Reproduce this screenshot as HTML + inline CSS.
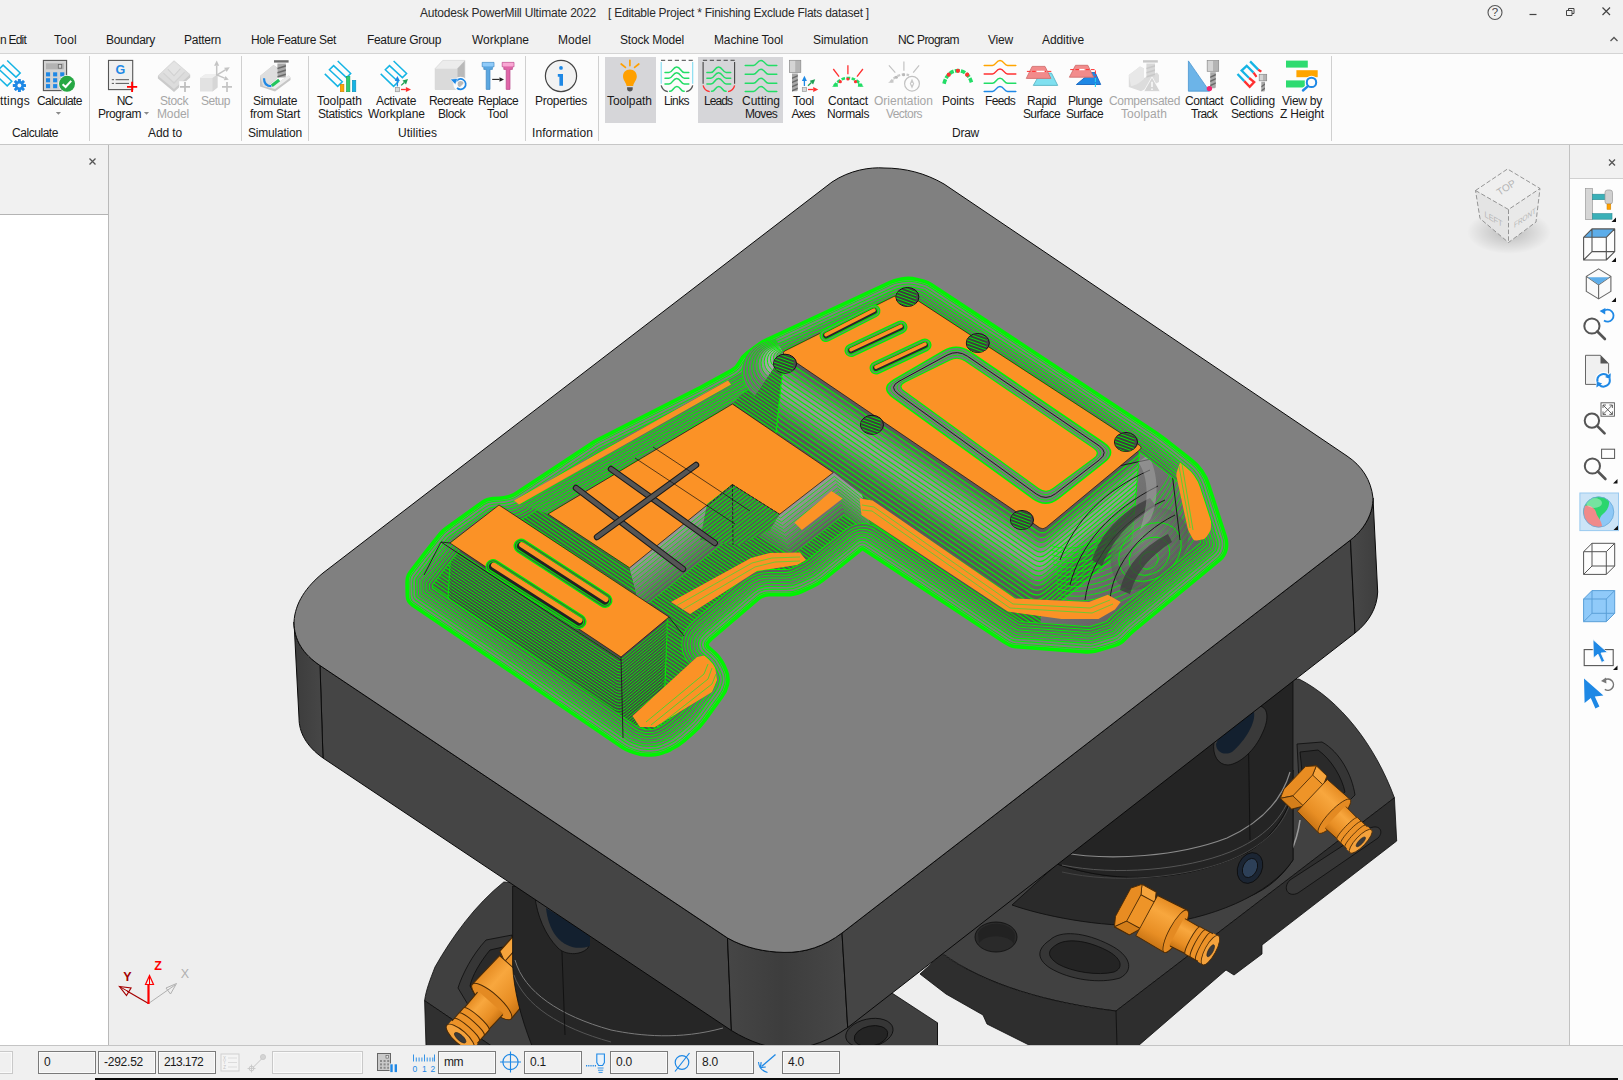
<!DOCTYPE html>
<html lang="en"><head><meta charset="utf-8"><title>Autodesk PowerMill Ultimate 2022</title>
<style>
html,body{margin:0;padding:0;background:#f0f0f0;}
body{width:1623px;height:1080px;overflow:hidden;font-family:"Liberation Sans",sans-serif;}
#app{position:relative;width:1623px;height:1080px;overflow:hidden;background:#f0f0f0;}
.t{position:absolute;width:300px;text-align:center;white-space:nowrap;line-height:1.2;font-family:"Liberation Sans",sans-serif;}
.abs{position:absolute;}
#titlebar{position:absolute;left:0;top:0;width:1623px;height:27px;background:#f1f1f1;}
#tabs{position:absolute;left:0;top:27px;width:1623px;height:26px;background:#f1f1f1;border-bottom:1px solid #d4d4d4;}
#ribbon{position:absolute;left:0;top:54px;width:1623px;height:90px;background:#fcfcfc;border-bottom:1px solid #c6c6c6;}
.sep{position:absolute;top:56px;width:1px;height:85px;background:#d0d0d0;}
.hl{position:absolute;top:57px;height:66px;background:#d6d6d9;}
#leftpanel{position:absolute;left:0;top:145px;width:108px;height:900px;background:#fff;border-right:1px solid #b9b9b9;}
#leftpanel .hd{position:absolute;left:0;top:0;width:108px;height:69px;background:#f1f1f1;border-bottom:1px solid #b4b4b4;}
#rightpanel{position:absolute;left:1569px;top:145px;width:54px;height:900px;background:#fdfdfd;border-left:1px solid #c2c2c2;}
#rightpanel .hd{position:absolute;left:0;top:0;width:54px;height:33px;background:#f1f1f1;border-bottom:1px solid #d0d0d0;}
#status{position:absolute;left:0;top:1045px;width:1623px;height:35px;background:#f0f0f0;border-top:1px solid #c4c4c4;}
.fld{position:absolute;top:1051px;height:23px;border:1px solid #7a7a7a;background:#f0f0f0;box-sizing:border-box;box-shadow:inset 0 0 0 1px #fafafa;}
.fld.dim{border-color:#c9c9c9;}
#blackline{position:absolute;left:95px;top:1078px;width:1523px;height:2px;background:#0a0a0a;}
#scene{position:absolute;left:109px;top:145px;width:1460px;height:900px;background:#eeeeee;overflow:hidden;}
#scene svg{position:absolute;left:-109px;top:-145px;}
svg.ic{position:absolute;overflow:visible;}

</style></head>
<body>
<div id="app">
<div id="scene"><svg width="1623" height="1080" viewBox="0 0 1623 1080">
<defs>
<linearGradient id="gLc" x1="0" y1="0" x2="1" y2="0"><stop offset="0" stop-color="#3c3c3c"/><stop offset="1" stop-color="#474747"/></linearGradient>
<linearGradient id="gBc" x1="0" y1="0" x2="1" y2="0"><stop offset="0" stop-color="#464646"/><stop offset="0.45" stop-color="#3d3d3d"/><stop offset="1" stop-color="#474747"/></linearGradient>
<linearGradient id="gRc" x1="0" y1="0" x2="1" y2="0"><stop offset="0" stop-color="#484848"/><stop offset="1" stop-color="#3e3e3e"/></linearGradient>
<pattern id="wall" width="3.2" height="3.2" patternUnits="userSpaceOnUse" patternTransform="rotate(34)"><rect width="3.2" height="3.2" fill="#505050"/><rect width="3.2" height="1.15" fill="#00f000"/></pattern>
<pattern id="wall2" width="2.6" height="2.6" patternUnits="userSpaceOnUse" patternTransform="rotate(34)"><rect width="2.6" height="2.6" fill="#6e6e6e"/><rect width="2.6" height="1.2" fill="#00f000"/></pattern>
<pattern id="wallB" width="3.0" height="3.0" patternUnits="userSpaceOnUse" patternTransform="rotate(-29)"><rect width="3.0" height="3.0" fill="#6a6a6a"/><rect width="3.0" height="1.3" fill="#00f000"/></pattern>
<pattern id="wallV" width="3.2" height="3.2" patternUnits="userSpaceOnUse" patternTransform="rotate(-38)"><rect width="3.2" height="3.2" fill="#585858"/><rect width="3.2" height="1.15" fill="#00f000"/></pattern>
<pattern id="wallN" width="3.4" height="3.4" patternUnits="userSpaceOnUse" patternTransform="rotate(-38)"><rect width="3.4" height="3.4" fill="#707070"/><rect width="3.4" height="1.1" fill="#00f000"/></pattern>
<pattern id="wallL" width="3.6" height="3.6" patternUnits="userSpaceOnUse" patternTransform="rotate(34)"><rect width="3.6" height="3.6" fill="#747474"/><rect width="3.6" height="1.1" fill="#00f000"/></pattern>
<pattern id="wallH" width="3" height="3" patternUnits="userSpaceOnUse" patternTransform="rotate(20)"><rect width="3" height="3" fill="#3c3c3c"/><rect width="3" height="1" fill="#00f000"/></pattern>
<linearGradient id="gNose" x1="0" y1="0" x2="1" y2="1"><stop offset="0" stop-color="#8a8a8a"/><stop offset="0.5" stop-color="#6a6a6a"/><stop offset="1" stop-color="#4a4a4a"/></linearGradient>
<radialGradient id="gChuck" cx="0.4" cy="0.35" r="0.7"><stop offset="0" stop-color="#8a8a8a"/><stop offset="1" stop-color="#4c4c4c"/></radialGradient>
<linearGradient id="gFit" x1="0" y1="0" x2="0" y2="1"><stop offset="0" stop-color="#e58b22"/><stop offset="0.3" stop-color="#f8a73e"/><stop offset="0.75" stop-color="#e88e24"/><stop offset="1" stop-color="#c97414"/></linearGradient>
</defs>
<!--FIXTURES-->
<g id="fixR" stroke="#0c0c0c" stroke-width="0.8" stroke-linejoin="round">
<!-- flange top -->
<path d="M1150,700 L1299,679 C1340,700 1375,745 1394.4,797.8 L1116,1011 C1050,1003 985,985 942,953 L900,900 Z" fill="#414141"/>
<!-- flange front -->
<path d="M942,953.7 C985,985 1050,1003 1116,1011 L1394.4,797.8 L1396.7,841 L1262,945 L1262,954 L1234,975 L1226,970 L1138,1046 L1031,1046 L987,1024 L983,1015 L946,994 L920,974 Z" fill="#2e2e2e"/>
<path d="M1116,1011 L1117,1046" fill="none" stroke="#0c0c0c"/>
<!-- recess upper-right -->
<path d="M1297,744 L1322,742 C1340,752 1352,775 1355,795 L1338,812 L1300,800 Z" fill="#353535"/>
<path d="M1300,752 L1318,750 C1332,760 1342,778 1345,792 L1334,802 L1304,790 Z" fill="#2a2a2a"/>
<!-- right obround slot -->
<path d="M1290,880 L1370,828 C1380,824 1384,832 1378,838 L1298,893 C1288,898 1282,888 1290,880 Z" fill="#363636"/>
<!-- inner curved surface right of cylinder -->
<path d="M1293,770 L1293,860 C1280,880 1262,893 1240,900 L1200,890 C1250,870 1285,830 1293,770 Z" fill="#2d2d2d"/>
<path d="M1300,820 C1296,850 1282,872 1262,888" fill="none" stroke="#9a9a9a" stroke-width="1.6"/>
<!-- holes on flange top -->
<ellipse cx="996" cy="937" rx="21" ry="15" fill="#2a2a2a"/>
<path d="M978,933 A19,13 0 0 1 1015,935 L1014,944 A19,12 0 0 0 979,943 Z" fill="#222" stroke="none"/>
<path d="M1050,940 C1060,930 1085,932 1110,945 C1130,955 1135,970 1120,978 C1100,984 1070,980 1050,968 C1035,958 1038,948 1050,940 Z" fill="#363636"/>
<path d="M1056,945 C1066,938 1086,940 1106,950 C1122,958 1124,968 1114,972 C1098,976 1072,972 1058,964 C1046,956 1048,950 1056,945 Z" fill="#242424"/>
<!-- base ring under cylinder -->
<path d="M1057,864 C1120,886 1190,880 1246,853 C1270,840 1288,815 1293,790 L1293,860 C1270,895 1210,920 1150,925 C1100,928 1040,915 1012,905 Z" fill="#2a2a2a"/>
<!-- cylinder -->
<path d="M1293,681 L1293,790 C1288,815 1270,840 1246,853 C1190,880 1120,886 1057,864 L1000,800 Z" fill="#242424"/>
<path d="M1290,772 C1282,800 1262,822 1227,838 C1180,856 1110,862 1060,852" fill="none" stroke="#8a8a8a" stroke-width="1.2"/>
<path d="M1292,790 C1284,818 1264,838 1230,852 C1185,870 1115,876 1062,865" fill="none" stroke="#555" stroke-width="1"/>
<path d="M1292,798 C1284,826 1264,846 1230,860 C1185,878 1115,884 1062,872" fill="none" stroke="#444" stroke-width="1"/>
<line x1="1248" y1="715" x2="1250" y2="840" stroke="#0c0c0c"/>
<!-- blue slot in cylinder -->
<path d="M1214,742 C1222,725 1245,708 1258,706 C1268,706 1270,718 1262,734 C1255,750 1240,764 1228,765 C1218,765 1212,755 1214,742 Z" fill="#3a3a3a"/>
<path d="M1216,744 C1222,728 1243,712 1254,712 C1256,722 1246,740 1232,752 C1224,756 1216,752 1216,744 Z" fill="#13202f" stroke="none"/>
<!-- blue bolt -->
<ellipse cx="1250" cy="868" rx="12" ry="16" transform="rotate(25 1250 868)" fill="#1b2533"/>
<ellipse cx="1250" cy="868" rx="7" ry="10" transform="rotate(25 1250 868)" fill="#2d4058"/>
<!-- fittings -->
<g transform="translate(1134.4,908.9) rotate(28.5) scale(1.0,1.2)" stroke="#4a2a06" stroke-width="0.8" stroke-linejoin="round">
<path d="M-13,-14 L-5,-21 L11,-21 L15,-13 L15,12 L8,21 L-9,21 L-13,13 Z" fill="#ee9428"/>
<path d="M-5,-21 L11,-21 L15,-13 L-1,-13 Z" fill="#f6a43c"/>
<path d="M-13,-14 L-5,-21 L-1,-13 L-1,12 L-9,21 L-13,13 Z" fill="#e88c22"/>
<path d="M-1,12 L15,12 L8,21 L-9,21 Z" fill="#d47e1a"/>
<path d="M14,-19 L46,-20 C51,-20 53,-10 53,0 C53,10 51,20 46,20 L14,19 Z" fill="url(#gFit)"/>
<ellipse cx="47" cy="0" rx="6.4" ry="20" fill="#e48a22"/>
<path d="M48,-13 L68,-12.5 L68,12.5 L48,13 Z" fill="url(#gFit)" stroke="none"/><path d="M49,-13 L68,-12.5 M49,13 L68,12.5" fill="none"/>
<path d="M66.5,-13 L71.5,-13 C75.5,-13 75.5,13 71.5,13 L66.5,13 C62.5,13 62.5,-13 66.5,-13 Z" fill="#ec9228"/>
<path d="M72.5,-13 L77.5,-13 C81.5,-13 81.5,13 77.5,13 L72.5,13 C68.5,13 68.5,-13 72.5,-13 Z" fill="#ec9228"/>
<path d="M78.5,-13 L83.5,-13 C87.5,-13 87.5,13 83.5,13 L78.5,13 C74.5,13 74.5,-13 78.5,-13 Z" fill="#ec9228"/>
<path d="M81,-13.5 L86,-13.5 L86,13.5 L81,13.5 Z" fill="#ec9228" stroke="none"/><ellipse cx="86.5" cy="0" rx="5.4" ry="13.8" fill="#f4a23c"/>
<ellipse cx="87" cy="0.3" rx="2.4" ry="5.6" fill="#3a3a3a" stroke="#222" stroke-width="0.5"/>
</g>
<g transform="translate(1303,786.5) rotate(43.5) scale(0.92,1.15)" stroke="#4a2a06" stroke-width="0.8" stroke-linejoin="round">
<path d="M-13,-14 L-5,-21 L11,-21 L15,-13 L15,12 L8,21 L-9,21 L-13,13 Z" fill="#ee9428"/>
<path d="M-5,-21 L11,-21 L15,-13 L-1,-13 Z" fill="#f6a43c"/>
<path d="M-13,-14 L-5,-21 L-1,-13 L-1,12 L-9,21 L-13,13 Z" fill="#e88c22"/>
<path d="M-1,12 L15,12 L8,21 L-9,21 Z" fill="#d47e1a"/>
<path d="M14,-19 L46,-20 C51,-20 53,-10 53,0 C53,10 51,20 46,20 L14,19 Z" fill="url(#gFit)"/>
<ellipse cx="47" cy="0" rx="6.4" ry="20" fill="#e48a22"/>
<path d="M48,-13 L68,-12.5 L68,12.5 L48,13 Z" fill="url(#gFit)" stroke="none"/><path d="M49,-13 L68,-12.5 M49,13 L68,12.5" fill="none"/>
<path d="M66.5,-13 L71.5,-13 C75.5,-13 75.5,13 71.5,13 L66.5,13 C62.5,13 62.5,-13 66.5,-13 Z" fill="#ec9228"/>
<path d="M72.5,-13 L77.5,-13 C81.5,-13 81.5,13 77.5,13 L72.5,13 C68.5,13 68.5,-13 72.5,-13 Z" fill="#ec9228"/>
<path d="M78.5,-13 L83.5,-13 C87.5,-13 87.5,13 83.5,13 L78.5,13 C74.5,13 74.5,-13 78.5,-13 Z" fill="#ec9228"/>
<path d="M81,-13.5 L86,-13.5 L86,13.5 L81,13.5 Z" fill="#ec9228" stroke="none"/><ellipse cx="86.5" cy="0" rx="5.4" ry="13.8" fill="#f4a23c"/>
<ellipse cx="87" cy="0.3" rx="2.4" ry="5.6" fill="#3a3a3a" stroke="#222" stroke-width="0.5"/>
</g>
</g>
<g id="fixL" stroke="#0c0c0c" stroke-width="0.8" stroke-linejoin="round">
<path d="M503.8,882 C475,905 452,937 435,967 C430,980 426,990 424.6,1000.7 L491.5,1046 L937.5,1046 L937.5,1022.8 L892.8,993.6 L760,900 Z" fill="#404040"/>
<path d="M424.6,1000.7 L491.5,1046 L426,1046 Z" fill="#303030"/>
<!-- recess with fitting -->
<path d="M512,935 L486,940 C472,955 462,975 458,988 L470,1008 L512,990 Z" fill="#363636"/>
<path d="M512,945 L490,950 C480,962 472,976 470,986 L478,1000 L512,986 Z" fill="#2a2a2a"/>
<!-- fittingL -->
<g transform="translate(529.2,959.4) rotate(131.6) scale(1.2,-1.3)" stroke="#4a2a06" stroke-width="0.8" stroke-linejoin="round">
<path d="M-13,-14 L-5,-21 L11,-21 L15,-13 L15,12 L8,21 L-9,21 L-13,13 Z" fill="#ee9428"/>
<path d="M-5,-21 L11,-21 L15,-13 L-1,-13 Z" fill="#f6a43c"/>
<path d="M-13,-14 L-5,-21 L-1,-13 L-1,12 L-9,21 L-13,13 Z" fill="#e88c22"/>
<path d="M-1,12 L15,12 L8,21 L-9,21 Z" fill="#d47e1a"/>
<path d="M14,-19 L46,-20 C51,-20 53,-10 53,0 C53,10 51,20 46,20 L14,19 Z" fill="url(#gFit)"/>
<ellipse cx="47" cy="0" rx="6.4" ry="20" fill="#e48a22"/>
<path d="M48,-13 L68,-12.5 L68,12.5 L48,13 Z" fill="url(#gFit)" stroke="none"/><path d="M49,-13 L68,-12.5 M49,13 L68,12.5" fill="none"/>
<path d="M66.5,-13 L71.5,-13 C75.5,-13 75.5,13 71.5,13 L66.5,13 C62.5,13 62.5,-13 66.5,-13 Z" fill="#ec9228"/>
<path d="M72.5,-13 L77.5,-13 C81.5,-13 81.5,13 77.5,13 L72.5,13 C68.5,13 68.5,-13 72.5,-13 Z" fill="#ec9228"/>
<path d="M78.5,-13 L83.5,-13 C87.5,-13 87.5,13 83.5,13 L78.5,13 C74.5,13 74.5,-13 78.5,-13 Z" fill="#ec9228"/>
<path d="M81,-13.5 L86,-13.5 L86,13.5 L81,13.5 Z" fill="#ec9228" stroke="none"/><ellipse cx="86.5" cy="0" rx="5.4" ry="13.8" fill="#f4a23c"/>
<ellipse cx="87" cy="0.3" rx="2.4" ry="5.6" fill="#3a3a3a" stroke="#222" stroke-width="0.5"/>
</g>
<!-- /fittingL -->
<!-- cylinder -->
<path d="M512.6,886 L512.6,965 C514,990 520,1015 532,1046 L760,1046 L760,900 Z" fill="#262626"/>
<path d="M515,960 C524,992 560,1016 611,1030 C640,1036 680,1040 723,1028" fill="none" stroke="#7a7a7a" stroke-width="1"/>
<path d="M514,975 C524,1005 560,1028 611,1042" fill="none" stroke="#555" stroke-width="1"/>
<line x1="561" y1="925" x2="565" y2="1035" stroke="#0c0c0c"/>
<path d="M535,897 C537,915 545,935 558,948 C565,955 580,956 588,948 L590,930 Z" fill="#3a3a3a"/>
<path d="M546,908 L590,934 L590,946 C578,950 566,948 556,936 C550,928 547,918 546,908 Z" fill="#13202f" stroke="none"/>
<!-- hole right of bottom corner -->
<ellipse cx="869.4" cy="1033" rx="24" ry="14" transform="rotate(-12 869 1033)" fill="#363636"/>
<ellipse cx="871" cy="1036" rx="17" ry="10" transform="rotate(-12 871 1036)" fill="#242424"/>
<path d="M937.5,1022.8 L937.5,1046" fill="none"/>
</g>

<!--BLOCK-->
<g id="block" stroke="#0a0a0a" stroke-width="1" stroke-linejoin="round">
<path d="M320,665.5 L727.5,938 L731.4,1030.5 L323,758 Z" fill="#454545"/>
<path d="M294,622 C294,640 303,654 320,665.5 L323,758 C306,746 299,732 299,718 Z" fill="url(#gLc)"/>
<path d="M727.5,938 C745,948 765,952 784,952.4 C805,953 825,946 842,933 L847.7,1027.6 C830,1040 810,1048 790,1049 C770,1049 750,1042 731.4,1030.5 Z" fill="url(#gBc)"/>
<path d="M842,933 L1350.5,540 L1355,633 L847.7,1027.6 Z" fill="#454545"/>
<path d="M1350.5,540 C1366,528 1373,512 1373,498 L1377.7,592 C1377,608 1369,622 1355,633 Z" fill="url(#gRc)"/>
<path d="M323,573 L832,182 C850,170 870,167 884,168 C905,168 925,173 944,184 L1347,456 C1362,466 1371,480 1373,498 C1373,512 1366,528 1350.5,540 L842,933 C825,946 805,953 784,952.4 C765,952 745,948 727.5,938 L320,665.5 C303,654 294,640 294,622 C295,603 306,587 323,573 Z" fill="#808080"/>
</g>
<g id="pocket">
<clipPath id="cpOut"><path d="M890.8,282.1 Q894.4,280.4 898.3,279.7 L901.8,279.0 Q909.3,277.6 916.7,279.4 L923.9,281.2 Q927.8,282.2 931.1,284.4 L1154.0,431.5 Q1159.0,434.8 1163.8,438.5 L1173.7,446.1 Q1180.0,451.0 1186.2,456.0 L1191.8,460.5 Q1203.7,470.0 1208.4,484.4 L1225.4,536.7 Q1227.5,543.0 1226.0,549.5 L1226.0,549.5 Q1224.5,556.0 1219.3,560.2 L1134.6,629.9 Q1130.0,633.7 1125.9,638.1 L1124.8,639.3 Q1120.7,643.7 1115.0,645.4 L1098.5,650.4 Q1094.8,651.5 1090.9,651.8 L1090.9,651.8 Q1087.0,652.0 1083.1,651.7 L1015.3,646.6 Q1011.9,646.3 1009.0,644.6 L1008.6,644.5 Q1006.0,643.0 1003.5,641.4 L863.2,549.0 Q862.4,548.5 861.6,549.1 L823.2,579.9 Q818.5,583.7 813.1,586.2 L801.7,591.5 Q794.4,594.8 786.4,594.8 L769.0,594.8 Q763.0,594.8 758.4,598.7 L713.3,637.1 Q711.0,639.0 709.0,641.2 L708.3,641.9 Q705.6,644.8 708.6,647.4 L714.4,652.5 Q720.4,657.8 723.7,665.1 L726.1,670.5 Q729.0,677.0 727.5,684.0 L727.5,684.0 Q726.0,691.0 721.8,696.8 L704.7,720.5 Q700.0,727.0 693.9,732.2 L683.9,740.8 Q677.8,746.0 670.6,749.5 L666.2,751.5 Q659.0,755.0 651.0,755.0 L646.7,755.0 Q640.7,755.0 635.1,752.9 L629.8,751.0 Q626.0,749.6 622.7,747.4 L412.4,604.9 Q407.4,601.5 407.3,595.5 L407.1,584.0 Q407.0,581.0 407.5,578.0 L407.5,578.0 Q408.0,575.0 409.9,572.6 L425.6,552.2 Q428.0,549.0 430.5,545.9 L440.1,533.8 Q442.6,530.7 445.9,528.4 L482.1,502.5 Q487.0,499.0 493.0,498.6 L499.7,498.2 Q503.7,498.0 507.6,497.0 L510.1,496.3 Q513.0,495.5 515.5,493.8 L592.0,443.2 Q594.5,441.5 597.2,440.1 L697.3,389.2 Q700.0,387.8 702.6,386.4 L731.7,370.3 Q737.0,367.4 739.7,362.0 L739.9,361.7 Q742.6,356.3 747.5,352.8 L759.8,343.8 Q763.0,341.5 766.6,339.8 Z"/></clipPath>
<path d="M890.8,282.1 Q894.4,280.4 898.3,279.7 L901.8,279.0 Q909.3,277.6 916.7,279.4 L923.9,281.2 Q927.8,282.2 931.1,284.4 L1154.0,431.5 Q1159.0,434.8 1163.8,438.5 L1173.7,446.1 Q1180.0,451.0 1186.2,456.0 L1191.8,460.5 Q1203.7,470.0 1208.4,484.4 L1225.4,536.7 Q1227.5,543.0 1226.0,549.5 L1226.0,549.5 Q1224.5,556.0 1219.3,560.2 L1134.6,629.9 Q1130.0,633.7 1125.9,638.1 L1124.8,639.3 Q1120.7,643.7 1115.0,645.4 L1098.5,650.4 Q1094.8,651.5 1090.9,651.8 L1090.9,651.8 Q1087.0,652.0 1083.1,651.7 L1015.3,646.6 Q1011.9,646.3 1009.0,644.6 L1008.6,644.5 Q1006.0,643.0 1003.5,641.4 L863.2,549.0 Q862.4,548.5 861.6,549.1 L823.2,579.9 Q818.5,583.7 813.1,586.2 L801.7,591.5 Q794.4,594.8 786.4,594.8 L769.0,594.8 Q763.0,594.8 758.4,598.7 L713.3,637.1 Q711.0,639.0 709.0,641.2 L708.3,641.9 Q705.6,644.8 708.6,647.4 L714.4,652.5 Q720.4,657.8 723.7,665.1 L726.1,670.5 Q729.0,677.0 727.5,684.0 L727.5,684.0 Q726.0,691.0 721.8,696.8 L704.7,720.5 Q700.0,727.0 693.9,732.2 L683.9,740.8 Q677.8,746.0 670.6,749.5 L666.2,751.5 Q659.0,755.0 651.0,755.0 L646.7,755.0 Q640.7,755.0 635.1,752.9 L629.8,751.0 Q626.0,749.6 622.7,747.4 L412.4,604.9 Q407.4,601.5 407.3,595.5 L407.1,584.0 Q407.0,581.0 407.5,578.0 L407.5,578.0 Q408.0,575.0 409.9,572.6 L425.6,552.2 Q428.0,549.0 430.5,545.9 L440.1,533.8 Q442.6,530.7 445.9,528.4 L482.1,502.5 Q487.0,499.0 493.0,498.6 L499.7,498.2 Q503.7,498.0 507.6,497.0 L510.1,496.3 Q513.0,495.5 515.5,493.8 L592.0,443.2 Q594.5,441.5 597.2,440.1 L697.3,389.2 Q700.0,387.8 702.6,386.4 L731.7,370.3 Q737.0,367.4 739.7,362.0 L739.9,361.7 Q742.6,356.3 747.5,352.8 L759.8,343.8 Q763.0,341.5 766.6,339.8 Z" fill="#5a5a5a"/>
<g clip-path="url(#cpOut)">
<path d="M890.8,282.1 Q894.4,280.4 898.3,279.7 L901.8,279.0 Q909.3,277.6 916.7,279.4 L923.9,281.2 Q927.8,282.2 931.1,284.4 L1154.0,431.5 Q1159.0,434.8 1163.8,438.5 L1173.7,446.1 Q1180.0,451.0 1186.2,456.0 L1191.8,460.5 Q1203.7,470.0 1208.4,484.4 L1225.4,536.7 Q1227.5,543.0 1226.0,549.5 L1226.0,549.5 Q1224.5,556.0 1219.3,560.2 L1134.6,629.9 Q1130.0,633.7 1125.9,638.1 L1124.8,639.3 Q1120.7,643.7 1115.0,645.4 L1098.5,650.4 Q1094.8,651.5 1090.9,651.8 L1090.9,651.8 Q1087.0,652.0 1083.1,651.7 L1015.3,646.6 Q1011.9,646.3 1009.0,644.6 L1008.6,644.5 Q1006.0,643.0 1003.5,641.4 L863.2,549.0 Q862.4,548.5 861.6,549.1 L823.2,579.9 Q818.5,583.7 813.1,586.2 L801.7,591.5 Q794.4,594.8 786.4,594.8 L769.0,594.8 Q763.0,594.8 758.4,598.7 L713.3,637.1 Q711.0,639.0 709.0,641.2 L708.3,641.9 Q705.6,644.8 708.6,647.4 L714.4,652.5 Q720.4,657.8 723.7,665.1 L726.1,670.5 Q729.0,677.0 727.5,684.0 L727.5,684.0 Q726.0,691.0 721.8,696.8 L704.7,720.5 Q700.0,727.0 693.9,732.2 L683.9,740.8 Q677.8,746.0 670.6,749.5 L666.2,751.5 Q659.0,755.0 651.0,755.0 L646.7,755.0 Q640.7,755.0 635.1,752.9 L629.8,751.0 Q626.0,749.6 622.7,747.4 L412.4,604.9 Q407.4,601.5 407.3,595.5 L407.1,584.0 Q407.0,581.0 407.5,578.0 L407.5,578.0 Q408.0,575.0 409.9,572.6 L425.6,552.2 Q428.0,549.0 430.5,545.9 L440.1,533.8 Q442.6,530.7 445.9,528.4 L482.1,502.5 Q487.0,499.0 493.0,498.6 L499.7,498.2 Q503.7,498.0 507.6,497.0 L510.1,496.3 Q513.0,495.5 515.5,493.8 L592.0,443.2 Q594.5,441.5 597.2,440.1 L697.3,389.2 Q700.0,387.8 702.6,386.4 L731.7,370.3 Q737.0,367.4 739.7,362.0 L739.9,361.7 Q742.6,356.3 747.5,352.8 L759.8,343.8 Q763.0,341.5 766.6,339.8 Z" fill="url(#wall)"/>
<path d="M1142.6,447.4 L1165.0,430.0 L1240.0,480.0 L1240.0,600.0 L1100.0,660.0 L1040.0,650.0 L1043.0,530.0 Z" fill="url(#gNose)"/>
<clipPath id="cpBody"><path d="M700,250 L1300,250 L1300,640 L1125,640 L1107.8,594.8 L1089,602 L1015,598.5 L872.6,500.4 L859.6,498.5 L833.3,472.6 L732.4,404 L700,420 Z"/></clipPath><g clip-path="url(#cpBody)">
<path d="M779.0,448.1 Q770.1,442.0 779.7,437.2 L884.8,384.7 Q894.4,379.9 903.4,385.8 L1127.7,532.4 Q1136.7,538.3 1128.4,545.2 L1043.9,615.3 Q1035.6,622.1 1026.7,616.1 Z" fill="#585858" stroke="#00f400" stroke-width="1.15"/>
<path d="M779.4,443.2 Q770.7,437.3 780.1,432.6 L885.5,380.0 Q894.9,375.3 903.7,381.0 L1128.2,527.8 Q1137.0,533.5 1128.9,540.2 L1044.1,610.6 Q1036.0,617.3 1027.3,611.4 Z" fill="#585858" stroke="#00f400" stroke-width="1.15"/>
<path d="M779.8,438.4 Q771.3,432.6 780.5,428.0 L886.2,375.2 Q895.4,370.6 904.0,376.2 L1128.7,523.1 Q1137.3,528.7 1129.4,535.3 L1044.3,605.9 Q1036.4,612.4 1027.9,606.7 Z" fill="#585858" stroke="#00f400" stroke-width="1.15"/>
<path d="M780.2,433.5 Q771.9,427.9 780.9,423.5 L886.9,370.4 Q895.9,365.9 904.3,371.4 L1129.3,518.5 Q1137.6,523.9 1129.9,530.3 L1044.5,601.2 Q1036.8,607.6 1028.5,602.0 Z" fill="#585858" stroke="#00f400" stroke-width="1.15"/>
<path d="M780.6,428.7 Q772.5,423.2 781.2,418.9 L887.7,365.6 Q896.4,361.3 904.5,366.6 L1129.8,513.8 Q1137.9,519.2 1130.4,525.4 L1044.7,596.5 Q1037.2,602.7 1029.1,597.3 Z" fill="#585858" stroke="#00f400" stroke-width="1.15"/>
<path d="M781.0,423.8 Q773.1,418.5 781.6,414.3 L888.4,360.9 Q896.9,356.6 904.8,361.8 L1130.3,509.2 Q1138.3,514.4 1130.9,520.4 L1044.9,591.8 Q1037.5,597.9 1029.7,592.6 Z" fill="#5b5b5b" stroke="#00f400" stroke-width="1.15"/>
<path d="M781.4,419.0 Q773.7,413.8 782.0,409.7 L889.1,356.1 Q897.4,352.0 905.1,357.0 L1130.8,504.5 Q1138.6,509.6 1131.4,515.5 L1045.1,587.1 Q1037.9,593.0 1030.3,587.9 Z" fill="#636363" stroke="#00f400" stroke-width="1.15"/>
<path d="M781.8,414.1 Q774.3,409.1 782.4,405.1 L889.8,351.3 Q897.9,347.3 905.4,352.2 L1131.3,499.9 Q1138.9,504.8 1132.0,510.5 L1045.3,582.5 Q1038.3,588.2 1030.9,583.1 Z" fill="#6e6e6e" stroke="#00f400" stroke-width="1.15"/>
<path d="M782.2,409.3 Q774.9,404.4 782.7,400.5 L890.6,346.6 Q898.4,342.6 905.7,347.4 L1131.9,495.2 Q1139.2,500.0 1132.5,505.6 L1045.4,577.8 Q1038.7,583.3 1031.5,578.4 Z" fill="#7a7a7a" stroke="#00f400" stroke-width="1.15"/>
<path d="M782.5,404.4 Q775.5,399.7 783.1,395.9 L891.3,341.8 Q898.9,338.0 906.0,342.6 L1132.4,490.6 Q1139.5,495.2 1133.0,500.7 L1045.6,573.1 Q1039.1,578.5 1032.1,573.7 Z" fill="#868686" stroke="#00f400" stroke-width="1.15"/>
<path d="M782.9,399.6 Q776.1,395.0 783.5,391.3 L892.0,337.0 Q899.4,333.3 906.3,337.8 L1132.9,485.9 Q1139.8,490.5 1133.5,495.7 L1045.8,568.4 Q1039.5,573.6 1032.7,569.0 Z" fill="#909090" stroke="#00f400" stroke-width="1.15"/>
<path d="M783.3,394.8 Q776.7,390.3 783.9,386.7 L892.7,332.2 Q899.9,328.7 906.6,333.0 L1133.4,481.3 Q1140.1,485.7 1134.0,490.8 L1046.0,563.7 Q1039.9,568.8 1033.3,564.3 Z" fill="#969696" stroke="#00f400" stroke-width="1.15"/>
<path d="M783.7,389.9 Q777.3,385.6 784.2,382.1 L893.5,327.5 Q900.4,324.0 906.9,328.3 L1133.9,476.6 Q1140.4,480.9 1134.5,485.8 L1046.2,559.0 Q1040.3,563.9 1033.9,559.6 Z" fill="#979797" stroke="#00f400" stroke-width="1.15"/>
<path d="M784.1,385.1 Q777.9,380.8 784.6,377.5 L894.2,322.7 Q900.9,319.4 907.2,323.5 L1134.5,472.0 Q1140.7,476.1 1135.0,480.9 L1046.4,554.3 Q1040.7,559.1 1034.5,554.9 Z" fill="#929292" stroke="#00f400" stroke-width="1.15"/>
<path d="M784.5,380.2 Q778.5,376.1 785.0,372.9 L894.9,317.9 Q901.4,314.7 907.5,318.7 L1135.0,467.4 Q1141.0,471.3 1135.5,475.9 L1046.6,549.6 Q1041.1,554.2 1035.1,550.2 Z" fill="#888888" stroke="#00f400" stroke-width="1.15"/>
<path d="M784.9,375.4 Q779.1,371.4 785.4,368.3 L895.6,313.2 Q901.9,310.0 907.8,313.9 L1135.5,462.7 Q1141.4,466.5 1136.0,471.0 L1046.8,544.9 Q1041.4,549.4 1035.6,545.5 Z" fill="#7c7c7c" stroke="#00f400" stroke-width="1.15"/>
<path d="M785.3,370.5 Q779.7,366.7 785.7,363.7 L896.4,308.4 Q902.4,305.4 908.0,309.1 L1136.0,458.1 Q1141.7,461.8 1136.5,466.1 L1047.0,540.2 Q1041.8,544.5 1036.2,540.8 Z" fill="#6f6f6f" stroke="#00f400" stroke-width="1.15"/>
<path d="M785.7,365.7 Q780.3,362.0 786.1,359.1 L897.1,303.6 Q902.9,300.7 908.3,304.3 L1136.5,453.4 Q1142.0,457.0 1137.0,461.1 L1047.2,535.6 Q1042.2,539.7 1036.8,536.1 Z" fill="#636363" stroke="#00f400" stroke-width="1.15"/>
<path d="M786.1,360.8 Q780.9,357.3 786.5,354.5 L897.8,298.9 Q903.4,296.1 908.6,299.5 L1137.1,448.8 Q1142.3,452.2 1137.5,456.2 L1047.4,530.9 Q1042.6,534.8 1037.4,531.3 Z" fill="#5a5a5a" stroke="#00f400" stroke-width="1.15"/>
</g>
<path d="M1050.0,545.0 C1085.0,560.0 1150.0,520.0 1172.0,470.0" fill="none" stroke="#00f400" stroke-width="0.9"/>
<path d="M1050.8,549.8 C1085.6,564.8 1151.5,525.4 1174.3,474.2" fill="none" stroke="#00f400" stroke-width="0.9"/>
<path d="M1051.5,554.5 C1086.2,569.5 1153.1,530.8 1176.6,478.5" fill="none" stroke="#00f400" stroke-width="0.9"/>
<path d="M1052.3,559.3 C1086.8,574.3 1154.6,536.2 1178.9,482.7" fill="none" stroke="#00f400" stroke-width="0.9"/>
<path d="M1053.1,564.1 C1087.5,579.1 1156.2,541.5 1181.2,486.9" fill="none" stroke="#00f400" stroke-width="0.9"/>
<path d="M1053.8,568.8 C1088.1,583.8 1157.7,546.9 1183.5,491.2" fill="none" stroke="#00f400" stroke-width="0.9"/>
<path d="M1054.6,573.6 C1088.7,588.6 1159.2,552.3 1185.8,495.4" fill="none" stroke="#00f400" stroke-width="0.9"/>
<path d="M1055.4,578.4 C1089.3,593.4 1160.8,557.7 1188.2,499.6" fill="none" stroke="#00f400" stroke-width="0.9"/>
<path d="M1056.2,583.2 C1089.9,598.2 1162.3,563.1 1190.5,503.8" fill="none" stroke="#00f400" stroke-width="0.9"/>
<path d="M1056.9,587.9 C1090.5,602.9 1163.8,568.5 1192.8,508.1" fill="none" stroke="#00f400" stroke-width="0.9"/>
<path d="M1057.7,592.7 C1091.2,607.7 1165.4,573.8 1195.1,512.3" fill="none" stroke="#00f400" stroke-width="0.9"/>
<path d="M1058.5,597.5 C1091.8,612.5 1166.9,579.2 1197.4,516.5" fill="none" stroke="#00f400" stroke-width="0.9"/>
<path d="M1059.2,602.2 C1092.4,617.2 1168.5,584.6 1199.7,520.8" fill="none" stroke="#00f400" stroke-width="0.9"/>
<path d="M1060.0,607.0 C1093.0,622.0 1170.0,590.0 1202.0,525.0" fill="none" stroke="#00f400" stroke-width="0.9"/>
<path d="M1125,520 C1150,500 1180,505 1188,530 C1192,560 1160,590 1130,590 C1105,585 1105,540 1125,520 Z" fill="url(#gChuck)" opacity="0.55"/>
<ellipse cx="1150.0" cy="552.0" rx="34" ry="26.0" transform="rotate(-38 1150 552)" fill="none" stroke="#00f400" stroke-width="0.9"/>
<ellipse cx="1147.0" cy="555.0" rx="22" ry="17.0" transform="rotate(-38 1150 552)" fill="none" stroke="#00f400" stroke-width="0.9"/>
<ellipse cx="1144.0" cy="558.0" rx="10" ry="8.0" transform="rotate(-38 1150 552)" fill="none" stroke="#00f400" stroke-width="0.9"/>
<path d="M1060,560 C1075,520 1105,490 1150,470 M1085,600 C1090,560 1120,520 1165,500 M1100,470 L1170,455 L1180,540 M1070,585 C1080,545 1110,510 1158,486 M1110,600 C1112,570 1135,535 1175,515" fill="none" stroke="#1a1a1a" stroke-width="1"/>
<path d="M1092,560 C1100,535 1120,512 1150,498 L1156,506 C1130,520 1112,540 1102,566 Z M1120,590 C1124,570 1140,548 1168,534 L1172,542 C1150,556 1136,572 1130,594 Z" fill="#3a3a3a" opacity="0.75"/>
<path d="M1148,455 C1158,470 1160,500 1150,520 L1140,530 C1150,500 1148,475 1138,462 Z" fill="#b0b0b0" opacity="0.45"/>
<path d="M629.6,567.8 L732.4,484.6 L779.6,514.3 L833.3,472.6 L862.0,495.0 L873.0,536.8 L844.3,514.4 L790.6,556.1 L743.4,526.4 L640.6,609.6 Z" fill="#7e7e7e"/>
<path d="M639.6,605.8 L742.4,522.6 L789.6,552.3 L843.3,510.6 L872.0,533.0 L873.0,536.8 L844.3,514.4 L790.6,556.1 L743.4,526.4 L640.6,609.6 Z" fill="#606060"/>
<path d="M640.6,609.6 L743.4,526.4 L790.6,556.1 L844.3,514.4 L873.0,536.8" fill="none" stroke="#00f400" stroke-width="0.8" stroke-linejoin="round"/>
<path d="M638.6,602.0 L741.4,518.8 L788.6,548.5 L842.3,506.8 L871.0,529.2 L872.0,533.0 L843.3,510.6 L789.6,552.3 L742.4,522.6 L639.6,605.8 Z" fill="#656565"/>
<path d="M639.6,605.8 L742.4,522.6 L789.6,552.3 L843.3,510.6 L872.0,533.0" fill="none" stroke="#00f400" stroke-width="0.8" stroke-linejoin="round"/>
<path d="M637.6,598.2 L740.4,515.0 L787.6,544.7 L841.3,503.0 L870.0,525.4 L871.0,529.2 L842.3,506.8 L788.6,548.5 L741.4,518.8 L638.6,602.0 Z" fill="#6a6a6a"/>
<path d="M638.6,602.0 L741.4,518.8 L788.6,548.5 L842.3,506.8 L871.0,529.2" fill="none" stroke="#00f400" stroke-width="0.8" stroke-linejoin="round"/>
<path d="M636.6,594.4 L739.4,511.2 L786.6,540.9 L840.3,499.2 L869.0,521.6 L870.0,525.4 L841.3,503.0 L787.6,544.7 L740.4,515.0 L637.6,598.2 Z" fill="#707070"/>
<path d="M637.6,598.2 L740.4,515.0 L787.6,544.7 L841.3,503.0 L870.0,525.4" fill="none" stroke="#00f400" stroke-width="0.8" stroke-linejoin="round"/>
<path d="M635.6,590.6 L738.4,507.4 L785.6,537.1 L839.3,495.4 L868.0,517.8 L869.0,521.6 L840.3,499.2 L786.6,540.9 L739.4,511.2 L636.6,594.4 Z" fill="#757575"/>
<path d="M636.6,594.4 L739.4,511.2 L786.6,540.9 L840.3,499.2 L869.0,521.6" fill="none" stroke="#00f400" stroke-width="0.8" stroke-linejoin="round"/>
<path d="M634.6,586.8 L737.4,503.6 L784.6,533.3 L838.3,491.6 L867.0,514.0 L868.0,517.8 L839.3,495.4 L785.6,537.1 L738.4,507.4 L635.6,590.6 Z" fill="#7b7b7b"/>
<path d="M635.6,590.6 L738.4,507.4 L785.6,537.1 L839.3,495.4 L868.0,517.8" fill="none" stroke="#00f400" stroke-width="0.8" stroke-linejoin="round"/>
<path d="M633.6,583.0 L736.4,499.8 L783.6,529.5 L837.3,487.8 L866.0,510.2 L867.0,514.0 L838.3,491.6 L784.6,533.3 L737.4,503.6 L634.6,586.8 Z" fill="#808080"/>
<path d="M634.6,586.8 L737.4,503.6 L784.6,533.3 L838.3,491.6 L867.0,514.0" fill="none" stroke="#00f400" stroke-width="0.8" stroke-linejoin="round"/>
<path d="M632.6,579.2 L735.4,496.0 L782.6,525.7 L836.3,484.0 L865.0,506.4 L866.0,510.2 L837.3,487.8 L783.6,529.5 L736.4,499.8 L633.6,583.0 Z" fill="#868686"/>
<path d="M633.6,583.0 L736.4,499.8 L783.6,529.5 L837.3,487.8 L866.0,510.2" fill="none" stroke="#00f400" stroke-width="0.8" stroke-linejoin="round"/>
<path d="M631.6,575.4 L734.4,492.2 L781.6,521.9 L835.3,480.2 L864.0,502.6 L865.0,506.4 L836.3,484.0 L782.6,525.7 L735.4,496.0 L632.6,579.2 Z" fill="#8b8b8b"/>
<path d="M632.6,579.2 L735.4,496.0 L782.6,525.7 L836.3,484.0 L865.0,506.4" fill="none" stroke="#00f400" stroke-width="0.8" stroke-linejoin="round"/>
<path d="M630.6,571.6 L733.4,488.4 L780.6,518.1 L834.3,476.4 L863.0,498.8 L864.0,502.6 L835.3,480.2 L781.6,521.9 L734.4,492.2 L631.6,575.4 Z" fill="#919191"/>
<path d="M631.6,575.4 L734.4,492.2 L781.6,521.9 L835.3,480.2 L864.0,502.6" fill="none" stroke="#00f400" stroke-width="0.8" stroke-linejoin="round"/>
<path d="M629.6,567.8 L732.4,484.6 L779.6,514.3 L833.3,472.6 L862.0,495.0 L863.0,498.8 L834.3,476.4 L780.6,518.1 L733.4,488.4 L630.6,571.6 Z" fill="#969696"/>
<path d="M630.6,571.6 L733.4,488.4 L780.6,518.1 L834.3,476.4 L863.0,498.8" fill="none" stroke="#00f400" stroke-width="0.8" stroke-linejoin="round"/>
<path d="M450.5,628.2 Q442.4,622.8 450.1,616.8 L485.3,589.5 Q493.0,583.6 501.1,588.9 L660.3,693.8 Q668.5,699.2 661.0,705.4 L626.4,734.2 Q618.9,740.5 610.8,735.1 Z" fill="#424242" stroke="#00f400" stroke-width="1.0"/>
<path d="M450.6,625.1 Q442.7,619.8 450.2,614.0 L485.7,586.5 Q493.2,580.6 501.1,585.9 L660.6,690.9 Q668.5,696.1 661.2,702.2 L626.3,731.3 Q619.0,737.4 611.1,732.1 Z" fill="#424242" stroke="#00f400" stroke-width="1.0"/>
<path d="M450.7,622.0 Q443.0,616.9 450.3,611.2 L486.1,583.4 Q493.4,577.7 501.2,582.8 L660.8,688.0 Q668.5,693.1 661.4,699.0 L626.2,728.4 Q619.1,734.3 611.4,729.2 Z" fill="#424242" stroke="#00f400" stroke-width="1.0"/>
<path d="M450.7,618.9 Q443.2,613.9 450.4,608.4 L486.5,580.3 Q493.7,574.8 501.2,579.8 L661.0,685.1 Q668.5,690.1 661.6,695.8 L626.1,725.4 Q619.2,731.2 611.7,726.2 Z" fill="#434343" stroke="#00f400" stroke-width="1.0"/>
<path d="M450.8,615.8 Q443.5,611.0 450.4,605.6 L487.0,577.3 Q493.9,571.9 501.2,576.7 L661.3,682.2 Q668.6,687.0 661.8,692.6 L626.0,722.5 Q619.2,728.1 612.0,723.3 Z" fill="#434343" stroke="#00f400" stroke-width="1.0"/>
<path d="M450.9,612.7 Q443.8,608.0 450.5,602.8 L487.4,574.2 Q494.1,569.0 501.2,573.7 L661.5,679.3 Q668.6,684.0 662.1,689.4 L625.8,719.6 Q619.3,725.0 612.2,720.3 Z" fill="#444444" stroke="#00f400" stroke-width="1.0"/>
<path d="M450.9,609.6 Q444.1,605.1 450.6,600.0 L487.8,571.2 Q494.3,566.1 501.2,570.6 L661.7,676.4 Q668.6,680.9 662.3,686.2 L625.7,716.6 Q619.4,721.9 612.5,717.4 Z" fill="#444444" stroke="#00f400" stroke-width="1.0"/>
<path d="M451.0,606.5 Q444.4,602.1 450.7,597.2 L488.2,568.1 Q494.5,563.2 501.2,567.6 L661.9,673.5 Q668.6,677.9 662.5,683.0 L625.6,713.7 Q619.5,718.8 612.8,714.4 Z" fill="#454545" stroke="#00f400" stroke-width="1.0"/>
<path d="M451.1,603.4 Q444.6,599.1 450.8,594.4 L488.6,565.0 Q494.8,560.3 501.2,564.5 L662.2,670.6 Q668.6,674.8 662.7,679.8 L625.5,710.8 Q619.5,715.7 613.1,711.4 Z" fill="#454545" stroke="#00f400" stroke-width="1.0"/>
<path d="M451.2,600.4 Q444.9,596.2 450.9,591.6 L489.1,562.0 Q495.0,557.4 501.3,561.5 L662.4,667.7 Q668.7,671.8 662.9,676.6 L625.4,707.9 Q619.6,712.7 613.4,708.5 Z" fill="#464646" stroke="#00f400" stroke-width="1.0"/>
<path d="M451.2,597.3 Q445.2,593.2 450.9,588.8 L489.5,558.9 Q495.2,554.5 501.3,558.4 L662.6,664.8 Q668.7,668.7 663.1,673.4 L625.3,704.9 Q619.7,709.6 613.7,705.5 Z" fill="#464646" stroke="#00f400" stroke-width="1.0"/>
<path d="M451.3,594.2 Q445.5,590.3 451.0,586.0 L489.9,555.8 Q495.4,551.6 501.3,555.4 L662.9,661.8 Q668.7,665.7 663.3,670.2 L625.2,702.0 Q619.8,706.5 614.0,702.6 Z" fill="#464646" stroke="#00f400" stroke-width="1.0"/>
<path d="M451.4,591.1 Q445.8,587.3 451.1,583.2 L490.3,552.8 Q495.7,548.6 501.3,552.4 L663.1,658.9 Q668.7,662.7 663.5,667.0 L625.0,699.1 Q619.9,703.4 614.2,699.6 Z" fill="#474747" stroke="#00f400" stroke-width="1.0"/>
<path d="M451.5,588.0 Q446.1,584.4 451.2,580.4 L490.7,549.7 Q495.9,545.7 501.3,549.3 L663.3,656.0 Q668.7,659.6 663.7,663.8 L624.9,696.1 Q619.9,700.3 614.5,696.7 Z" fill="#474747" stroke="#00f400" stroke-width="1.0"/>
<path d="M451.5,584.9 Q446.3,581.4 451.3,577.6 L491.2,546.7 Q496.1,542.8 501.3,546.3 L663.5,653.1 Q668.8,656.6 664.0,660.6 L624.8,693.2 Q620.0,697.2 614.8,693.7 Z" fill="#484848" stroke="#00f400" stroke-width="1.0"/>
<path d="M451.6,581.8 Q446.6,578.5 451.4,574.8 L491.6,543.6 Q496.3,539.9 501.3,543.2 L663.8,650.2 Q668.8,653.5 664.2,657.4 L624.7,690.3 Q620.1,694.1 615.1,690.8 Z" fill="#484848" stroke="#00f400" stroke-width="1.0"/>
<path d="M451.7,578.7 Q446.9,575.5 451.4,572.0 L492.0,540.5 Q496.5,537.0 501.3,540.2 L664.0,647.3 Q668.8,650.5 664.4,654.2 L624.6,687.3 Q620.2,691.0 615.4,687.8 Z" fill="#494949" stroke="#00f400" stroke-width="1.0"/>
<path d="M451.8,575.6 Q447.2,572.5 451.5,569.2 L492.4,537.5 Q496.8,534.1 501.4,537.1 L664.2,644.4 Q668.8,647.4 664.6,651.0 L624.5,684.4 Q620.2,687.9 615.7,684.9 Z" fill="#494949" stroke="#00f400" stroke-width="1.0"/>
<path d="M451.8,572.5 Q447.5,569.6 451.6,566.4 L492.8,534.4 Q497.0,531.2 501.4,534.1 L664.4,641.5 Q668.8,644.4 664.8,647.8 L624.3,681.5 Q620.3,684.8 615.9,681.9 Z" fill="#4a4a4a" stroke="#00f400" stroke-width="1.0"/>
<path d="M451.9,569.4 Q447.7,566.6 451.7,563.6 L493.3,531.3 Q497.2,528.3 501.4,531.0 L664.7,638.6 Q668.8,641.4 665.0,644.6 L624.2,678.5 Q620.4,681.7 616.2,679.0 Z" fill="#4a4a4a" stroke="#00f400" stroke-width="1.0"/>
<path d="M452.0,566.3 Q448.0,563.7 451.8,560.8 L493.7,528.3 Q497.4,525.4 501.4,528.0 L664.9,635.7 Q668.9,638.3 665.2,641.3 L624.1,675.6 Q620.5,678.6 616.5,676.0 Z" fill="#4a4a4a" stroke="#00f400" stroke-width="1.0"/>
<path d="M452.1,563.2 Q448.3,560.7 451.9,558.0 L494.1,525.2 Q497.7,522.5 501.4,524.9 L665.1,632.8 Q668.9,635.3 665.4,638.1 L624.0,672.7 Q620.5,675.6 616.8,673.1 Z" fill="#4b4b4b" stroke="#00f400" stroke-width="1.0"/>
<path d="M452.1,560.1 Q448.6,557.8 451.9,555.2 L494.5,522.2 Q497.9,519.5 501.4,521.9 L665.4,629.9 Q668.9,632.2 665.6,634.9 L623.9,669.7 Q620.6,672.5 617.1,670.1 Z" fill="#4b4b4b" stroke="#00f400" stroke-width="1.0"/>
<path d="M452.2,557.0 Q448.9,554.8 452.0,552.4 L494.9,519.1 Q498.1,516.6 501.4,518.8 L665.6,627.0 Q668.9,629.2 665.9,631.7 L623.8,666.8 Q620.7,669.4 617.4,667.1 Z" fill="#4c4c4c" stroke="#00f400" stroke-width="1.0"/>
<path d="M452.3,553.9 Q449.2,551.9 452.1,549.6 L495.4,516.0 Q498.3,513.7 501.5,515.8 L665.8,624.1 Q668.9,626.1 666.1,628.5 L623.7,663.9 Q620.8,666.3 617.7,664.2 Z" fill="#4c4c4c" stroke="#00f400" stroke-width="1.0"/>
<path d="M452.3,550.9 Q449.4,548.9 452.2,546.8 L495.8,513.0 Q498.6,510.8 501.5,512.7 L666.0,621.2 Q669.0,623.1 666.3,625.3 L623.5,660.9 Q620.8,663.2 617.9,661.2 Z" fill="#4d4d4d" stroke="#00f400" stroke-width="1.0"/>
<path d="M452.4,547.8 Q449.7,546.0 452.3,544.0 L496.2,509.9 Q498.8,507.9 501.5,509.7 L666.3,618.3 Q669.0,620.0 666.5,622.1 L623.4,658.0 Q620.9,660.1 618.2,658.3 Z" fill="#4d4d4d" stroke="#00f400" stroke-width="1.0"/>
<path d="M890.8,282.1 Q894.4,280.4 898.3,279.7 L901.8,279.0 Q909.3,277.6 916.7,279.4 L923.9,281.2 Q927.8,282.2 931.1,284.4 L1154.0,431.5 Q1159.0,434.8 1163.8,438.5 L1173.7,446.1 Q1180.0,451.0 1186.2,456.0 L1191.8,460.5 Q1203.7,470.0 1208.4,484.4 L1225.4,536.7 Q1227.5,543.0 1226.0,549.5 L1226.0,549.5 Q1224.5,556.0 1219.3,560.2 L1134.6,629.9 Q1130.0,633.7 1125.9,638.1 L1124.8,639.3 Q1120.7,643.7 1115.0,645.4 L1098.5,650.4 Q1094.8,651.5 1090.9,651.8 L1090.9,651.8 Q1087.0,652.0 1083.1,651.7 L1015.3,646.6 Q1011.9,646.3 1009.0,644.6 L1008.6,644.5 Q1006.0,643.0 1003.5,641.4 L863.2,549.0 Q862.4,548.5 861.6,549.1 L823.2,579.9 Q818.5,583.7 813.1,586.2 L801.7,591.5 Q794.4,594.8 786.4,594.8 L769.0,594.8 Q763.0,594.8 758.4,598.7 L713.3,637.1 Q711.0,639.0 709.0,641.2 L708.3,641.9 Q705.6,644.8 708.6,647.4 L714.4,652.5 Q720.4,657.8 723.7,665.1 L726.1,670.5 Q729.0,677.0 727.5,684.0 L727.5,684.0 Q726.0,691.0 721.8,696.8 L704.7,720.5 Q700.0,727.0 693.9,732.2 L683.9,740.8 Q677.8,746.0 670.6,749.5 L666.2,751.5 Q659.0,755.0 651.0,755.0 L646.7,755.0 Q640.7,755.0 635.1,752.9 L629.8,751.0 Q626.0,749.6 622.7,747.4 L412.4,604.9 Q407.4,601.5 407.3,595.5 L407.1,584.0 Q407.0,581.0 407.5,578.0 L407.5,578.0 Q408.0,575.0 409.9,572.6 L425.6,552.2 Q428.0,549.0 430.5,545.9 L440.1,533.8 Q442.6,530.7 445.9,528.4 L482.1,502.5 Q487.0,499.0 493.0,498.6 L499.7,498.2 Q503.7,498.0 507.6,497.0 L510.1,496.3 Q513.0,495.5 515.5,493.8 L592.0,443.2 Q594.5,441.5 597.2,440.1 L697.3,389.2 Q700.0,387.8 702.6,386.4 L731.7,370.3 Q737.0,367.4 739.7,362.0 L739.9,361.7 Q742.6,356.3 747.5,352.8 L759.8,343.8 Q763.0,341.5 766.6,339.8 Z" fill="none" stroke="#00f400" stroke-width="51.4" stroke-linejoin="round"/>
<path d="M890.8,282.1 Q894.4,280.4 898.3,279.7 L901.8,279.0 Q909.3,277.6 916.7,279.4 L923.9,281.2 Q927.8,282.2 931.1,284.4 L1154.0,431.5 Q1159.0,434.8 1163.8,438.5 L1173.7,446.1 Q1180.0,451.0 1186.2,456.0 L1191.8,460.5 Q1203.7,470.0 1208.4,484.4 L1225.4,536.7 Q1227.5,543.0 1226.0,549.5 L1226.0,549.5 Q1224.5,556.0 1219.3,560.2 L1134.6,629.9 Q1130.0,633.7 1125.9,638.1 L1124.8,639.3 Q1120.7,643.7 1115.0,645.4 L1098.5,650.4 Q1094.8,651.5 1090.9,651.8 L1090.9,651.8 Q1087.0,652.0 1083.1,651.7 L1015.3,646.6 Q1011.9,646.3 1009.0,644.6 L1008.6,644.5 Q1006.0,643.0 1003.5,641.4 L863.2,549.0 Q862.4,548.5 861.6,549.1 L823.2,579.9 Q818.5,583.7 813.1,586.2 L801.7,591.5 Q794.4,594.8 786.4,594.8 L769.0,594.8 Q763.0,594.8 758.4,598.7 L713.3,637.1 Q711.0,639.0 709.0,641.2 L708.3,641.9 Q705.6,644.8 708.6,647.4 L714.4,652.5 Q720.4,657.8 723.7,665.1 L726.1,670.5 Q729.0,677.0 727.5,684.0 L727.5,684.0 Q726.0,691.0 721.8,696.8 L704.7,720.5 Q700.0,727.0 693.9,732.2 L683.9,740.8 Q677.8,746.0 670.6,749.5 L666.2,751.5 Q659.0,755.0 651.0,755.0 L646.7,755.0 Q640.7,755.0 635.1,752.9 L629.8,751.0 Q626.0,749.6 622.7,747.4 L412.4,604.9 Q407.4,601.5 407.3,595.5 L407.1,584.0 Q407.0,581.0 407.5,578.0 L407.5,578.0 Q408.0,575.0 409.9,572.6 L425.6,552.2 Q428.0,549.0 430.5,545.9 L440.1,533.8 Q442.6,530.7 445.9,528.4 L482.1,502.5 Q487.0,499.0 493.0,498.6 L499.7,498.2 Q503.7,498.0 507.6,497.0 L510.1,496.3 Q513.0,495.5 515.5,493.8 L592.0,443.2 Q594.5,441.5 597.2,440.1 L697.3,389.2 Q700.0,387.8 702.6,386.4 L731.7,370.3 Q737.0,367.4 739.7,362.0 L739.9,361.7 Q742.6,356.3 747.5,352.8 L759.8,343.8 Q763.0,341.5 766.6,339.8 Z" fill="none" stroke="#5e5e5e" stroke-width="49.4" stroke-linejoin="round"/>
<path d="M890.8,282.1 Q894.4,280.4 898.3,279.7 L901.8,279.0 Q909.3,277.6 916.7,279.4 L923.9,281.2 Q927.8,282.2 931.1,284.4 L1154.0,431.5 Q1159.0,434.8 1163.8,438.5 L1173.7,446.1 Q1180.0,451.0 1186.2,456.0 L1191.8,460.5 Q1203.7,470.0 1208.4,484.4 L1225.4,536.7 Q1227.5,543.0 1226.0,549.5 L1226.0,549.5 Q1224.5,556.0 1219.3,560.2 L1134.6,629.9 Q1130.0,633.7 1125.9,638.1 L1124.8,639.3 Q1120.7,643.7 1115.0,645.4 L1098.5,650.4 Q1094.8,651.5 1090.9,651.8 L1090.9,651.8 Q1087.0,652.0 1083.1,651.7 L1015.3,646.6 Q1011.9,646.3 1009.0,644.6 L1008.6,644.5 Q1006.0,643.0 1003.5,641.4 L863.2,549.0 Q862.4,548.5 861.6,549.1 L823.2,579.9 Q818.5,583.7 813.1,586.2 L801.7,591.5 Q794.4,594.8 786.4,594.8 L769.0,594.8 Q763.0,594.8 758.4,598.7 L713.3,637.1 Q711.0,639.0 709.0,641.2 L708.3,641.9 Q705.6,644.8 708.6,647.4 L714.4,652.5 Q720.4,657.8 723.7,665.1 L726.1,670.5 Q729.0,677.0 727.5,684.0 L727.5,684.0 Q726.0,691.0 721.8,696.8 L704.7,720.5 Q700.0,727.0 693.9,732.2 L683.9,740.8 Q677.8,746.0 670.6,749.5 L666.2,751.5 Q659.0,755.0 651.0,755.0 L646.7,755.0 Q640.7,755.0 635.1,752.9 L629.8,751.0 Q626.0,749.6 622.7,747.4 L412.4,604.9 Q407.4,601.5 407.3,595.5 L407.1,584.0 Q407.0,581.0 407.5,578.0 L407.5,578.0 Q408.0,575.0 409.9,572.6 L425.6,552.2 Q428.0,549.0 430.5,545.9 L440.1,533.8 Q442.6,530.7 445.9,528.4 L482.1,502.5 Q487.0,499.0 493.0,498.6 L499.7,498.2 Q503.7,498.0 507.6,497.0 L510.1,496.3 Q513.0,495.5 515.5,493.8 L592.0,443.2 Q594.5,441.5 597.2,440.1 L697.3,389.2 Q700.0,387.8 702.6,386.4 L731.7,370.3 Q737.0,367.4 739.7,362.0 L739.9,361.7 Q742.6,356.3 747.5,352.8 L759.8,343.8 Q763.0,341.5 766.6,339.8 Z" fill="none" stroke="#00f400" stroke-width="45.8" stroke-linejoin="round"/>
<path d="M890.8,282.1 Q894.4,280.4 898.3,279.7 L901.8,279.0 Q909.3,277.6 916.7,279.4 L923.9,281.2 Q927.8,282.2 931.1,284.4 L1154.0,431.5 Q1159.0,434.8 1163.8,438.5 L1173.7,446.1 Q1180.0,451.0 1186.2,456.0 L1191.8,460.5 Q1203.7,470.0 1208.4,484.4 L1225.4,536.7 Q1227.5,543.0 1226.0,549.5 L1226.0,549.5 Q1224.5,556.0 1219.3,560.2 L1134.6,629.9 Q1130.0,633.7 1125.9,638.1 L1124.8,639.3 Q1120.7,643.7 1115.0,645.4 L1098.5,650.4 Q1094.8,651.5 1090.9,651.8 L1090.9,651.8 Q1087.0,652.0 1083.1,651.7 L1015.3,646.6 Q1011.9,646.3 1009.0,644.6 L1008.6,644.5 Q1006.0,643.0 1003.5,641.4 L863.2,549.0 Q862.4,548.5 861.6,549.1 L823.2,579.9 Q818.5,583.7 813.1,586.2 L801.7,591.5 Q794.4,594.8 786.4,594.8 L769.0,594.8 Q763.0,594.8 758.4,598.7 L713.3,637.1 Q711.0,639.0 709.0,641.2 L708.3,641.9 Q705.6,644.8 708.6,647.4 L714.4,652.5 Q720.4,657.8 723.7,665.1 L726.1,670.5 Q729.0,677.0 727.5,684.0 L727.5,684.0 Q726.0,691.0 721.8,696.8 L704.7,720.5 Q700.0,727.0 693.9,732.2 L683.9,740.8 Q677.8,746.0 670.6,749.5 L666.2,751.5 Q659.0,755.0 651.0,755.0 L646.7,755.0 Q640.7,755.0 635.1,752.9 L629.8,751.0 Q626.0,749.6 622.7,747.4 L412.4,604.9 Q407.4,601.5 407.3,595.5 L407.1,584.0 Q407.0,581.0 407.5,578.0 L407.5,578.0 Q408.0,575.0 409.9,572.6 L425.6,552.2 Q428.0,549.0 430.5,545.9 L440.1,533.8 Q442.6,530.7 445.9,528.4 L482.1,502.5 Q487.0,499.0 493.0,498.6 L499.7,498.2 Q503.7,498.0 507.6,497.0 L510.1,496.3 Q513.0,495.5 515.5,493.8 L592.0,443.2 Q594.5,441.5 597.2,440.1 L697.3,389.2 Q700.0,387.8 702.6,386.4 L731.7,370.3 Q737.0,367.4 739.7,362.0 L739.9,361.7 Q742.6,356.3 747.5,352.8 L759.8,343.8 Q763.0,341.5 766.6,339.8 Z" fill="none" stroke="#626262" stroke-width="43.8" stroke-linejoin="round"/>
<path d="M890.8,282.1 Q894.4,280.4 898.3,279.7 L901.8,279.0 Q909.3,277.6 916.7,279.4 L923.9,281.2 Q927.8,282.2 931.1,284.4 L1154.0,431.5 Q1159.0,434.8 1163.8,438.5 L1173.7,446.1 Q1180.0,451.0 1186.2,456.0 L1191.8,460.5 Q1203.7,470.0 1208.4,484.4 L1225.4,536.7 Q1227.5,543.0 1226.0,549.5 L1226.0,549.5 Q1224.5,556.0 1219.3,560.2 L1134.6,629.9 Q1130.0,633.7 1125.9,638.1 L1124.8,639.3 Q1120.7,643.7 1115.0,645.4 L1098.5,650.4 Q1094.8,651.5 1090.9,651.8 L1090.9,651.8 Q1087.0,652.0 1083.1,651.7 L1015.3,646.6 Q1011.9,646.3 1009.0,644.6 L1008.6,644.5 Q1006.0,643.0 1003.5,641.4 L863.2,549.0 Q862.4,548.5 861.6,549.1 L823.2,579.9 Q818.5,583.7 813.1,586.2 L801.7,591.5 Q794.4,594.8 786.4,594.8 L769.0,594.8 Q763.0,594.8 758.4,598.7 L713.3,637.1 Q711.0,639.0 709.0,641.2 L708.3,641.9 Q705.6,644.8 708.6,647.4 L714.4,652.5 Q720.4,657.8 723.7,665.1 L726.1,670.5 Q729.0,677.0 727.5,684.0 L727.5,684.0 Q726.0,691.0 721.8,696.8 L704.7,720.5 Q700.0,727.0 693.9,732.2 L683.9,740.8 Q677.8,746.0 670.6,749.5 L666.2,751.5 Q659.0,755.0 651.0,755.0 L646.7,755.0 Q640.7,755.0 635.1,752.9 L629.8,751.0 Q626.0,749.6 622.7,747.4 L412.4,604.9 Q407.4,601.5 407.3,595.5 L407.1,584.0 Q407.0,581.0 407.5,578.0 L407.5,578.0 Q408.0,575.0 409.9,572.6 L425.6,552.2 Q428.0,549.0 430.5,545.9 L440.1,533.8 Q442.6,530.7 445.9,528.4 L482.1,502.5 Q487.0,499.0 493.0,498.6 L499.7,498.2 Q503.7,498.0 507.6,497.0 L510.1,496.3 Q513.0,495.5 515.5,493.8 L592.0,443.2 Q594.5,441.5 597.2,440.1 L697.3,389.2 Q700.0,387.8 702.6,386.4 L731.7,370.3 Q737.0,367.4 739.7,362.0 L739.9,361.7 Q742.6,356.3 747.5,352.8 L759.8,343.8 Q763.0,341.5 766.6,339.8 Z" fill="none" stroke="#00f400" stroke-width="40.2" stroke-linejoin="round"/>
<path d="M890.8,282.1 Q894.4,280.4 898.3,279.7 L901.8,279.0 Q909.3,277.6 916.7,279.4 L923.9,281.2 Q927.8,282.2 931.1,284.4 L1154.0,431.5 Q1159.0,434.8 1163.8,438.5 L1173.7,446.1 Q1180.0,451.0 1186.2,456.0 L1191.8,460.5 Q1203.7,470.0 1208.4,484.4 L1225.4,536.7 Q1227.5,543.0 1226.0,549.5 L1226.0,549.5 Q1224.5,556.0 1219.3,560.2 L1134.6,629.9 Q1130.0,633.7 1125.9,638.1 L1124.8,639.3 Q1120.7,643.7 1115.0,645.4 L1098.5,650.4 Q1094.8,651.5 1090.9,651.8 L1090.9,651.8 Q1087.0,652.0 1083.1,651.7 L1015.3,646.6 Q1011.9,646.3 1009.0,644.6 L1008.6,644.5 Q1006.0,643.0 1003.5,641.4 L863.2,549.0 Q862.4,548.5 861.6,549.1 L823.2,579.9 Q818.5,583.7 813.1,586.2 L801.7,591.5 Q794.4,594.8 786.4,594.8 L769.0,594.8 Q763.0,594.8 758.4,598.7 L713.3,637.1 Q711.0,639.0 709.0,641.2 L708.3,641.9 Q705.6,644.8 708.6,647.4 L714.4,652.5 Q720.4,657.8 723.7,665.1 L726.1,670.5 Q729.0,677.0 727.5,684.0 L727.5,684.0 Q726.0,691.0 721.8,696.8 L704.7,720.5 Q700.0,727.0 693.9,732.2 L683.9,740.8 Q677.8,746.0 670.6,749.5 L666.2,751.5 Q659.0,755.0 651.0,755.0 L646.7,755.0 Q640.7,755.0 635.1,752.9 L629.8,751.0 Q626.0,749.6 622.7,747.4 L412.4,604.9 Q407.4,601.5 407.3,595.5 L407.1,584.0 Q407.0,581.0 407.5,578.0 L407.5,578.0 Q408.0,575.0 409.9,572.6 L425.6,552.2 Q428.0,549.0 430.5,545.9 L440.1,533.8 Q442.6,530.7 445.9,528.4 L482.1,502.5 Q487.0,499.0 493.0,498.6 L499.7,498.2 Q503.7,498.0 507.6,497.0 L510.1,496.3 Q513.0,495.5 515.5,493.8 L592.0,443.2 Q594.5,441.5 597.2,440.1 L697.3,389.2 Q700.0,387.8 702.6,386.4 L731.7,370.3 Q737.0,367.4 739.7,362.0 L739.9,361.7 Q742.6,356.3 747.5,352.8 L759.8,343.8 Q763.0,341.5 766.6,339.8 Z" fill="none" stroke="#666666" stroke-width="38.2" stroke-linejoin="round"/>
<path d="M890.8,282.1 Q894.4,280.4 898.3,279.7 L901.8,279.0 Q909.3,277.6 916.7,279.4 L923.9,281.2 Q927.8,282.2 931.1,284.4 L1154.0,431.5 Q1159.0,434.8 1163.8,438.5 L1173.7,446.1 Q1180.0,451.0 1186.2,456.0 L1191.8,460.5 Q1203.7,470.0 1208.4,484.4 L1225.4,536.7 Q1227.5,543.0 1226.0,549.5 L1226.0,549.5 Q1224.5,556.0 1219.3,560.2 L1134.6,629.9 Q1130.0,633.7 1125.9,638.1 L1124.8,639.3 Q1120.7,643.7 1115.0,645.4 L1098.5,650.4 Q1094.8,651.5 1090.9,651.8 L1090.9,651.8 Q1087.0,652.0 1083.1,651.7 L1015.3,646.6 Q1011.9,646.3 1009.0,644.6 L1008.6,644.5 Q1006.0,643.0 1003.5,641.4 L863.2,549.0 Q862.4,548.5 861.6,549.1 L823.2,579.9 Q818.5,583.7 813.1,586.2 L801.7,591.5 Q794.4,594.8 786.4,594.8 L769.0,594.8 Q763.0,594.8 758.4,598.7 L713.3,637.1 Q711.0,639.0 709.0,641.2 L708.3,641.9 Q705.6,644.8 708.6,647.4 L714.4,652.5 Q720.4,657.8 723.7,665.1 L726.1,670.5 Q729.0,677.0 727.5,684.0 L727.5,684.0 Q726.0,691.0 721.8,696.8 L704.7,720.5 Q700.0,727.0 693.9,732.2 L683.9,740.8 Q677.8,746.0 670.6,749.5 L666.2,751.5 Q659.0,755.0 651.0,755.0 L646.7,755.0 Q640.7,755.0 635.1,752.9 L629.8,751.0 Q626.0,749.6 622.7,747.4 L412.4,604.9 Q407.4,601.5 407.3,595.5 L407.1,584.0 Q407.0,581.0 407.5,578.0 L407.5,578.0 Q408.0,575.0 409.9,572.6 L425.6,552.2 Q428.0,549.0 430.5,545.9 L440.1,533.8 Q442.6,530.7 445.9,528.4 L482.1,502.5 Q487.0,499.0 493.0,498.6 L499.7,498.2 Q503.7,498.0 507.6,497.0 L510.1,496.3 Q513.0,495.5 515.5,493.8 L592.0,443.2 Q594.5,441.5 597.2,440.1 L697.3,389.2 Q700.0,387.8 702.6,386.4 L731.7,370.3 Q737.0,367.4 739.7,362.0 L739.9,361.7 Q742.6,356.3 747.5,352.8 L759.8,343.8 Q763.0,341.5 766.6,339.8 Z" fill="none" stroke="#00f400" stroke-width="34.6" stroke-linejoin="round"/>
<path d="M890.8,282.1 Q894.4,280.4 898.3,279.7 L901.8,279.0 Q909.3,277.6 916.7,279.4 L923.9,281.2 Q927.8,282.2 931.1,284.4 L1154.0,431.5 Q1159.0,434.8 1163.8,438.5 L1173.7,446.1 Q1180.0,451.0 1186.2,456.0 L1191.8,460.5 Q1203.7,470.0 1208.4,484.4 L1225.4,536.7 Q1227.5,543.0 1226.0,549.5 L1226.0,549.5 Q1224.5,556.0 1219.3,560.2 L1134.6,629.9 Q1130.0,633.7 1125.9,638.1 L1124.8,639.3 Q1120.7,643.7 1115.0,645.4 L1098.5,650.4 Q1094.8,651.5 1090.9,651.8 L1090.9,651.8 Q1087.0,652.0 1083.1,651.7 L1015.3,646.6 Q1011.9,646.3 1009.0,644.6 L1008.6,644.5 Q1006.0,643.0 1003.5,641.4 L863.2,549.0 Q862.4,548.5 861.6,549.1 L823.2,579.9 Q818.5,583.7 813.1,586.2 L801.7,591.5 Q794.4,594.8 786.4,594.8 L769.0,594.8 Q763.0,594.8 758.4,598.7 L713.3,637.1 Q711.0,639.0 709.0,641.2 L708.3,641.9 Q705.6,644.8 708.6,647.4 L714.4,652.5 Q720.4,657.8 723.7,665.1 L726.1,670.5 Q729.0,677.0 727.5,684.0 L727.5,684.0 Q726.0,691.0 721.8,696.8 L704.7,720.5 Q700.0,727.0 693.9,732.2 L683.9,740.8 Q677.8,746.0 670.6,749.5 L666.2,751.5 Q659.0,755.0 651.0,755.0 L646.7,755.0 Q640.7,755.0 635.1,752.9 L629.8,751.0 Q626.0,749.6 622.7,747.4 L412.4,604.9 Q407.4,601.5 407.3,595.5 L407.1,584.0 Q407.0,581.0 407.5,578.0 L407.5,578.0 Q408.0,575.0 409.9,572.6 L425.6,552.2 Q428.0,549.0 430.5,545.9 L440.1,533.8 Q442.6,530.7 445.9,528.4 L482.1,502.5 Q487.0,499.0 493.0,498.6 L499.7,498.2 Q503.7,498.0 507.6,497.0 L510.1,496.3 Q513.0,495.5 515.5,493.8 L592.0,443.2 Q594.5,441.5 597.2,440.1 L697.3,389.2 Q700.0,387.8 702.6,386.4 L731.7,370.3 Q737.0,367.4 739.7,362.0 L739.9,361.7 Q742.6,356.3 747.5,352.8 L759.8,343.8 Q763.0,341.5 766.6,339.8 Z" fill="none" stroke="#6a6a6a" stroke-width="32.6" stroke-linejoin="round"/>
<path d="M890.8,282.1 Q894.4,280.4 898.3,279.7 L901.8,279.0 Q909.3,277.6 916.7,279.4 L923.9,281.2 Q927.8,282.2 931.1,284.4 L1154.0,431.5 Q1159.0,434.8 1163.8,438.5 L1173.7,446.1 Q1180.0,451.0 1186.2,456.0 L1191.8,460.5 Q1203.7,470.0 1208.4,484.4 L1225.4,536.7 Q1227.5,543.0 1226.0,549.5 L1226.0,549.5 Q1224.5,556.0 1219.3,560.2 L1134.6,629.9 Q1130.0,633.7 1125.9,638.1 L1124.8,639.3 Q1120.7,643.7 1115.0,645.4 L1098.5,650.4 Q1094.8,651.5 1090.9,651.8 L1090.9,651.8 Q1087.0,652.0 1083.1,651.7 L1015.3,646.6 Q1011.9,646.3 1009.0,644.6 L1008.6,644.5 Q1006.0,643.0 1003.5,641.4 L863.2,549.0 Q862.4,548.5 861.6,549.1 L823.2,579.9 Q818.5,583.7 813.1,586.2 L801.7,591.5 Q794.4,594.8 786.4,594.8 L769.0,594.8 Q763.0,594.8 758.4,598.7 L713.3,637.1 Q711.0,639.0 709.0,641.2 L708.3,641.9 Q705.6,644.8 708.6,647.4 L714.4,652.5 Q720.4,657.8 723.7,665.1 L726.1,670.5 Q729.0,677.0 727.5,684.0 L727.5,684.0 Q726.0,691.0 721.8,696.8 L704.7,720.5 Q700.0,727.0 693.9,732.2 L683.9,740.8 Q677.8,746.0 670.6,749.5 L666.2,751.5 Q659.0,755.0 651.0,755.0 L646.7,755.0 Q640.7,755.0 635.1,752.9 L629.8,751.0 Q626.0,749.6 622.7,747.4 L412.4,604.9 Q407.4,601.5 407.3,595.5 L407.1,584.0 Q407.0,581.0 407.5,578.0 L407.5,578.0 Q408.0,575.0 409.9,572.6 L425.6,552.2 Q428.0,549.0 430.5,545.9 L440.1,533.8 Q442.6,530.7 445.9,528.4 L482.1,502.5 Q487.0,499.0 493.0,498.6 L499.7,498.2 Q503.7,498.0 507.6,497.0 L510.1,496.3 Q513.0,495.5 515.5,493.8 L592.0,443.2 Q594.5,441.5 597.2,440.1 L697.3,389.2 Q700.0,387.8 702.6,386.4 L731.7,370.3 Q737.0,367.4 739.7,362.0 L739.9,361.7 Q742.6,356.3 747.5,352.8 L759.8,343.8 Q763.0,341.5 766.6,339.8 Z" fill="none" stroke="#00f400" stroke-width="29.0" stroke-linejoin="round"/>
<path d="M890.8,282.1 Q894.4,280.4 898.3,279.7 L901.8,279.0 Q909.3,277.6 916.7,279.4 L923.9,281.2 Q927.8,282.2 931.1,284.4 L1154.0,431.5 Q1159.0,434.8 1163.8,438.5 L1173.7,446.1 Q1180.0,451.0 1186.2,456.0 L1191.8,460.5 Q1203.7,470.0 1208.4,484.4 L1225.4,536.7 Q1227.5,543.0 1226.0,549.5 L1226.0,549.5 Q1224.5,556.0 1219.3,560.2 L1134.6,629.9 Q1130.0,633.7 1125.9,638.1 L1124.8,639.3 Q1120.7,643.7 1115.0,645.4 L1098.5,650.4 Q1094.8,651.5 1090.9,651.8 L1090.9,651.8 Q1087.0,652.0 1083.1,651.7 L1015.3,646.6 Q1011.9,646.3 1009.0,644.6 L1008.6,644.5 Q1006.0,643.0 1003.5,641.4 L863.2,549.0 Q862.4,548.5 861.6,549.1 L823.2,579.9 Q818.5,583.7 813.1,586.2 L801.7,591.5 Q794.4,594.8 786.4,594.8 L769.0,594.8 Q763.0,594.8 758.4,598.7 L713.3,637.1 Q711.0,639.0 709.0,641.2 L708.3,641.9 Q705.6,644.8 708.6,647.4 L714.4,652.5 Q720.4,657.8 723.7,665.1 L726.1,670.5 Q729.0,677.0 727.5,684.0 L727.5,684.0 Q726.0,691.0 721.8,696.8 L704.7,720.5 Q700.0,727.0 693.9,732.2 L683.9,740.8 Q677.8,746.0 670.6,749.5 L666.2,751.5 Q659.0,755.0 651.0,755.0 L646.7,755.0 Q640.7,755.0 635.1,752.9 L629.8,751.0 Q626.0,749.6 622.7,747.4 L412.4,604.9 Q407.4,601.5 407.3,595.5 L407.1,584.0 Q407.0,581.0 407.5,578.0 L407.5,578.0 Q408.0,575.0 409.9,572.6 L425.6,552.2 Q428.0,549.0 430.5,545.9 L440.1,533.8 Q442.6,530.7 445.9,528.4 L482.1,502.5 Q487.0,499.0 493.0,498.6 L499.7,498.2 Q503.7,498.0 507.6,497.0 L510.1,496.3 Q513.0,495.5 515.5,493.8 L592.0,443.2 Q594.5,441.5 597.2,440.1 L697.3,389.2 Q700.0,387.8 702.6,386.4 L731.7,370.3 Q737.0,367.4 739.7,362.0 L739.9,361.7 Q742.6,356.3 747.5,352.8 L759.8,343.8 Q763.0,341.5 766.6,339.8 Z" fill="none" stroke="#6e6e6e" stroke-width="27.0" stroke-linejoin="round"/>
<path d="M890.8,282.1 Q894.4,280.4 898.3,279.7 L901.8,279.0 Q909.3,277.6 916.7,279.4 L923.9,281.2 Q927.8,282.2 931.1,284.4 L1154.0,431.5 Q1159.0,434.8 1163.8,438.5 L1173.7,446.1 Q1180.0,451.0 1186.2,456.0 L1191.8,460.5 Q1203.7,470.0 1208.4,484.4 L1225.4,536.7 Q1227.5,543.0 1226.0,549.5 L1226.0,549.5 Q1224.5,556.0 1219.3,560.2 L1134.6,629.9 Q1130.0,633.7 1125.9,638.1 L1124.8,639.3 Q1120.7,643.7 1115.0,645.4 L1098.5,650.4 Q1094.8,651.5 1090.9,651.8 L1090.9,651.8 Q1087.0,652.0 1083.1,651.7 L1015.3,646.6 Q1011.9,646.3 1009.0,644.6 L1008.6,644.5 Q1006.0,643.0 1003.5,641.4 L863.2,549.0 Q862.4,548.5 861.6,549.1 L823.2,579.9 Q818.5,583.7 813.1,586.2 L801.7,591.5 Q794.4,594.8 786.4,594.8 L769.0,594.8 Q763.0,594.8 758.4,598.7 L713.3,637.1 Q711.0,639.0 709.0,641.2 L708.3,641.9 Q705.6,644.8 708.6,647.4 L714.4,652.5 Q720.4,657.8 723.7,665.1 L726.1,670.5 Q729.0,677.0 727.5,684.0 L727.5,684.0 Q726.0,691.0 721.8,696.8 L704.7,720.5 Q700.0,727.0 693.9,732.2 L683.9,740.8 Q677.8,746.0 670.6,749.5 L666.2,751.5 Q659.0,755.0 651.0,755.0 L646.7,755.0 Q640.7,755.0 635.1,752.9 L629.8,751.0 Q626.0,749.6 622.7,747.4 L412.4,604.9 Q407.4,601.5 407.3,595.5 L407.1,584.0 Q407.0,581.0 407.5,578.0 L407.5,578.0 Q408.0,575.0 409.9,572.6 L425.6,552.2 Q428.0,549.0 430.5,545.9 L440.1,533.8 Q442.6,530.7 445.9,528.4 L482.1,502.5 Q487.0,499.0 493.0,498.6 L499.7,498.2 Q503.7,498.0 507.6,497.0 L510.1,496.3 Q513.0,495.5 515.5,493.8 L592.0,443.2 Q594.5,441.5 597.2,440.1 L697.3,389.2 Q700.0,387.8 702.6,386.4 L731.7,370.3 Q737.0,367.4 739.7,362.0 L739.9,361.7 Q742.6,356.3 747.5,352.8 L759.8,343.8 Q763.0,341.5 766.6,339.8 Z" fill="none" stroke="#00f400" stroke-width="23.4" stroke-linejoin="round"/>
<path d="M890.8,282.1 Q894.4,280.4 898.3,279.7 L901.8,279.0 Q909.3,277.6 916.7,279.4 L923.9,281.2 Q927.8,282.2 931.1,284.4 L1154.0,431.5 Q1159.0,434.8 1163.8,438.5 L1173.7,446.1 Q1180.0,451.0 1186.2,456.0 L1191.8,460.5 Q1203.7,470.0 1208.4,484.4 L1225.4,536.7 Q1227.5,543.0 1226.0,549.5 L1226.0,549.5 Q1224.5,556.0 1219.3,560.2 L1134.6,629.9 Q1130.0,633.7 1125.9,638.1 L1124.8,639.3 Q1120.7,643.7 1115.0,645.4 L1098.5,650.4 Q1094.8,651.5 1090.9,651.8 L1090.9,651.8 Q1087.0,652.0 1083.1,651.7 L1015.3,646.6 Q1011.9,646.3 1009.0,644.6 L1008.6,644.5 Q1006.0,643.0 1003.5,641.4 L863.2,549.0 Q862.4,548.5 861.6,549.1 L823.2,579.9 Q818.5,583.7 813.1,586.2 L801.7,591.5 Q794.4,594.8 786.4,594.8 L769.0,594.8 Q763.0,594.8 758.4,598.7 L713.3,637.1 Q711.0,639.0 709.0,641.2 L708.3,641.9 Q705.6,644.8 708.6,647.4 L714.4,652.5 Q720.4,657.8 723.7,665.1 L726.1,670.5 Q729.0,677.0 727.5,684.0 L727.5,684.0 Q726.0,691.0 721.8,696.8 L704.7,720.5 Q700.0,727.0 693.9,732.2 L683.9,740.8 Q677.8,746.0 670.6,749.5 L666.2,751.5 Q659.0,755.0 651.0,755.0 L646.7,755.0 Q640.7,755.0 635.1,752.9 L629.8,751.0 Q626.0,749.6 622.7,747.4 L412.4,604.9 Q407.4,601.5 407.3,595.5 L407.1,584.0 Q407.0,581.0 407.5,578.0 L407.5,578.0 Q408.0,575.0 409.9,572.6 L425.6,552.2 Q428.0,549.0 430.5,545.9 L440.1,533.8 Q442.6,530.7 445.9,528.4 L482.1,502.5 Q487.0,499.0 493.0,498.6 L499.7,498.2 Q503.7,498.0 507.6,497.0 L510.1,496.3 Q513.0,495.5 515.5,493.8 L592.0,443.2 Q594.5,441.5 597.2,440.1 L697.3,389.2 Q700.0,387.8 702.6,386.4 L731.7,370.3 Q737.0,367.4 739.7,362.0 L739.9,361.7 Q742.6,356.3 747.5,352.8 L759.8,343.8 Q763.0,341.5 766.6,339.8 Z" fill="none" stroke="#727272" stroke-width="21.4" stroke-linejoin="round"/>
<path d="M890.8,282.1 Q894.4,280.4 898.3,279.7 L901.8,279.0 Q909.3,277.6 916.7,279.4 L923.9,281.2 Q927.8,282.2 931.1,284.4 L1154.0,431.5 Q1159.0,434.8 1163.8,438.5 L1173.7,446.1 Q1180.0,451.0 1186.2,456.0 L1191.8,460.5 Q1203.7,470.0 1208.4,484.4 L1225.4,536.7 Q1227.5,543.0 1226.0,549.5 L1226.0,549.5 Q1224.5,556.0 1219.3,560.2 L1134.6,629.9 Q1130.0,633.7 1125.9,638.1 L1124.8,639.3 Q1120.7,643.7 1115.0,645.4 L1098.5,650.4 Q1094.8,651.5 1090.9,651.8 L1090.9,651.8 Q1087.0,652.0 1083.1,651.7 L1015.3,646.6 Q1011.9,646.3 1009.0,644.6 L1008.6,644.5 Q1006.0,643.0 1003.5,641.4 L863.2,549.0 Q862.4,548.5 861.6,549.1 L823.2,579.9 Q818.5,583.7 813.1,586.2 L801.7,591.5 Q794.4,594.8 786.4,594.8 L769.0,594.8 Q763.0,594.8 758.4,598.7 L713.3,637.1 Q711.0,639.0 709.0,641.2 L708.3,641.9 Q705.6,644.8 708.6,647.4 L714.4,652.5 Q720.4,657.8 723.7,665.1 L726.1,670.5 Q729.0,677.0 727.5,684.0 L727.5,684.0 Q726.0,691.0 721.8,696.8 L704.7,720.5 Q700.0,727.0 693.9,732.2 L683.9,740.8 Q677.8,746.0 670.6,749.5 L666.2,751.5 Q659.0,755.0 651.0,755.0 L646.7,755.0 Q640.7,755.0 635.1,752.9 L629.8,751.0 Q626.0,749.6 622.7,747.4 L412.4,604.9 Q407.4,601.5 407.3,595.5 L407.1,584.0 Q407.0,581.0 407.5,578.0 L407.5,578.0 Q408.0,575.0 409.9,572.6 L425.6,552.2 Q428.0,549.0 430.5,545.9 L440.1,533.8 Q442.6,530.7 445.9,528.4 L482.1,502.5 Q487.0,499.0 493.0,498.6 L499.7,498.2 Q503.7,498.0 507.6,497.0 L510.1,496.3 Q513.0,495.5 515.5,493.8 L592.0,443.2 Q594.5,441.5 597.2,440.1 L697.3,389.2 Q700.0,387.8 702.6,386.4 L731.7,370.3 Q737.0,367.4 739.7,362.0 L739.9,361.7 Q742.6,356.3 747.5,352.8 L759.8,343.8 Q763.0,341.5 766.6,339.8 Z" fill="none" stroke="#00f400" stroke-width="17.8" stroke-linejoin="round"/>
<path d="M890.8,282.1 Q894.4,280.4 898.3,279.7 L901.8,279.0 Q909.3,277.6 916.7,279.4 L923.9,281.2 Q927.8,282.2 931.1,284.4 L1154.0,431.5 Q1159.0,434.8 1163.8,438.5 L1173.7,446.1 Q1180.0,451.0 1186.2,456.0 L1191.8,460.5 Q1203.7,470.0 1208.4,484.4 L1225.4,536.7 Q1227.5,543.0 1226.0,549.5 L1226.0,549.5 Q1224.5,556.0 1219.3,560.2 L1134.6,629.9 Q1130.0,633.7 1125.9,638.1 L1124.8,639.3 Q1120.7,643.7 1115.0,645.4 L1098.5,650.4 Q1094.8,651.5 1090.9,651.8 L1090.9,651.8 Q1087.0,652.0 1083.1,651.7 L1015.3,646.6 Q1011.9,646.3 1009.0,644.6 L1008.6,644.5 Q1006.0,643.0 1003.5,641.4 L863.2,549.0 Q862.4,548.5 861.6,549.1 L823.2,579.9 Q818.5,583.7 813.1,586.2 L801.7,591.5 Q794.4,594.8 786.4,594.8 L769.0,594.8 Q763.0,594.8 758.4,598.7 L713.3,637.1 Q711.0,639.0 709.0,641.2 L708.3,641.9 Q705.6,644.8 708.6,647.4 L714.4,652.5 Q720.4,657.8 723.7,665.1 L726.1,670.5 Q729.0,677.0 727.5,684.0 L727.5,684.0 Q726.0,691.0 721.8,696.8 L704.7,720.5 Q700.0,727.0 693.9,732.2 L683.9,740.8 Q677.8,746.0 670.6,749.5 L666.2,751.5 Q659.0,755.0 651.0,755.0 L646.7,755.0 Q640.7,755.0 635.1,752.9 L629.8,751.0 Q626.0,749.6 622.7,747.4 L412.4,604.9 Q407.4,601.5 407.3,595.5 L407.1,584.0 Q407.0,581.0 407.5,578.0 L407.5,578.0 Q408.0,575.0 409.9,572.6 L425.6,552.2 Q428.0,549.0 430.5,545.9 L440.1,533.8 Q442.6,530.7 445.9,528.4 L482.1,502.5 Q487.0,499.0 493.0,498.6 L499.7,498.2 Q503.7,498.0 507.6,497.0 L510.1,496.3 Q513.0,495.5 515.5,493.8 L592.0,443.2 Q594.5,441.5 597.2,440.1 L697.3,389.2 Q700.0,387.8 702.6,386.4 L731.7,370.3 Q737.0,367.4 739.7,362.0 L739.9,361.7 Q742.6,356.3 747.5,352.8 L759.8,343.8 Q763.0,341.5 766.6,339.8 Z" fill="none" stroke="#767676" stroke-width="15.8" stroke-linejoin="round"/>
<path d="M890.8,282.1 Q894.4,280.4 898.3,279.7 L901.8,279.0 Q909.3,277.6 916.7,279.4 L923.9,281.2 Q927.8,282.2 931.1,284.4 L1154.0,431.5 Q1159.0,434.8 1163.8,438.5 L1173.7,446.1 Q1180.0,451.0 1186.2,456.0 L1191.8,460.5 Q1203.7,470.0 1208.4,484.4 L1225.4,536.7 Q1227.5,543.0 1226.0,549.5 L1226.0,549.5 Q1224.5,556.0 1219.3,560.2 L1134.6,629.9 Q1130.0,633.7 1125.9,638.1 L1124.8,639.3 Q1120.7,643.7 1115.0,645.4 L1098.5,650.4 Q1094.8,651.5 1090.9,651.8 L1090.9,651.8 Q1087.0,652.0 1083.1,651.7 L1015.3,646.6 Q1011.9,646.3 1009.0,644.6 L1008.6,644.5 Q1006.0,643.0 1003.5,641.4 L863.2,549.0 Q862.4,548.5 861.6,549.1 L823.2,579.9 Q818.5,583.7 813.1,586.2 L801.7,591.5 Q794.4,594.8 786.4,594.8 L769.0,594.8 Q763.0,594.8 758.4,598.7 L713.3,637.1 Q711.0,639.0 709.0,641.2 L708.3,641.9 Q705.6,644.8 708.6,647.4 L714.4,652.5 Q720.4,657.8 723.7,665.1 L726.1,670.5 Q729.0,677.0 727.5,684.0 L727.5,684.0 Q726.0,691.0 721.8,696.8 L704.7,720.5 Q700.0,727.0 693.9,732.2 L683.9,740.8 Q677.8,746.0 670.6,749.5 L666.2,751.5 Q659.0,755.0 651.0,755.0 L646.7,755.0 Q640.7,755.0 635.1,752.9 L629.8,751.0 Q626.0,749.6 622.7,747.4 L412.4,604.9 Q407.4,601.5 407.3,595.5 L407.1,584.0 Q407.0,581.0 407.5,578.0 L407.5,578.0 Q408.0,575.0 409.9,572.6 L425.6,552.2 Q428.0,549.0 430.5,545.9 L440.1,533.8 Q442.6,530.7 445.9,528.4 L482.1,502.5 Q487.0,499.0 493.0,498.6 L499.7,498.2 Q503.7,498.0 507.6,497.0 L510.1,496.3 Q513.0,495.5 515.5,493.8 L592.0,443.2 Q594.5,441.5 597.2,440.1 L697.3,389.2 Q700.0,387.8 702.6,386.4 L731.7,370.3 Q737.0,367.4 739.7,362.0 L739.9,361.7 Q742.6,356.3 747.5,352.8 L759.8,343.8 Q763.0,341.5 766.6,339.8 Z" fill="none" stroke="#00f400" stroke-width="12.2" stroke-linejoin="round"/>
<path d="M890.8,282.1 Q894.4,280.4 898.3,279.7 L901.8,279.0 Q909.3,277.6 916.7,279.4 L923.9,281.2 Q927.8,282.2 931.1,284.4 L1154.0,431.5 Q1159.0,434.8 1163.8,438.5 L1173.7,446.1 Q1180.0,451.0 1186.2,456.0 L1191.8,460.5 Q1203.7,470.0 1208.4,484.4 L1225.4,536.7 Q1227.5,543.0 1226.0,549.5 L1226.0,549.5 Q1224.5,556.0 1219.3,560.2 L1134.6,629.9 Q1130.0,633.7 1125.9,638.1 L1124.8,639.3 Q1120.7,643.7 1115.0,645.4 L1098.5,650.4 Q1094.8,651.5 1090.9,651.8 L1090.9,651.8 Q1087.0,652.0 1083.1,651.7 L1015.3,646.6 Q1011.9,646.3 1009.0,644.6 L1008.6,644.5 Q1006.0,643.0 1003.5,641.4 L863.2,549.0 Q862.4,548.5 861.6,549.1 L823.2,579.9 Q818.5,583.7 813.1,586.2 L801.7,591.5 Q794.4,594.8 786.4,594.8 L769.0,594.8 Q763.0,594.8 758.4,598.7 L713.3,637.1 Q711.0,639.0 709.0,641.2 L708.3,641.9 Q705.6,644.8 708.6,647.4 L714.4,652.5 Q720.4,657.8 723.7,665.1 L726.1,670.5 Q729.0,677.0 727.5,684.0 L727.5,684.0 Q726.0,691.0 721.8,696.8 L704.7,720.5 Q700.0,727.0 693.9,732.2 L683.9,740.8 Q677.8,746.0 670.6,749.5 L666.2,751.5 Q659.0,755.0 651.0,755.0 L646.7,755.0 Q640.7,755.0 635.1,752.9 L629.8,751.0 Q626.0,749.6 622.7,747.4 L412.4,604.9 Q407.4,601.5 407.3,595.5 L407.1,584.0 Q407.0,581.0 407.5,578.0 L407.5,578.0 Q408.0,575.0 409.9,572.6 L425.6,552.2 Q428.0,549.0 430.5,545.9 L440.1,533.8 Q442.6,530.7 445.9,528.4 L482.1,502.5 Q487.0,499.0 493.0,498.6 L499.7,498.2 Q503.7,498.0 507.6,497.0 L510.1,496.3 Q513.0,495.5 515.5,493.8 L592.0,443.2 Q594.5,441.5 597.2,440.1 L697.3,389.2 Q700.0,387.8 702.6,386.4 L731.7,370.3 Q737.0,367.4 739.7,362.0 L739.9,361.7 Q742.6,356.3 747.5,352.8 L759.8,343.8 Q763.0,341.5 766.6,339.8 Z" fill="none" stroke="#7a7a7a" stroke-width="10.2" stroke-linejoin="round"/>
<path d="M890.8,282.1 Q894.4,280.4 898.3,279.7 L901.8,279.0 Q909.3,277.6 916.7,279.4 L923.9,281.2 Q927.8,282.2 931.1,284.4 L1154.0,431.5 Q1159.0,434.8 1163.8,438.5 L1173.7,446.1 Q1180.0,451.0 1186.2,456.0 L1191.8,460.5 Q1203.7,470.0 1208.4,484.4 L1225.4,536.7 Q1227.5,543.0 1226.0,549.5 L1226.0,549.5 Q1224.5,556.0 1219.3,560.2 L1134.6,629.9 Q1130.0,633.7 1125.9,638.1 L1124.8,639.3 Q1120.7,643.7 1115.0,645.4 L1098.5,650.4 Q1094.8,651.5 1090.9,651.8 L1090.9,651.8 Q1087.0,652.0 1083.1,651.7 L1015.3,646.6 Q1011.9,646.3 1009.0,644.6 L1008.6,644.5 Q1006.0,643.0 1003.5,641.4 L863.2,549.0 Q862.4,548.5 861.6,549.1 L823.2,579.9 Q818.5,583.7 813.1,586.2 L801.7,591.5 Q794.4,594.8 786.4,594.8 L769.0,594.8 Q763.0,594.8 758.4,598.7 L713.3,637.1 Q711.0,639.0 709.0,641.2 L708.3,641.9 Q705.6,644.8 708.6,647.4 L714.4,652.5 Q720.4,657.8 723.7,665.1 L726.1,670.5 Q729.0,677.0 727.5,684.0 L727.5,684.0 Q726.0,691.0 721.8,696.8 L704.7,720.5 Q700.0,727.0 693.9,732.2 L683.9,740.8 Q677.8,746.0 670.6,749.5 L666.2,751.5 Q659.0,755.0 651.0,755.0 L646.7,755.0 Q640.7,755.0 635.1,752.9 L629.8,751.0 Q626.0,749.6 622.7,747.4 L412.4,604.9 Q407.4,601.5 407.3,595.5 L407.1,584.0 Q407.0,581.0 407.5,578.0 L407.5,578.0 Q408.0,575.0 409.9,572.6 L425.6,552.2 Q428.0,549.0 430.5,545.9 L440.1,533.8 Q442.6,530.7 445.9,528.4 L482.1,502.5 Q487.0,499.0 493.0,498.6 L499.7,498.2 Q503.7,498.0 507.6,497.0 L510.1,496.3 Q513.0,495.5 515.5,493.8 L592.0,443.2 Q594.5,441.5 597.2,440.1 L697.3,389.2 Q700.0,387.8 702.6,386.4 L731.7,370.3 Q737.0,367.4 739.7,362.0 L739.9,361.7 Q742.6,356.3 747.5,352.8 L759.8,343.8 Q763.0,341.5 766.6,339.8 Z" fill="none" stroke="#00f400" stroke-width="6.6" stroke-linejoin="round"/>
<path d="M890.8,282.1 Q894.4,280.4 898.3,279.7 L901.8,279.0 Q909.3,277.6 916.7,279.4 L923.9,281.2 Q927.8,282.2 931.1,284.4 L1154.0,431.5 Q1159.0,434.8 1163.8,438.5 L1173.7,446.1 Q1180.0,451.0 1186.2,456.0 L1191.8,460.5 Q1203.7,470.0 1208.4,484.4 L1225.4,536.7 Q1227.5,543.0 1226.0,549.5 L1226.0,549.5 Q1224.5,556.0 1219.3,560.2 L1134.6,629.9 Q1130.0,633.7 1125.9,638.1 L1124.8,639.3 Q1120.7,643.7 1115.0,645.4 L1098.5,650.4 Q1094.8,651.5 1090.9,651.8 L1090.9,651.8 Q1087.0,652.0 1083.1,651.7 L1015.3,646.6 Q1011.9,646.3 1009.0,644.6 L1008.6,644.5 Q1006.0,643.0 1003.5,641.4 L863.2,549.0 Q862.4,548.5 861.6,549.1 L823.2,579.9 Q818.5,583.7 813.1,586.2 L801.7,591.5 Q794.4,594.8 786.4,594.8 L769.0,594.8 Q763.0,594.8 758.4,598.7 L713.3,637.1 Q711.0,639.0 709.0,641.2 L708.3,641.9 Q705.6,644.8 708.6,647.4 L714.4,652.5 Q720.4,657.8 723.7,665.1 L726.1,670.5 Q729.0,677.0 727.5,684.0 L727.5,684.0 Q726.0,691.0 721.8,696.8 L704.7,720.5 Q700.0,727.0 693.9,732.2 L683.9,740.8 Q677.8,746.0 670.6,749.5 L666.2,751.5 Q659.0,755.0 651.0,755.0 L646.7,755.0 Q640.7,755.0 635.1,752.9 L629.8,751.0 Q626.0,749.6 622.7,747.4 L412.4,604.9 Q407.4,601.5 407.3,595.5 L407.1,584.0 Q407.0,581.0 407.5,578.0 L407.5,578.0 Q408.0,575.0 409.9,572.6 L425.6,552.2 Q428.0,549.0 430.5,545.9 L440.1,533.8 Q442.6,530.7 445.9,528.4 L482.1,502.5 Q487.0,499.0 493.0,498.6 L499.7,498.2 Q503.7,498.0 507.6,497.0 L510.1,496.3 Q513.0,495.5 515.5,493.8 L592.0,443.2 Q594.5,441.5 597.2,440.1 L697.3,389.2 Q700.0,387.8 702.6,386.4 L731.7,370.3 Q737.0,367.4 739.7,362.0 L739.9,361.7 Q742.6,356.3 747.5,352.8 L759.8,343.8 Q763.0,341.5 766.6,339.8 Z" fill="none" stroke="#7e7e7e" stroke-width="4.6" stroke-linejoin="round"/>
<path d="M859.6,498.5 L872.6,500.4 L1015.0,598.5 L1089.0,602.0 L1107.8,594.8 L1120.7,602.0 L1115.0,609.6 L1098.5,619.0 L1061.5,619.0 L1007.8,611.5 L861.5,515.0 Z" fill="#fb9226"/>
<path d="M794.4,522.6 L831.5,491.0 L842.6,498.5 L801.9,530.0 Z" fill="#fb9226"/>
<path d="M671.0,602.0 L751.0,558.0 L770.0,553.0 L800.0,552.5 L806.0,560.0 L797.0,565.0 L757.0,571.0 L690.0,614.0 Z" fill="#fb9226"/>
<path d="M632.5,716.0 L697.0,657.0 L707.0,655.0 L715.0,666.0 L717.0,680.0 L712.0,692.0 L655.0,727.0 L640.0,727.0 Z" fill="#fb9226"/>
<path d="M646,722 L704,674 L708,664 M651,725 L708,679 L712,668 M657,727 L712,684 L716,674" fill="none" stroke="#2fe02f" stroke-width="0.8"/>
<path d="M1180.0,462.8 Q1181.0,460.0 1183.6,461.6 L1191.4,466.4 Q1194.0,468.0 1195.0,470.8 L1210.0,515.2 Q1211.0,518.0 1211.0,521.0 L1211.0,527.0 Q1211.0,530.0 1209.3,532.5 L1206.7,536.5 Q1205.0,539.0 1202.0,539.5 L1197.0,540.5 Q1194.0,541.0 1192.6,538.4 L1189.4,532.6 Q1188.0,530.0 1187.4,527.1 L1176.6,476.9 Q1176.0,474.0 1177.0,471.2 Z" fill="#fb9226"/>
<path d="M1179,466 L1190,528 M1182,464 L1193,530" stroke="#35e035" stroke-width="0.8" fill="none"/>
<path d="M862,505 L874,507 L1013,604 L1090,608 L1110,600 M862,510 L872,511 L1010,608 L1092,613 L1113,604" fill="none" stroke="#35e035" stroke-width="0.7"/>
<path d="M676,606 L752,563 L772,558 L800,557 M682,610 L755,567 L775,562 L800,561" fill="none" stroke="#35e035" stroke-width="0.7"/>
<path d="M890.8,282.1 Q894.4,280.4 898.3,279.7 L901.8,279.0 Q909.3,277.6 916.7,279.4 L923.9,281.2 Q927.8,282.2 931.1,284.4 L1154.0,431.5 Q1159.0,434.8 1163.8,438.5 L1173.7,446.1 Q1180.0,451.0 1186.2,456.0 L1191.8,460.5 Q1203.7,470.0 1208.4,484.4 L1225.4,536.7 Q1227.5,543.0 1226.0,549.5 L1226.0,549.5 Q1224.5,556.0 1219.3,560.2 L1134.6,629.9 Q1130.0,633.7 1125.9,638.1 L1124.8,639.3 Q1120.7,643.7 1115.0,645.4 L1098.5,650.4 Q1094.8,651.5 1090.9,651.8 L1090.9,651.8 Q1087.0,652.0 1083.1,651.7 L1015.3,646.6 Q1011.9,646.3 1009.0,644.6 L1008.6,644.5 Q1006.0,643.0 1003.5,641.4 L863.2,549.0 Q862.4,548.5 861.6,549.1 L823.2,579.9 Q818.5,583.7 813.1,586.2 L801.7,591.5 Q794.4,594.8 786.4,594.8 L769.0,594.8 Q763.0,594.8 758.4,598.7 L713.3,637.1 Q711.0,639.0 709.0,641.2 L708.3,641.9 Q705.6,644.8 708.6,647.4 L714.4,652.5 Q720.4,657.8 723.7,665.1 L726.1,670.5 Q729.0,677.0 727.5,684.0 L727.5,684.0 Q726.0,691.0 721.8,696.8 L704.7,720.5 Q700.0,727.0 693.9,732.2 L683.9,740.8 Q677.8,746.0 670.6,749.5 L666.2,751.5 Q659.0,755.0 651.0,755.0 L646.7,755.0 Q640.7,755.0 635.1,752.9 L629.8,751.0 Q626.0,749.6 622.7,747.4 L412.4,604.9 Q407.4,601.5 407.3,595.5 L407.1,584.0 Q407.0,581.0 407.5,578.0 L407.5,578.0 Q408.0,575.0 409.9,572.6 L425.6,552.2 Q428.0,549.0 430.5,545.9 L440.1,533.8 Q442.6,530.7 445.9,528.4 L482.1,502.5 Q487.0,499.0 493.0,498.6 L499.7,498.2 Q503.7,498.0 507.6,497.0 L510.1,496.3 Q513.0,495.5 515.5,493.8 L592.0,443.2 Q594.5,441.5 597.2,440.1 L697.3,389.2 Q700.0,387.8 702.6,386.4 L731.7,370.3 Q737.0,367.4 739.7,362.0 L739.9,361.7 Q742.6,356.3 747.5,352.8 L759.8,343.8 Q763.0,341.5 766.6,339.8 Z" fill="none" stroke="#00f400" stroke-width="17.8" stroke-linejoin="round"/>
<path d="M890.8,282.1 Q894.4,280.4 898.3,279.7 L901.8,279.0 Q909.3,277.6 916.7,279.4 L923.9,281.2 Q927.8,282.2 931.1,284.4 L1154.0,431.5 Q1159.0,434.8 1163.8,438.5 L1173.7,446.1 Q1180.0,451.0 1186.2,456.0 L1191.8,460.5 Q1203.7,470.0 1208.4,484.4 L1225.4,536.7 Q1227.5,543.0 1226.0,549.5 L1226.0,549.5 Q1224.5,556.0 1219.3,560.2 L1134.6,629.9 Q1130.0,633.7 1125.9,638.1 L1124.8,639.3 Q1120.7,643.7 1115.0,645.4 L1098.5,650.4 Q1094.8,651.5 1090.9,651.8 L1090.9,651.8 Q1087.0,652.0 1083.1,651.7 L1015.3,646.6 Q1011.9,646.3 1009.0,644.6 L1008.6,644.5 Q1006.0,643.0 1003.5,641.4 L863.2,549.0 Q862.4,548.5 861.6,549.1 L823.2,579.9 Q818.5,583.7 813.1,586.2 L801.7,591.5 Q794.4,594.8 786.4,594.8 L769.0,594.8 Q763.0,594.8 758.4,598.7 L713.3,637.1 Q711.0,639.0 709.0,641.2 L708.3,641.9 Q705.6,644.8 708.6,647.4 L714.4,652.5 Q720.4,657.8 723.7,665.1 L726.1,670.5 Q729.0,677.0 727.5,684.0 L727.5,684.0 Q726.0,691.0 721.8,696.8 L704.7,720.5 Q700.0,727.0 693.9,732.2 L683.9,740.8 Q677.8,746.0 670.6,749.5 L666.2,751.5 Q659.0,755.0 651.0,755.0 L646.7,755.0 Q640.7,755.0 635.1,752.9 L629.8,751.0 Q626.0,749.6 622.7,747.4 L412.4,604.9 Q407.4,601.5 407.3,595.5 L407.1,584.0 Q407.0,581.0 407.5,578.0 L407.5,578.0 Q408.0,575.0 409.9,572.6 L425.6,552.2 Q428.0,549.0 430.5,545.9 L440.1,533.8 Q442.6,530.7 445.9,528.4 L482.1,502.5 Q487.0,499.0 493.0,498.6 L499.7,498.2 Q503.7,498.0 507.6,497.0 L510.1,496.3 Q513.0,495.5 515.5,493.8 L592.0,443.2 Q594.5,441.5 597.2,440.1 L697.3,389.2 Q700.0,387.8 702.6,386.4 L731.7,370.3 Q737.0,367.4 739.7,362.0 L739.9,361.7 Q742.6,356.3 747.5,352.8 L759.8,343.8 Q763.0,341.5 766.6,339.8 Z" fill="none" stroke="#7d7d7d" stroke-width="15.8" stroke-linejoin="round"/>
<path d="M890.8,282.1 Q894.4,280.4 898.3,279.7 L901.8,279.0 Q909.3,277.6 916.7,279.4 L923.9,281.2 Q927.8,282.2 931.1,284.4 L1154.0,431.5 Q1159.0,434.8 1163.8,438.5 L1173.7,446.1 Q1180.0,451.0 1186.2,456.0 L1191.8,460.5 Q1203.7,470.0 1208.4,484.4 L1225.4,536.7 Q1227.5,543.0 1226.0,549.5 L1226.0,549.5 Q1224.5,556.0 1219.3,560.2 L1134.6,629.9 Q1130.0,633.7 1125.9,638.1 L1124.8,639.3 Q1120.7,643.7 1115.0,645.4 L1098.5,650.4 Q1094.8,651.5 1090.9,651.8 L1090.9,651.8 Q1087.0,652.0 1083.1,651.7 L1015.3,646.6 Q1011.9,646.3 1009.0,644.6 L1008.6,644.5 Q1006.0,643.0 1003.5,641.4 L863.2,549.0 Q862.4,548.5 861.6,549.1 L823.2,579.9 Q818.5,583.7 813.1,586.2 L801.7,591.5 Q794.4,594.8 786.4,594.8 L769.0,594.8 Q763.0,594.8 758.4,598.7 L713.3,637.1 Q711.0,639.0 709.0,641.2 L708.3,641.9 Q705.6,644.8 708.6,647.4 L714.4,652.5 Q720.4,657.8 723.7,665.1 L726.1,670.5 Q729.0,677.0 727.5,684.0 L727.5,684.0 Q726.0,691.0 721.8,696.8 L704.7,720.5 Q700.0,727.0 693.9,732.2 L683.9,740.8 Q677.8,746.0 670.6,749.5 L666.2,751.5 Q659.0,755.0 651.0,755.0 L646.7,755.0 Q640.7,755.0 635.1,752.9 L629.8,751.0 Q626.0,749.6 622.7,747.4 L412.4,604.9 Q407.4,601.5 407.3,595.5 L407.1,584.0 Q407.0,581.0 407.5,578.0 L407.5,578.0 Q408.0,575.0 409.9,572.6 L425.6,552.2 Q428.0,549.0 430.5,545.9 L440.1,533.8 Q442.6,530.7 445.9,528.4 L482.1,502.5 Q487.0,499.0 493.0,498.6 L499.7,498.2 Q503.7,498.0 507.6,497.0 L510.1,496.3 Q513.0,495.5 515.5,493.8 L592.0,443.2 Q594.5,441.5 597.2,440.1 L697.3,389.2 Q700.0,387.8 702.6,386.4 L731.7,370.3 Q737.0,367.4 739.7,362.0 L739.9,361.7 Q742.6,356.3 747.5,352.8 L759.8,343.8 Q763.0,341.5 766.6,339.8 Z" fill="none" stroke="#00f400" stroke-width="12.2" stroke-linejoin="round"/>
<path d="M890.8,282.1 Q894.4,280.4 898.3,279.7 L901.8,279.0 Q909.3,277.6 916.7,279.4 L923.9,281.2 Q927.8,282.2 931.1,284.4 L1154.0,431.5 Q1159.0,434.8 1163.8,438.5 L1173.7,446.1 Q1180.0,451.0 1186.2,456.0 L1191.8,460.5 Q1203.7,470.0 1208.4,484.4 L1225.4,536.7 Q1227.5,543.0 1226.0,549.5 L1226.0,549.5 Q1224.5,556.0 1219.3,560.2 L1134.6,629.9 Q1130.0,633.7 1125.9,638.1 L1124.8,639.3 Q1120.7,643.7 1115.0,645.4 L1098.5,650.4 Q1094.8,651.5 1090.9,651.8 L1090.9,651.8 Q1087.0,652.0 1083.1,651.7 L1015.3,646.6 Q1011.9,646.3 1009.0,644.6 L1008.6,644.5 Q1006.0,643.0 1003.5,641.4 L863.2,549.0 Q862.4,548.5 861.6,549.1 L823.2,579.9 Q818.5,583.7 813.1,586.2 L801.7,591.5 Q794.4,594.8 786.4,594.8 L769.0,594.8 Q763.0,594.8 758.4,598.7 L713.3,637.1 Q711.0,639.0 709.0,641.2 L708.3,641.9 Q705.6,644.8 708.6,647.4 L714.4,652.5 Q720.4,657.8 723.7,665.1 L726.1,670.5 Q729.0,677.0 727.5,684.0 L727.5,684.0 Q726.0,691.0 721.8,696.8 L704.7,720.5 Q700.0,727.0 693.9,732.2 L683.9,740.8 Q677.8,746.0 670.6,749.5 L666.2,751.5 Q659.0,755.0 651.0,755.0 L646.7,755.0 Q640.7,755.0 635.1,752.9 L629.8,751.0 Q626.0,749.6 622.7,747.4 L412.4,604.9 Q407.4,601.5 407.3,595.5 L407.1,584.0 Q407.0,581.0 407.5,578.0 L407.5,578.0 Q408.0,575.0 409.9,572.6 L425.6,552.2 Q428.0,549.0 430.5,545.9 L440.1,533.8 Q442.6,530.7 445.9,528.4 L482.1,502.5 Q487.0,499.0 493.0,498.6 L499.7,498.2 Q503.7,498.0 507.6,497.0 L510.1,496.3 Q513.0,495.5 515.5,493.8 L592.0,443.2 Q594.5,441.5 597.2,440.1 L697.3,389.2 Q700.0,387.8 702.6,386.4 L731.7,370.3 Q737.0,367.4 739.7,362.0 L739.9,361.7 Q742.6,356.3 747.5,352.8 L759.8,343.8 Q763.0,341.5 766.6,339.8 Z" fill="none" stroke="#808080" stroke-width="10.2" stroke-linejoin="round"/>
<path d="M890.8,282.1 Q894.4,280.4 898.3,279.7 L901.8,279.0 Q909.3,277.6 916.7,279.4 L923.9,281.2 Q927.8,282.2 931.1,284.4 L1154.0,431.5 Q1159.0,434.8 1163.8,438.5 L1173.7,446.1 Q1180.0,451.0 1186.2,456.0 L1191.8,460.5 Q1203.7,470.0 1208.4,484.4 L1225.4,536.7 Q1227.5,543.0 1226.0,549.5 L1226.0,549.5 Q1224.5,556.0 1219.3,560.2 L1134.6,629.9 Q1130.0,633.7 1125.9,638.1 L1124.8,639.3 Q1120.7,643.7 1115.0,645.4 L1098.5,650.4 Q1094.8,651.5 1090.9,651.8 L1090.9,651.8 Q1087.0,652.0 1083.1,651.7 L1015.3,646.6 Q1011.9,646.3 1009.0,644.6 L1008.6,644.5 Q1006.0,643.0 1003.5,641.4 L863.2,549.0 Q862.4,548.5 861.6,549.1 L823.2,579.9 Q818.5,583.7 813.1,586.2 L801.7,591.5 Q794.4,594.8 786.4,594.8 L769.0,594.8 Q763.0,594.8 758.4,598.7 L713.3,637.1 Q711.0,639.0 709.0,641.2 L708.3,641.9 Q705.6,644.8 708.6,647.4 L714.4,652.5 Q720.4,657.8 723.7,665.1 L726.1,670.5 Q729.0,677.0 727.5,684.0 L727.5,684.0 Q726.0,691.0 721.8,696.8 L704.7,720.5 Q700.0,727.0 693.9,732.2 L683.9,740.8 Q677.8,746.0 670.6,749.5 L666.2,751.5 Q659.0,755.0 651.0,755.0 L646.7,755.0 Q640.7,755.0 635.1,752.9 L629.8,751.0 Q626.0,749.6 622.7,747.4 L412.4,604.9 Q407.4,601.5 407.3,595.5 L407.1,584.0 Q407.0,581.0 407.5,578.0 L407.5,578.0 Q408.0,575.0 409.9,572.6 L425.6,552.2 Q428.0,549.0 430.5,545.9 L440.1,533.8 Q442.6,530.7 445.9,528.4 L482.1,502.5 Q487.0,499.0 493.0,498.6 L499.7,498.2 Q503.7,498.0 507.6,497.0 L510.1,496.3 Q513.0,495.5 515.5,493.8 L592.0,443.2 Q594.5,441.5 597.2,440.1 L697.3,389.2 Q700.0,387.8 702.6,386.4 L731.7,370.3 Q737.0,367.4 739.7,362.0 L739.9,361.7 Q742.6,356.3 747.5,352.8 L759.8,343.8 Q763.0,341.5 766.6,339.8 Z" fill="none" stroke="#00f400" stroke-width="6.6" stroke-linejoin="round"/>
<path d="M890.8,282.1 Q894.4,280.4 898.3,279.7 L901.8,279.0 Q909.3,277.6 916.7,279.4 L923.9,281.2 Q927.8,282.2 931.1,284.4 L1154.0,431.5 Q1159.0,434.8 1163.8,438.5 L1173.7,446.1 Q1180.0,451.0 1186.2,456.0 L1191.8,460.5 Q1203.7,470.0 1208.4,484.4 L1225.4,536.7 Q1227.5,543.0 1226.0,549.5 L1226.0,549.5 Q1224.5,556.0 1219.3,560.2 L1134.6,629.9 Q1130.0,633.7 1125.9,638.1 L1124.8,639.3 Q1120.7,643.7 1115.0,645.4 L1098.5,650.4 Q1094.8,651.5 1090.9,651.8 L1090.9,651.8 Q1087.0,652.0 1083.1,651.7 L1015.3,646.6 Q1011.9,646.3 1009.0,644.6 L1008.6,644.5 Q1006.0,643.0 1003.5,641.4 L863.2,549.0 Q862.4,548.5 861.6,549.1 L823.2,579.9 Q818.5,583.7 813.1,586.2 L801.7,591.5 Q794.4,594.8 786.4,594.8 L769.0,594.8 Q763.0,594.8 758.4,598.7 L713.3,637.1 Q711.0,639.0 709.0,641.2 L708.3,641.9 Q705.6,644.8 708.6,647.4 L714.4,652.5 Q720.4,657.8 723.7,665.1 L726.1,670.5 Q729.0,677.0 727.5,684.0 L727.5,684.0 Q726.0,691.0 721.8,696.8 L704.7,720.5 Q700.0,727.0 693.9,732.2 L683.9,740.8 Q677.8,746.0 670.6,749.5 L666.2,751.5 Q659.0,755.0 651.0,755.0 L646.7,755.0 Q640.7,755.0 635.1,752.9 L629.8,751.0 Q626.0,749.6 622.7,747.4 L412.4,604.9 Q407.4,601.5 407.3,595.5 L407.1,584.0 Q407.0,581.0 407.5,578.0 L407.5,578.0 Q408.0,575.0 409.9,572.6 L425.6,552.2 Q428.0,549.0 430.5,545.9 L440.1,533.8 Q442.6,530.7 445.9,528.4 L482.1,502.5 Q487.0,499.0 493.0,498.6 L499.7,498.2 Q503.7,498.0 507.6,497.0 L510.1,496.3 Q513.0,495.5 515.5,493.8 L592.0,443.2 Q594.5,441.5 597.2,440.1 L697.3,389.2 Q700.0,387.8 702.6,386.4 L731.7,370.3 Q737.0,367.4 739.7,362.0 L739.9,361.7 Q742.6,356.3 747.5,352.8 L759.8,343.8 Q763.0,341.5 766.6,339.8 Z" fill="none" stroke="#838383" stroke-width="4.6" stroke-linejoin="round"/>
</g>
<path d="M890.8,282.1 Q894.4,280.4 898.3,279.7 L901.8,279.0 Q909.3,277.6 916.7,279.4 L923.9,281.2 Q927.8,282.2 931.1,284.4 L1154.0,431.5 Q1159.0,434.8 1163.8,438.5 L1173.7,446.1 Q1180.0,451.0 1186.2,456.0 L1191.8,460.5 Q1203.7,470.0 1208.4,484.4 L1225.4,536.7 Q1227.5,543.0 1226.0,549.5 L1226.0,549.5 Q1224.5,556.0 1219.3,560.2 L1134.6,629.9 Q1130.0,633.7 1125.9,638.1 L1124.8,639.3 Q1120.7,643.7 1115.0,645.4 L1098.5,650.4 Q1094.8,651.5 1090.9,651.8 L1090.9,651.8 Q1087.0,652.0 1083.1,651.7 L1015.3,646.6 Q1011.9,646.3 1009.0,644.6 L1008.6,644.5 Q1006.0,643.0 1003.5,641.4 L863.2,549.0 Q862.4,548.5 861.6,549.1 L823.2,579.9 Q818.5,583.7 813.1,586.2 L801.7,591.5 Q794.4,594.8 786.4,594.8 L769.0,594.8 Q763.0,594.8 758.4,598.7 L713.3,637.1 Q711.0,639.0 709.0,641.2 L708.3,641.9 Q705.6,644.8 708.6,647.4 L714.4,652.5 Q720.4,657.8 723.7,665.1 L726.1,670.5 Q729.0,677.0 727.5,684.0 L727.5,684.0 Q726.0,691.0 721.8,696.8 L704.7,720.5 Q700.0,727.0 693.9,732.2 L683.9,740.8 Q677.8,746.0 670.6,749.5 L666.2,751.5 Q659.0,755.0 651.0,755.0 L646.7,755.0 Q640.7,755.0 635.1,752.9 L629.8,751.0 Q626.0,749.6 622.7,747.4 L412.4,604.9 Q407.4,601.5 407.3,595.5 L407.1,584.0 Q407.0,581.0 407.5,578.0 L407.5,578.0 Q408.0,575.0 409.9,572.6 L425.6,552.2 Q428.0,549.0 430.5,545.9 L440.1,533.8 Q442.6,530.7 445.9,528.4 L482.1,502.5 Q487.0,499.0 493.0,498.6 L499.7,498.2 Q503.7,498.0 507.6,497.0 L510.1,496.3 Q513.0,495.5 515.5,493.8 L592.0,443.2 Q594.5,441.5 597.2,440.1 L697.3,389.2 Q700.0,387.8 702.6,386.4 L731.7,370.3 Q737.0,367.4 739.7,362.0 L739.9,361.7 Q742.6,356.3 747.5,352.8 L759.8,343.8 Q763.0,341.5 766.6,339.8 Z" fill="none" stroke="#00f400" stroke-width="3.6" stroke-linejoin="round"/>
<path d="M520.0,504.0 L548.0,514.0 L732.4,404.0 L781.5,352.6 L760.0,350.0 L742.0,372.0 L700.0,396.0 L618.0,442.0 Z" fill="url(#wallB)"/>
<path d="M514.0,500.5 L728.0,380.5 L731.0,384.5 L519.0,504.5 Z" fill="#fb9226"/>
<path d="M783.0,353.5 L775.7,339.0 L773.4,339.8 L770.5,340.4 L766.9,341.0 L762.9,342.2 L758.4,344.2 L753.9,347.2 L749.6,351.4 L746.0,356.7 L743.5,363.0 L742.3,370.0 L742.9,377.2 L745.1,384.3 L749.2,390.6 L754.8,395.6 Z" fill="#707070"/>
<path d="M783.0,353.5 L775.7,339.0 L773.4,339.8 L770.5,340.4 L766.9,341.0 L762.9,342.2 L758.4,344.2 L753.9,347.2 L749.6,351.4 L746.0,356.7 L743.5,363.0 L742.3,370.0 L742.9,377.2 L745.1,384.3 L749.2,390.6 L754.8,395.6 Z" fill="#707070"/>
<path d="M775.7,339.0 L773.4,339.8 L770.5,340.4 L766.9,341.0 L762.9,342.2 L758.4,344.2 L753.9,347.2 L749.6,351.4 L746.0,356.7 L743.5,363.0 L742.3,370.0 L742.9,377.2 L745.1,384.3 L749.2,390.6 L754.8,395.6" fill="none" stroke="#00f400" stroke-width="1.0"/>
<path d="M783.0,353.5 L776.3,340.1 L774.1,340.9 L771.4,341.4 L768.2,342.0 L764.4,343.1 L760.3,344.9 L756.1,347.7 L752.2,351.6 L748.8,356.5 L746.5,362.2 L745.5,368.7 L745.9,375.4 L748.1,381.9 L751.8,387.8 L757.0,392.4 Z" fill="#707070"/>
<path d="M776.3,340.1 L774.1,340.9 L771.4,341.4 L768.2,342.0 L764.4,343.1 L760.3,344.9 L756.1,347.7 L752.2,351.6 L748.8,356.5 L746.5,362.2 L745.5,368.7 L745.9,375.4 L748.1,381.9 L751.8,387.8 L757.0,392.4" fill="none" stroke="#00f400" stroke-width="1.0"/>
<path d="M783.0,353.5 L776.9,341.2 L774.8,341.9 L772.4,342.4 L769.4,343.0 L766.0,344.0 L762.2,345.6 L758.3,348.2 L754.7,351.7 L751.7,356.2 L749.5,361.5 L748.6,367.4 L749.0,373.6 L751.0,379.5 L754.4,384.9 L759.1,389.2 Z" fill="#707070"/>
<path d="M776.9,341.2 L774.8,341.9 L772.4,342.4 L769.4,343.0 L766.0,344.0 L762.2,345.6 L758.3,348.2 L754.7,351.7 L751.7,356.2 L749.5,361.5 L748.6,367.4 L749.0,373.6 L751.0,379.5 L754.4,384.9 L759.1,389.2" fill="none" stroke="#00f400" stroke-width="1.0"/>
<path d="M783.0,353.5 L777.4,342.3 L775.6,343.0 L773.4,343.4 L770.6,343.9 L767.5,344.8 L764.1,346.3 L760.6,348.7 L757.3,351.9 L754.5,356.0 L752.6,360.8 L751.7,366.2 L752.1,371.7 L753.9,377.2 L757.0,382.0 L761.3,385.9 Z" fill="#707070"/>
<path d="M777.4,342.3 L775.6,343.0 L773.4,343.4 L770.6,343.9 L767.5,344.8 L764.1,346.3 L760.6,348.7 L757.3,351.9 L754.5,356.0 L752.6,360.8 L751.7,366.2 L752.1,371.7 L753.9,377.2 L757.0,382.0 L761.3,385.9" fill="none" stroke="#00f400" stroke-width="1.0"/>
<path d="M783.0,353.5 L778.0,343.4 L776.3,344.0 L774.3,344.4 L771.9,344.9 L769.1,345.7 L766.0,347.1 L762.8,349.2 L759.9,352.0 L757.4,355.7 L755.6,360.1 L754.8,364.9 L755.2,369.9 L756.8,374.8 L759.6,379.2 L763.5,382.7 Z" fill="#757575"/>
<path d="M778.0,343.4 L776.3,344.0 L774.3,344.4 L771.9,344.9 L769.1,345.7 L766.0,347.1 L762.8,349.2 L759.9,352.0 L757.4,355.7 L755.6,360.1 L754.8,364.9 L755.2,369.9 L756.8,374.8 L759.6,379.2 L763.5,382.7" fill="none" stroke="#00f400" stroke-width="1.0"/>
<path d="M783.0,353.5 L778.5,344.6 L777.1,345.1 L775.3,345.4 L773.1,345.8 L770.6,346.6 L767.9,347.8 L765.1,349.6 L762.4,352.2 L760.2,355.5 L758.7,359.3 L758.0,363.6 L758.3,368.1 L759.7,372.4 L762.2,376.3 L765.7,379.4 Z" fill="#838383"/>
<path d="M778.5,344.6 L777.1,345.1 L775.3,345.4 L773.1,345.8 L770.6,346.6 L767.9,347.8 L765.1,349.6 L762.4,352.2 L760.2,355.5 L758.7,359.3 L758.0,363.6 L758.3,368.1 L759.7,372.4 L762.2,376.3 L765.7,379.4" fill="none" stroke="#00f400" stroke-width="1.0"/>
<path d="M783.0,353.5 L779.1,345.7 L777.8,346.1 L776.3,346.4 L774.4,346.8 L772.2,347.4 L769.8,348.5 L767.3,350.1 L765.0,352.4 L763.1,355.2 L761.7,358.6 L761.1,362.4 L761.4,366.3 L762.6,370.1 L764.8,373.5 L767.8,376.2 Z" fill="#949494"/>
<path d="M779.1,345.7 L777.8,346.1 L776.3,346.4 L774.4,346.8 L772.2,347.4 L769.8,348.5 L767.3,350.1 L765.0,352.4 L763.1,355.2 L761.7,358.6 L761.1,362.4 L761.4,366.3 L762.6,370.1 L764.8,373.5 L767.8,376.2" fill="none" stroke="#00f400" stroke-width="1.0"/>
<path d="M783.0,353.5 L779.6,346.8 L778.6,347.2 L777.2,347.4 L775.6,347.8 L773.7,348.3 L771.6,349.2 L769.6,350.6 L767.6,352.5 L765.9,355.0 L764.8,357.9 L764.2,361.1 L764.5,364.4 L765.5,367.7 L767.4,370.6 L770.0,372.9 Z" fill="#a2a2a2"/>
<path d="M779.6,346.8 L778.6,347.2 L777.2,347.4 L775.6,347.8 L773.7,348.3 L771.6,349.2 L769.6,350.6 L767.6,352.5 L765.9,355.0 L764.8,357.9 L764.2,361.1 L764.5,364.4 L765.5,367.7 L767.4,370.6 L770.0,372.9" fill="none" stroke="#00f400" stroke-width="1.0"/>
<path d="M783.0,353.5 L780.2,347.9 L779.3,348.2 L778.2,348.4 L776.8,348.7 L775.3,349.2 L773.5,349.9 L771.8,351.1 L770.2,352.7 L768.8,354.7 L767.8,357.1 L767.4,359.8 L767.6,362.6 L768.4,365.3 L770.0,367.8 L772.2,369.7 Z" fill="#a8a8a8"/>
<path d="M780.2,347.9 L779.3,348.2 L778.2,348.4 L776.8,348.7 L775.3,349.2 L773.5,349.9 L771.8,351.1 L770.2,352.7 L768.8,354.7 L767.8,357.1 L767.4,359.8 L767.6,362.6 L768.4,365.3 L770.0,367.8 L772.2,369.7" fill="none" stroke="#00f400" stroke-width="1.0"/>
<path d="M783.0,353.5 L780.8,349.0 L780.0,349.3 L779.1,349.5 L778.1,349.7 L776.8,350.0 L775.4,350.6 L774.0,351.6 L772.7,352.9 L771.6,354.5 L770.8,356.4 L770.5,358.6 L770.6,360.8 L771.4,363.0 L772.6,364.9 L774.3,366.5 Z" fill="#a2a2a2"/>
<path d="M780.8,349.0 L780.0,349.3 L779.1,349.5 L778.1,349.7 L776.8,350.0 L775.4,350.6 L774.0,351.6 L772.7,352.9 L771.6,354.5 L770.8,356.4 L770.5,358.6 L770.6,360.8 L771.4,363.0 L772.6,364.9 L774.3,366.5" fill="none" stroke="#00f400" stroke-width="1.0"/>
<path d="M783.0,353.5 L781.3,350.1 L780.8,350.3 L780.1,350.5 L779.3,350.6 L778.4,350.9 L777.3,351.4 L776.3,352.1 L775.3,353.0 L774.5,354.2 L773.9,355.7 L773.6,357.3 L773.7,359.0 L774.3,360.6 L775.2,362.1 L776.5,363.2 Z" fill="#949494"/>
<path d="M781.3,350.1 L780.8,350.3 L780.1,350.5 L779.3,350.6 L778.4,350.9 L777.3,351.4 L776.3,352.1 L775.3,353.0 L774.5,354.2 L773.9,355.7 L773.6,357.3 L773.7,359.0 L774.3,360.6 L775.2,362.1 L776.5,363.2" fill="none" stroke="#00f400" stroke-width="1.0"/>
<path d="M783.0,353.5 L781.9,351.3 L781.5,351.4 L781.1,351.5 L780.5,351.6 L779.9,351.8 L779.2,352.1 L778.5,352.5 L777.9,353.2 L777.3,354.0 L776.9,355.0 L776.7,356.0 L776.8,357.1 L777.2,358.2 L777.8,359.2 L778.7,360.0 Z" fill="#838383"/>
<path d="M781.9,351.3 L781.5,351.4 L781.1,351.5 L780.5,351.6 L779.9,351.8 L779.2,352.1 L778.5,352.5 L777.9,353.2 L777.3,354.0 L776.9,355.0 L776.7,356.0 L776.8,357.1 L777.2,358.2 L777.8,359.2 L778.7,360.0" fill="none" stroke="#00f400" stroke-width="1.0"/>
<path d="M783.0,353.5 L782.4,352.4 L782.3,352.4 L782.0,352.5 L781.8,352.5 L781.5,352.6 L781.1,352.8 L780.8,353.0 L780.4,353.3 L780.2,353.7 L780.0,354.2 L779.9,354.8 L779.9,355.3 L780.1,355.9 L780.4,356.4 L780.8,356.7 Z" fill="#757575"/>
<path d="M782.4,352.4 L782.3,352.4 L782.0,352.5 L781.8,352.5 L781.5,352.6 L781.1,352.8 L780.8,353.0 L780.4,353.3 L780.2,353.7 L780.0,354.2 L779.9,354.8 L779.9,355.3 L780.1,355.9 L780.4,356.4 L780.8,356.7" fill="none" stroke="#00f400" stroke-width="1.0"/>
<path d="M450.0,543.0 L499.0,505.0 L669.0,617.0 L621.0,657.0 Z" fill="#fb9226" stroke="#111" stroke-width="0.7"/>
<path d="M548.0,514.0 L732.4,404.0 L833.3,472.6 L779.6,514.3 L732.4,484.6 L629.6,567.8 Z" fill="#fb9226" stroke="#111" stroke-width="0.7"/>
<path d="M784.8,354.8 Q781.5,352.6 785.1,350.8 L893.2,296.8 Q903.9,291.4 913.9,298.0 L1139.3,445.2 Q1142.6,447.4 1139.5,450.0 L1046.1,527.4 Q1043.0,530.0 1039.7,527.8 Z" fill="#fb9226" stroke="#111" stroke-width="0.7"/>
<path d="M732.4,484.6 L779.6,514.3 L770.0,530.0 L740.0,545.0 L700.0,540.0 L707.0,504.0 Z" fill="url(#wallV)"/>
<path d="M732.4,484.6 L733,545 M732.4,484.6 L707,506 M732.4,484.6 L779.6,514.3" stroke="#111" stroke-width="0.8" stroke-dasharray="3,1.5" fill="none"/>
<path d="M893.0,397.4 Q880.0,388.0 893.8,379.9 L943.2,351.1 Q957.0,343.0 970.2,352.0 L1103.8,443.0 Q1117.0,452.0 1104.4,461.9 L1058.6,498.1 Q1046.0,508.0 1033.0,498.6 Z" fill="#7a7a7a" stroke="#00f400" stroke-width="1.6"/>
<path d="M895.2,395.0 Q884.8,387.4 896.0,381.1 L946.1,353.0 Q957.3,346.6 967.9,353.9 L1101.9,445.0 Q1112.5,452.3 1102.4,460.2 L1056.2,496.2 Q1046.0,504.1 1035.6,496.5 Z" fill="none" stroke="#00f400" stroke-width="0.9"/>
<path d="M898.2,394.0 Q888.5,387.0 899.0,381.3 L947.0,355.2 Q957.5,349.5 967.4,356.2 L1099.1,445.8 Q1109.0,452.5 1099.5,459.8 L1055.5,493.7 Q1046.0,501.0 1036.3,494.0 Z" fill="none" stroke="#111" stroke-width="0.9"/>
<path d="M901.2,393.1 Q892.2,386.6 902.1,381.4 L947.9,357.5 Q957.7,352.4 966.9,358.6 L1096.3,446.5 Q1105.5,452.7 1096.6,459.4 L1054.9,491.2 Q1046.0,497.9 1037.0,491.4 Z" fill="none" stroke="#00f400" stroke-width="0.9"/>
<path d="M904.3,391.3 Q897.0,386.0 905.1,382.0 L949.9,360.0 Q958.0,356.0 965.4,361.1 L1093.6,447.9 Q1101.0,453.0 1093.8,458.4 L1053.2,488.6 Q1046.0,494.0 1038.7,488.7 Z" fill="#fb9226" stroke="#00f400" stroke-width="1.2"/>
<path d="M826.0,335.5 L874.0,311.0" fill="none" stroke-linecap="round" stroke="#00f400" stroke-width="13"/>
<path d="M826.0,335.5 L874.0,311.0" fill="none" stroke-linecap="round" stroke="#787878" stroke-width="10.6"/>
<path d="M826.0,335.5 L874.0,311.0" fill="none" stroke-linecap="round" stroke="#00f400" stroke-width="8.4"/>
<path d="M826.0,335.5 L874.0,311.0" fill="none" stroke-linecap="round" stroke="#2a2a2a" stroke-width="6"/>
<path d="M826.0,334.7 L874.0,310.2" fill="none" stroke-linecap="round" stroke="#fb9226" stroke-width="3.6"/>
<path d="M851.0,350.5 L901.0,327.0" fill="none" stroke-linecap="round" stroke="#00f400" stroke-width="13"/>
<path d="M851.0,350.5 L901.0,327.0" fill="none" stroke-linecap="round" stroke="#787878" stroke-width="10.6"/>
<path d="M851.0,350.5 L901.0,327.0" fill="none" stroke-linecap="round" stroke="#00f400" stroke-width="8.4"/>
<path d="M851.0,350.5 L901.0,327.0" fill="none" stroke-linecap="round" stroke="#2a2a2a" stroke-width="6"/>
<path d="M851.0,349.7 L901.0,326.2" fill="none" stroke-linecap="round" stroke="#fb9226" stroke-width="3.6"/>
<path d="M876.0,368.0 L925.0,345.0" fill="none" stroke-linecap="round" stroke="#00f400" stroke-width="13"/>
<path d="M876.0,368.0 L925.0,345.0" fill="none" stroke-linecap="round" stroke="#787878" stroke-width="10.6"/>
<path d="M876.0,368.0 L925.0,345.0" fill="none" stroke-linecap="round" stroke="#00f400" stroke-width="8.4"/>
<path d="M876.0,368.0 L925.0,345.0" fill="none" stroke-linecap="round" stroke="#2a2a2a" stroke-width="6"/>
<path d="M876.0,367.2 L925.0,344.2" fill="none" stroke-linecap="round" stroke="#fb9226" stroke-width="3.6"/>
<path d="M521.0,546.0 L605.0,600.5" fill="none" stroke-linecap="round" stroke="#00f400" stroke-width="15"/>
<path d="M521.0,546.0 L605.0,600.5" fill="none" stroke-linecap="round" stroke="#4a4a4a" stroke-width="12.4"/>
<path d="M521.0,546.0 L605.0,600.5" fill="none" stroke-linecap="round" stroke="#00f400" stroke-width="10.4"/>
<path d="M521.0,546.0 L605.0,600.5" fill="none" stroke-linecap="round" stroke="#222" stroke-width="8.2"/>
<path d="M521.8,544.8 L605.8,599.3" fill="none" stroke-linecap="round" stroke="#fb9226" stroke-width="5.4"/>
<path d="M493.0,566.5 L579.0,621.5" fill="none" stroke-linecap="round" stroke="#00f400" stroke-width="15"/>
<path d="M493.0,566.5 L579.0,621.5" fill="none" stroke-linecap="round" stroke="#4a4a4a" stroke-width="12.4"/>
<path d="M493.0,566.5 L579.0,621.5" fill="none" stroke-linecap="round" stroke="#00f400" stroke-width="10.4"/>
<path d="M493.0,566.5 L579.0,621.5" fill="none" stroke-linecap="round" stroke="#222" stroke-width="8.2"/>
<path d="M493.8,565.3 L579.8,620.3" fill="none" stroke-linecap="round" stroke="#fb9226" stroke-width="5.4"/>
<ellipse cx="785" cy="363.7" rx="11.5" ry="9.5" fill="#4a4a4a" stroke="#111" stroke-width="1"/>
<path d="M774,364.7 A11.5,9.5 0 0 0 793,370.7 L794,358.7 A11,8 0 0 0 774,364.7Z" fill="url(#wallH)" opacity="0.9"/>
<ellipse cx="907.4" cy="297" rx="11.5" ry="9.5" fill="#4a4a4a" stroke="#111" stroke-width="1"/>
<path d="M896.4,298 A11.5,9.5 0 0 0 915.4,304 L916.4,292 A11,8 0 0 0 896.4,298Z" fill="url(#wallH)" opacity="0.9"/>
<ellipse cx="872" cy="424.8" rx="11.5" ry="9.5" fill="#4a4a4a" stroke="#111" stroke-width="1"/>
<path d="M861,425.8 A11.5,9.5 0 0 0 880,431.8 L881,419.8 A11,8 0 0 0 861,425.8Z" fill="url(#wallH)" opacity="0.9"/>
<ellipse cx="977.8" cy="343" rx="11.5" ry="9.5" fill="#4a4a4a" stroke="#111" stroke-width="1"/>
<path d="M966.8,344 A11.5,9.5 0 0 0 985.8,350 L986.8,338 A11,8 0 0 0 966.8,344Z" fill="url(#wallH)" opacity="0.9"/>
<ellipse cx="1126" cy="442" rx="11.5" ry="9.5" fill="#4a4a4a" stroke="#111" stroke-width="1"/>
<path d="M1115,443 A11.5,9.5 0 0 0 1134,449 L1135,437 A11,8 0 0 0 1115,443Z" fill="url(#wallH)" opacity="0.9"/>
<ellipse cx="1022" cy="520" rx="11.5" ry="9.5" fill="#4a4a4a" stroke="#111" stroke-width="1"/>
<path d="M1011,521 A11.5,9.5 0 0 0 1030,527 L1031,515 A11,8 0 0 0 1011,521Z" fill="url(#wallH)" opacity="0.9"/>
<path d="M611,469 L714.8,543" stroke="#1a1a1a" stroke-width="6.4" stroke-linecap="round"/>
<path d="M611,469 L714.8,543" stroke="#555" stroke-width="4.2" stroke-linecap="round"/>
<path d="M576,488 L683,569" stroke="#1a1a1a" stroke-width="6.4" stroke-linecap="round"/>
<path d="M576,488 L683,569" stroke="#555" stroke-width="4.2" stroke-linecap="round"/>
<path d="M597,537 L696,465" stroke="#1a1a1a" stroke-width="6.4" stroke-linecap="round"/>
<path d="M597,537 L696,465" stroke="#555" stroke-width="4.2" stroke-linecap="round"/>
<path d="M635,458 L735,524 M653,447 L750,511" stroke="#111" stroke-width="0.7" fill="none"/>
<path d="M450,543 L441,542 L424,575 M621,657 L623,738 M669,617 L684,636 M441,542 L621,660" stroke="#111" stroke-width="0.8" fill="none"/>
</g>
<!--OVERLAYS-->
</svg></div>

<div id="titlebar"></div><div id="tabs"></div><div id="ribbon"></div>
<span class="t" style="left:358.0px;top:5.8px;font-size:12px;letter-spacing:-0.21px;color:#2b2b2b;">Autodesk PowerMill Ultimate 2022</span>
<span class="t" style="left:588.5px;top:5.8px;font-size:12px;letter-spacing:-0.26px;color:#2b2b2b;">[ Editable Project * Finishing Exclude Flats dataset ]</span>
<span class="t" style="left:-137.0px;top:32.8px;font-size:12px;letter-spacing:-0.78px;color:#1a1a1a;">n Edit</span>
<span class="t" style="left:-84.5px;top:32.8px;font-size:12px;letter-spacing:0.25px;color:#1a1a1a;">Tool</span>
<span class="t" style="left:-19.5px;top:32.8px;font-size:12px;letter-spacing:-0.30px;color:#1a1a1a;">Boundary</span>
<span class="t" style="left:52.5px;top:32.8px;font-size:12px;letter-spacing:-0.24px;color:#1a1a1a;">Pattern</span>
<span class="t" style="left:143.5px;top:32.8px;font-size:12px;letter-spacing:-0.36px;color:#1a1a1a;">Hole Feature Set</span>
<span class="t" style="left:254.0px;top:32.8px;font-size:12px;letter-spacing:-0.31px;color:#1a1a1a;">Feature Group</span>
<span class="t" style="left:350.5px;top:32.8px;font-size:12px;letter-spacing:-0.02px;color:#1a1a1a;">Workplane</span>
<span class="t" style="left:424.5px;top:32.8px;font-size:12px;letter-spacing:0.06px;color:#1a1a1a;">Model</span>
<span class="t" style="left:502.0px;top:32.8px;font-size:12px;letter-spacing:-0.18px;color:#1a1a1a;">Stock Model</span>
<span class="t" style="left:598.5px;top:32.8px;font-size:12px;letter-spacing:-0.12px;color:#1a1a1a;">Machine Tool</span>
<span class="t" style="left:690.5px;top:32.8px;font-size:12px;letter-spacing:-0.10px;color:#1a1a1a;">Simulation</span>
<span class="t" style="left:778.5px;top:32.8px;font-size:12px;letter-spacing:-0.57px;color:#1a1a1a;">NC Program</span>
<span class="t" style="left:850.5px;top:32.8px;font-size:12px;letter-spacing:-0.20px;color:#1a1a1a;">View</span>
<span class="t" style="left:913.0px;top:32.8px;font-size:12px;letter-spacing:-0.09px;color:#1a1a1a;">Additive</span>
<div class="hl" style="left:605px;width:51px"></div>
<div class="hl" style="left:698px;width:85px"></div>
<div class="sep" style="left:89px"></div>
<div class="sep" style="left:241px"></div>
<div class="sep" style="left:308px"></div>
<div class="sep" style="left:525px"></div>
<div class="sep" style="left:598px"></div>
<div class="sep" style="left:1331px"></div>
<span class="t" style="left:-135.0px;top:93.8px;font-size:12px;letter-spacing:0.22px;color:#1a1a1a;">ttings</span>
<span class="t" style="left:-90.5px;top:93.8px;font-size:12px;letter-spacing:-0.56px;color:#1a1a1a;">Calculate</span>
<span class="t" style="left:-25.5px;top:93.8px;font-size:12px;letter-spacing:-0.90px;color:#1a1a1a;">NC</span>
<span class="t" style="left:-30.5px;top:106.8px;font-size:12px;letter-spacing:-0.43px;color:#1a1a1a;">Program</span>
<span class="t" style="left:24.0px;top:93.8px;font-size:12px;letter-spacing:-0.40px;color:#a6a6a6;">Stock</span>
<span class="t" style="left:23.0px;top:106.8px;font-size:12px;letter-spacing:-0.14px;color:#a6a6a6;">Model</span>
<span class="t" style="left:65.5px;top:93.8px;font-size:12px;letter-spacing:-0.47px;color:#a6a6a6;">Setup</span>
<span class="t" style="left:125.0px;top:93.8px;font-size:12px;letter-spacing:-0.34px;color:#1a1a1a;">Simulate</span>
<span class="t" style="left:125.0px;top:106.8px;font-size:12px;letter-spacing:-0.27px;color:#1a1a1a;">from Start</span>
<span class="t" style="left:189.5px;top:93.8px;font-size:12px;letter-spacing:-0.05px;color:#1a1a1a;">Toolpath</span>
<span class="t" style="left:190.0px;top:106.8px;font-size:12px;letter-spacing:-0.40px;color:#1a1a1a;">Statistics</span>
<span class="t" style="left:246.0px;top:93.8px;font-size:12px;letter-spacing:-0.34px;color:#1a1a1a;">Activate</span>
<span class="t" style="left:246.5px;top:106.8px;font-size:12px;letter-spacing:-0.02px;color:#1a1a1a;">Workplane</span>
<span class="t" style="left:301.0px;top:93.8px;font-size:12px;letter-spacing:-0.59px;color:#1a1a1a;">Recreate</span>
<span class="t" style="left:301.5px;top:106.8px;font-size:12px;letter-spacing:-0.47px;color:#1a1a1a;">Block</span>
<span class="t" style="left:348.0px;top:93.8px;font-size:12px;letter-spacing:-0.58px;color:#1a1a1a;">Replace</span>
<span class="t" style="left:347.5px;top:106.8px;font-size:12px;letter-spacing:-0.25px;color:#1a1a1a;">Tool</span>
<span class="t" style="left:411.0px;top:93.8px;font-size:12px;letter-spacing:-0.27px;color:#1a1a1a;">Properties</span>
<span class="t" style="left:479.5px;top:93.8px;font-size:12px;letter-spacing:-0.05px;color:#1a1a1a;">Toolpath</span>
<span class="t" style="left:526.5px;top:93.8px;font-size:12px;letter-spacing:-0.60px;color:#1a1a1a;">Links</span>
<span class="t" style="left:568.0px;top:93.8px;font-size:12px;letter-spacing:-0.90px;color:#1a1a1a;">Leads</span>
<span class="t" style="left:611.0px;top:93.8px;font-size:12px;letter-spacing:-0.00px;color:#1a1a1a;">Cutting</span>
<span class="t" style="left:611.0px;top:106.8px;font-size:12px;letter-spacing:-0.67px;color:#1a1a1a;">Moves</span>
<span class="t" style="left:653.5px;top:93.8px;font-size:12px;letter-spacing:-0.25px;color:#1a1a1a;">Tool</span>
<span class="t" style="left:653.0px;top:106.8px;font-size:12px;letter-spacing:-0.90px;color:#1a1a1a;">Axes</span>
<span class="t" style="left:698.0px;top:93.8px;font-size:12px;letter-spacing:-0.19px;color:#1a1a1a;">Contact</span>
<span class="t" style="left:698.0px;top:106.8px;font-size:12px;letter-spacing:-0.38px;color:#1a1a1a;">Normals</span>
<span class="t" style="left:753.5px;top:93.8px;font-size:12px;letter-spacing:0.03px;color:#a6a6a6;">Orientation</span>
<span class="t" style="left:754.0px;top:106.8px;font-size:12px;letter-spacing:-0.57px;color:#a6a6a6;">Vectors</span>
<span class="t" style="left:808.0px;top:93.8px;font-size:12px;letter-spacing:-0.23px;color:#1a1a1a;">Points</span>
<span class="t" style="left:850.0px;top:93.8px;font-size:12px;letter-spacing:-0.67px;color:#1a1a1a;">Feeds</span>
<span class="t" style="left:891.5px;top:93.8px;font-size:12px;letter-spacing:-0.47px;color:#1a1a1a;">Rapid</span>
<span class="t" style="left:891.5px;top:106.8px;font-size:12px;letter-spacing:-0.62px;color:#1a1a1a;">Surface</span>
<span class="t" style="left:935.0px;top:93.8px;font-size:12px;letter-spacing:-0.56px;color:#1a1a1a;">Plunge</span>
<span class="t" style="left:934.5px;top:106.8px;font-size:12px;letter-spacing:-0.62px;color:#1a1a1a;">Surface</span>
<span class="t" style="left:994.5px;top:93.8px;font-size:12px;letter-spacing:-0.34px;color:#a6a6a6;">Compensated</span>
<span class="t" style="left:994.0px;top:106.8px;font-size:12px;letter-spacing:0.08px;color:#a6a6a6;">Toolpath</span>
<span class="t" style="left:1054.0px;top:93.8px;font-size:12px;letter-spacing:-0.48px;color:#1a1a1a;">Contact</span>
<span class="t" style="left:1054.0px;top:106.8px;font-size:12px;letter-spacing:-0.71px;color:#1a1a1a;">Track</span>
<span class="t" style="left:1102.5px;top:93.8px;font-size:12px;letter-spacing:-0.11px;color:#1a1a1a;">Colliding</span>
<span class="t" style="left:1102.0px;top:106.8px;font-size:12px;letter-spacing:-0.50px;color:#1a1a1a;">Sections</span>
<span class="t" style="left:1152.0px;top:93.8px;font-size:12px;letter-spacing:-0.26px;color:#1a1a1a;">View by</span>
<span class="t" style="left:1152.0px;top:106.8px;font-size:12px;letter-spacing:-0.17px;color:#1a1a1a;">Z Height</span>
<span class="t" style="left:-115.0px;top:125.8px;font-size:12px;letter-spacing:-0.45px;color:#1a1a1a;">Calculate</span>
<span class="t" style="left:15.0px;top:125.8px;font-size:12px;letter-spacing:-0.12px;color:#1a1a1a;">Add to</span>
<span class="t" style="left:125.0px;top:125.8px;font-size:12px;letter-spacing:-0.20px;color:#1a1a1a;">Simulation</span>
<span class="t" style="left:267.5px;top:125.8px;font-size:12px;letter-spacing:0.04px;color:#1a1a1a;">Utilities</span>
<span class="t" style="left:412.5px;top:125.8px;font-size:12px;letter-spacing:0.09px;color:#1a1a1a;">Information</span>
<span class="t" style="left:815.5px;top:125.8px;font-size:12px;letter-spacing:-0.25px;color:#1a1a1a;">Draw</span>
<div id="leftpanel"><div class="hd"></div></div>
<div id="rightpanel"><div class="hd"></div></div>
<div id="status"></div><div id="blackline"></div>
<div class="fld dim" style="left:-20px;width:33px"></div>
<div class="fld" style="left:38px;width:58px"></div>
<div class="fld" style="left:98px;width:58px"></div>
<div class="fld" style="left:158px;width:58px"></div>
<div class="fld dim" style="left:272px;width:91px"></div>
<div class="fld" style="left:438px;width:58px"></div>
<div class="fld" style="left:524px;width:58px"></div>
<div class="fld" style="left:610px;width:58px"></div>
<div class="fld" style="left:696px;width:58px"></div>
<div class="fld" style="left:782px;width:58px"></div>
<span class="t" style="left:-103.0px;top:1054.8px;font-size:12px;letter-spacing:-0.67px;color:#1a1a1a;">0</span>
<span class="t" style="left:-26.5px;top:1054.8px;font-size:12px;letter-spacing:-0.24px;color:#1a1a1a;">-292.52</span>
<span class="t" style="left:33.5px;top:1054.8px;font-size:12px;letter-spacing:-0.63px;color:#1a1a1a;">213.172</span>
<span class="t" style="left:303.5px;top:1054.8px;font-size:12px;letter-spacing:-0.50px;color:#1a1a1a;">mm</span>
<span class="t" style="left:388.0px;top:1054.8px;font-size:12px;letter-spacing:-0.23px;color:#1a1a1a;">0.1</span>
<span class="t" style="left:474.0px;top:1054.8px;font-size:12px;letter-spacing:-0.23px;color:#1a1a1a;">0.0</span>
<span class="t" style="left:560.0px;top:1054.8px;font-size:12px;letter-spacing:-0.23px;color:#1a1a1a;">8.0</span>
<span class="t" style="left:646.0px;top:1054.8px;font-size:12px;letter-spacing:-0.23px;color:#1a1a1a;">4.0</span>
<svg class="ic" style="left:0;top:0" width="1623" height="1080" viewBox="0 0 1623 1080">
<path d="M-5.7,73.4 L7.2,85.9 L11.8,81.3 L-1.1,69.3 L3.1,65.1 L16.0,77.1 L20.2,73.0 L7.2,60.5" fill="none" stroke="#14b4e4" stroke-width="1.5" stroke-linejoin="miter"/>
<g transform="translate(19.4,85.5)"><circle r="4.6" fill="#1e88e5"/><rect x="-1.5" y="-6.6" width="3" height="13.2" rx="0.6" fill="#1e88e5" transform="rotate(0)"/><rect x="-1.5" y="-6.6" width="3" height="13.2" rx="0.6" fill="#1e88e5" transform="rotate(45)"/><rect x="-1.5" y="-6.6" width="3" height="13.2" rx="0.6" fill="#1e88e5" transform="rotate(90)"/><rect x="-1.5" y="-6.6" width="3" height="13.2" rx="0.6" fill="#1e88e5" transform="rotate(135)"/><circle r="1.9" fill="#fcfcfc"/></g>
<rect x="43.4" y="60.4" width="23.2" height="30.2" fill="#d2d2d2" stroke="#555" stroke-width="1.1"/>
<rect x="46" y="63.3" width="17.8" height="6" fill="#b2b2b2"/><rect x="58.3" y="64.4" width="3.4" height="3.8" fill="#d0d0d0" stroke="#666" stroke-width="0.8"/>
<rect x="46" y="72.3" width="4.1" height="4.1" fill="#1e88e5"/>
<rect x="46" y="78.2" width="4.1" height="4.1" fill="#1e88e5"/>
<rect x="46" y="84.1" width="4.1" height="4.1" fill="#1e88e5"/>
<rect x="53.1" y="72.3" width="4.1" height="4.1" fill="#1e88e5"/>
<rect x="53.1" y="78.2" width="4.1" height="4.1" fill="#1e88e5"/>
<rect x="53.1" y="84.1" width="4.1" height="4.1" fill="#1e88e5"/>
<rect x="60.2" y="72.3" width="4.1" height="4.1" fill="#1e88e5"/>
<rect x="60.2" y="78.2" width="4.1" height="4.1" fill="#1e88e5"/>
<rect x="60.2" y="84.1" width="4.1" height="4.1" fill="#1e88e5"/>
<circle cx="67" cy="83.8" r="8.7" fill="#fcfcfc"/><circle cx="67" cy="83.8" r="8" fill="#27a844"/><path d="M62.6,84.2 L65.6,87 L71.2,80.9" fill="none" stroke="#fff" stroke-width="2.1"/>
<path d="M55.8,112 L61,112 L58.4,114.8 Z" fill="#8a8a8a"/>
<rect x="108.5" y="60.4" width="24.2" height="29.2" fill="#f0f0f0" stroke="#555" stroke-width="1.1"/>
<text x="120.3" y="74.2" font-family="Liberation Sans,sans-serif" font-weight="bold" font-size="12.5" fill="#1e88e5" text-anchor="middle">G</text>
<path d="M111.8,79.7 h2.2 M115.6,79.7 h13.4 M111.8,83.4 h2.2 M115.6,83.4 h13.4" stroke="#555" stroke-width="1"/>
<rect x="126.2" y="81" width="12" height="12" fill="#fcfcfc" opacity="0.0"/><path d="M127,86.9 h10.2 M132.1,81.8 v10.2" stroke="#ff0000" stroke-width="1.9"/>
<path d="M143.9,112 L149.1,112 L146.5,114.8 Z" fill="#8a8a8a"/>
<path d="M157.9,75.8 L174,60.5 L190.2,74.4 L190.2,77.4 L174,92 L157.9,78.6 Z" fill="#cbcbcb"/>
<path d="M157.9,75.8 L174,60.5 L190.2,74.4 L174,89 Z" fill="#dcdcdc"/>
<path d="M163,73.5 L174,63 L185,72.5 L174,84 Z" fill="#d2d2d2"/><path d="M163,72 L174,61.5 L185,71 L174,82 Z" fill="#e0e0e0"/>
<path d="M167.5,69.5 L174,63.5 L180.8,69 L174,76.5 Z" fill="#d0d0d0"/><path d="M167.5,68 L174,62 L180.8,67.5 L174,75 Z" fill="#e4e4e4"/>
<rect x="179.2" y="81.2" width="11.6" height="11.6" fill="#fcfcfc"/><path d="M180,86.9 h10 M185,81.9 v10" stroke="#bdbdbd" stroke-width="1.7"/>
<path d="M200,78 L205,74.4 L217.5,74.4 L217.5,87.5 L212.5,91.5 L200,91.5 Z" fill="#e2e2e2"/><path d="M200,78 L205,74.4 L217.5,74.4 L212.5,78 Z" fill="#efefef"/><path d="M212.5,78 L217.5,74.4 L217.5,87.5 L212.5,91.5 Z" fill="#d6d6d6"/>
<path d="M216.7,75.5 L216.7,65.7" stroke="#c4c4c4" stroke-width="1.5" fill="none"/><path d="M216.7,60.6 L214.1,65.7 L219.2,65.7 Z" fill="#c4c4c4"/>
<path d="M216.7,75.2 L225.4,69.9" stroke="#c4c4c4" stroke-width="1.5" fill="none"/><path d="M229.8,67.3 L224.1,67.8 L226.7,72.1 Z" fill="#c4c4c4"/>
<path d="M216.7,74.9 L224.6,78.1" stroke="#c4c4c4" stroke-width="1.5" fill="none"/><path d="M228.8,79.8 L225.5,76.0 L223.8,80.2 Z" fill="#c4c4c4"/>
<path d="M222,86.9 h10 M227,81.9 v10" stroke="#c4c4c4" stroke-width="1.7"/>
<path d="M260,76 L273.5,65 L277,67.5 L277,79 L279,82 L288.5,75.5 L290.5,77.5 L290.5,80 L275,91.5 L260,86.5 Z" fill="#c6c6c6"/>
<path d="M260,76 L273.5,65 L277,67.5 L277,78 C270,84 266,86 263,86 Z" fill="#dedede"/>
<path d="M263,86 C268,86 272,83 277,78 L279,82 L288.5,75.5 L290.5,77.5 L275,89 Z" fill="#ececec"/>
<rect x="274" y="60.2" width="14.6" height="2.4" fill="#6e6e6e"/>
<rect x="277.4" y="62.6" width="0.0" height="0.0" fill="#d4d4d4"/><rect x="277.4" y="62.6" width="0.0" height="0.0" fill="#b4b4b4"/><rect x="277.4" y="62.6" width="0.0" height="0.0" fill="none" stroke="#8a8a8a" stroke-width="0.7"/><path d="M277.4,63.6 L285.9,63.6 L285.9,75.9 Q285.9,77.4 284.4,77.4 L278.9,77.4 Q277.4,77.4 277.4,75.9 Z" fill="#a8a8a8"/><path d="M277.4,67.7 L285.9,65.1 L285.9,66.7 L277.4,69.3 Z" fill="#5a5a5a" opacity="0.8"/><path d="M277.4,71.9 L285.9,69.3 L285.9,70.9 L277.4,73.5 Z" fill="#5a5a5a" opacity="0.8"/><path d="M277.4,76.1 L285.9,73.5 L285.9,75.1 L277.4,77.7 Z" fill="#5a5a5a" opacity="0.8"/>
<path d="M264,78.2 C264,83.5 267,86.2 271.4,86.2" fill="none" stroke="#1e88e5" stroke-width="2.2"/><path d="M271.8,85.8 L279.2,80" stroke="#22c55e" stroke-width="3"/>
<path d="M324.8,73.9 L337.7,86.4 L342.3,81.8 L329.4,69.8 L333.6,65.6 L346.5,77.6 L350.7,73.5 L337.7,61.0" fill="none" stroke="#14b4e4" stroke-width="1.5" stroke-linejoin="miter"/>
<rect x="340.3" y="84.3" width="3.6" height="7.4" fill="#ffa500" stroke="#c97f00" stroke-width="0.6"/><rect x="346.4" y="76.5" width="3.5" height="15.2" fill="#2ecc71" stroke="#1fa055" stroke-width="0.6"/><rect x="352.3" y="80.3" width="3.5" height="11.4" fill="#14b4e4" stroke="#0e8fb8" stroke-width="0.6"/>
<path d="M380.7,73.9 L393.6,86.4 L398.2,81.8 L385.3,69.8 L389.5,65.6 L402.4,77.6 L406.6,73.5 L393.6,61.0" fill="none" stroke="#14b4e4" stroke-width="1.5" stroke-linejoin="miter"/>
<rect x="395.3" y="87.4" width="4.3" height="4.3" fill="#d8d8d8" stroke="#9a9a9a" stroke-width="0.7"/>
<path d="M397.4,86.4 L397.4,81.1" stroke="#1e88e5" stroke-width="1.3" fill="none"/><path d="M397.4,76.0 L394.8,81.1 L399.9,81.1 Z" fill="#1e88e5"/>
<path d="M401.2,85.4 L404.3,82.5" stroke="#1fa055" stroke-width="1.3" fill="none"/><path d="M408.0,79.0 L402.5,80.6 L406.0,84.4 Z" fill="#1fa055"/>
<path d="M401.0,89.5 L405.9,89.5" stroke="#ff3030" stroke-width="1.3" fill="none"/><path d="M411.0,89.5 L405.9,87.0 L405.9,92.0 Z" fill="#ff3030"/>
<path d="M435.2,68.5 L442.8,60.4 L464.9,60.4 L457.3,68.5 Z" fill="#ececec"/><rect x="435.2" y="68.5" width="22.1" height="21" fill="#dadada"/><path d="M457.3,68.5 L464.9,60.4 L464.9,82 L457.3,89.5 Z" fill="#b9b9b9"/>
<path d="M435.2,68.5 L442.8,60.4 L464.9,60.4 L464.9,82 L457.3,89.5 L435.2,89.5 Z" fill="none" stroke="#cfcfcf" stroke-width="0.6"/>
<circle cx="460.6" cy="84.1" r="5.2" fill="none" stroke="#fcfcfc" stroke-width="4.2"/><path d="M456,81.6 A5.2,5.2 0 1 1 457,88" fill="none" stroke="#1e88e5" stroke-width="1.7"/><path d="M450.4,79.2 L457.6,78.4 L455.4,84.6 Z" fill="#1e88e5" stroke="#fcfcfc" stroke-width="0.5"/>
<path d="M482.2,62.4 h11.8 v4.4 h-1.6 v2.6 h-2.4 v20 h-3.8 v-20 h-2.4 v-2.6 h-1.6 Z" fill="#5ba7e0" stroke="#3f86c2" stroke-width="0.7"/><rect x="482.6" y="62.8" width="11" height="3.6" fill="#90cbf9"/>
<path d="M502.2,62.4 h11.8 v4.4 h-1.6 v2.6 h-2.4 v20 h-3.8 v-20 h-2.4 v-2.6 h-1.6 Z" fill="#e066a8" stroke="#b8478a" stroke-width="0.7"/><rect x="502.6" y="62.8" width="11" height="3.6" fill="#f9a8d4"/>
<path d="M492.2,79.4 L499.5,79.4" stroke="#222" stroke-width="1.1" fill="none"/><path d="M504.0,79.4 L499.5,77.2 L499.5,81.7 Z" fill="#222"/>
<circle cx="561" cy="76" r="15.6" fill="#f2f2f2" stroke="#444" stroke-width="1.2"/><circle cx="561" cy="67.9" r="1.9" fill="#1e88e5"/><path d="M557.8,73.9 h5.2 v11.8 h-3.6 v-9 h-1.6 Z" fill="#1e88e5"/>
<path d="M629.9,69.6 C634.2,69.6 636.8,72.8 636.8,76.4 C636.8,80 633.6,82.4 633.2,86 L626.6,86 C626.2,82.4 623,80 623,76.4 C623,72.8 625.6,69.6 629.9,69.6 Z" fill="#ffa000"/>
<path d="M627.1,87.3 h5.6 v1.8 c0,1.6 -1.2,2.4 -2.8,2.4 c-1.6,0 -2.8,-0.8 -2.8,-2.4 Z" fill="#555"/>
<path d="M629.9,60.3 V65.6 M621.2,64 L625.4,67.4 M638.8,64 L634.6,67.4" stroke="#ffa000" stroke-width="1.7" stroke-linecap="round"/>
<path d="M661,60.3 H693" stroke="#444" stroke-width="1" stroke-dasharray="4.2,2.7"/>
<path d="M661.2,62 V83.8 M692.7,62 V83.8" stroke="#7fdbf0" stroke-width="1.1"/>
<path d="M661.2,85.3 C662,88.8 664.5,91 667.8,91.6 M692.7,85.3 C692,88.8 689.4,91 686.2,91.6" fill="none" stroke="#555" stroke-width="1.3"/>
<path d="M665.0,72.6 L669.0,72.6 C672.4,72.6 672.9,67.0 676.7,67.0 C680.6,67.0 681.0,72.6 684.4,72.6 L688.8,72.6" fill="none" stroke="#22dd66" stroke-width="1.5" stroke-linecap="round"/>
<path d="M665.0,78.3 L669.0,78.3 C672.4,78.3 672.9,72.7 676.7,72.7 C680.6,72.7 681.0,78.3 684.4,78.3 L688.8,78.3" fill="none" stroke="#22dd66" stroke-width="1.5" stroke-linecap="round"/>
<path d="M665.0,84.1 L669.0,84.1 C672.4,84.1 672.9,78.5 676.7,78.5 C680.6,78.5 681.0,84.1 684.4,84.1 L688.8,84.1" fill="none" stroke="#22dd66" stroke-width="1.5" stroke-linecap="round"/>
<path d="M669.6,91.3 L670.2,91.3 C673.1,91.3 673.6,86.5 676.9,86.5 C680.3,86.5 680.7,91.3 683.6,91.3 L684.2,91.3" fill="none" stroke="#22dd66" stroke-width="1.5" stroke-linecap="round"/>
<path d="M702.9,60.3 H734.9" stroke="#444" stroke-width="1" stroke-dasharray="4.2,2.7"/>
<path d="M703.1,62 V83.8 M734.6,62 V83.8" stroke="#444" stroke-width="1.1"/>
<path d="M703.1,85.3 C703.9,88.8 706.4,91 709.6999999999999,91.6 M734.6,85.3 C733.9,88.8 731.3,91 728.1,91.6" fill="none" stroke="#ff3030" stroke-width="1.3"/>
<path d="M706.9,72.6 L710.9,72.6 C714.3,72.6 714.7,67.0 718.6,67.0 C722.4,67.0 722.9,72.6 726.3,72.6 L730.7,72.6" fill="none" stroke="#22dd66" stroke-width="1.5" stroke-linecap="round"/>
<path d="M706.9,78.3 L710.9,78.3 C714.3,78.3 714.7,72.7 718.6,72.7 C722.4,72.7 722.9,78.3 726.3,78.3 L730.7,78.3" fill="none" stroke="#22dd66" stroke-width="1.5" stroke-linecap="round"/>
<path d="M706.9,84.1 L710.9,84.1 C714.3,84.1 714.7,78.5 718.6,78.5 C722.4,78.5 722.9,84.1 726.3,84.1 L730.7,84.1" fill="none" stroke="#22dd66" stroke-width="1.5" stroke-linecap="round"/>
<path d="M711.5,91.3 L712.1,91.3 C715.0,91.3 715.4,86.5 718.8,86.5 C722.1,86.5 722.6,91.3 725.5,91.3 L726.1,91.3" fill="none" stroke="#22dd66" stroke-width="1.5" stroke-linecap="round"/>
<path d="M745.2,65.5 L753.4,65.5 C756.7,65.5 757.2,60.5 761.0,60.5 C764.8,60.5 765.3,65.5 768.6,65.5 L776.8,65.5" fill="none" stroke="#22dd66" stroke-width="1.5" stroke-linecap="round"/>
<path d="M745.2,74.3 L753.4,74.3 C756.7,74.3 757.2,69.3 761.0,69.3 C764.8,69.3 765.3,74.3 768.6,74.3 L776.8,74.3" fill="none" stroke="#22dd66" stroke-width="1.5" stroke-linecap="round"/>
<path d="M745.2,83.3 L753.4,83.3 C756.7,83.3 757.2,78.3 761.0,78.3 C764.8,78.3 765.3,83.3 768.6,83.3 L776.8,83.3" fill="none" stroke="#22dd66" stroke-width="1.5" stroke-linecap="round"/>
<path d="M745.2,91.5 L753.4,91.5 C756.7,91.5 757.2,86.5 761.0,86.5 C764.8,86.5 765.3,91.5 768.6,91.5 L776.8,91.5" fill="none" stroke="#22dd66" stroke-width="1.5" stroke-linecap="round"/>
<rect x="789.4" y="60.3" width="5.7" height="12.1" fill="#d4d4d4"/><rect x="795.1" y="60.3" width="5.7" height="12.1" fill="#b4b4b4"/><rect x="789.4" y="60.3" width="11.4" height="12.1" fill="none" stroke="#8a8a8a" stroke-width="0.7"/><path d="M792,73.4 L797.8,73.4 L797.8,89.8 Q797.8,91.3 796.3,91.3 L793.5,91.3 Q792,91.3 792,89.8 Z" fill="#a8a8a8"/><path d="M792,77.5 L797.8,74.9 L797.8,76.5 L792,79.1 Z" fill="#5a5a5a" opacity="0.8"/><path d="M792,81.7 L797.8,79.1 L797.8,80.7 L792,83.3 Z" fill="#5a5a5a" opacity="0.8"/><path d="M792,85.9 L797.8,83.3 L797.8,84.9 L792,87.5 Z" fill="#5a5a5a" opacity="0.8"/><path d="M792,90.1 L797.8,87.5 L797.8,89.1 L792,91.7 Z" fill="#5a5a5a" opacity="0.8"/>
<rect x="802.3" y="87.6" width="4.3" height="3.9" fill="#d8d8d8" stroke="#9a9a9a" stroke-width="0.7"/>
<path d="M804.4,86.0 L804.4,80.9" stroke="#1e88e5" stroke-width="1.3" fill="none"/><path d="M804.4,75.8 L801.9,80.9 L806.9,80.9 Z" fill="#1e88e5"/>
<path d="M808.0,85.7 L811.4,82.6" stroke="#1fa055" stroke-width="1.3" fill="none"/><path d="M815.2,79.2 L809.7,80.7 L813.1,84.5 Z" fill="#1fa055"/>
<path d="M808.0,89.5 L813.2,89.5" stroke="#ff3030" stroke-width="1.3" fill="none"/><path d="M818.3,89.5 L813.2,87.0 L813.2,92.0 Z" fill="#ff3030"/>
<path d="M834,86 C838,80.5 842.5,78 847.9,78 C853.3,78 857.8,80.5 861.8,86" fill="none" stroke="#22dd66" stroke-width="2.6" stroke-dasharray="3.6,1.5"/>
<path d="M832,86.8 L837.5,82.5 L838,86.8 Z M863.8,86.8 L858.3,82.5 L857.8,86.8 Z" fill="#22dd66"/>
<path d="M847.9,65.3 V74.3 M833.3,69 L839.1,76.7 M862.9,69 L857,76.7" stroke="#ff3030" stroke-width="1.3"/>
<circle cx="840.3" cy="81.7" r="1.6" fill="#ff3030"/>
<circle cx="847.9" cy="79" r="1.6" fill="#ff3030"/>
<circle cx="855.5" cy="81.7" r="1.6" fill="#ff3030"/>
<path d="M903.9,61.4 V70.8 M888.9,65.3 L895.3,72.6 M919.1,65.3 L913.2,72.6" stroke="#c2c2c2" stroke-width="1.2"/>
<path d="M890.5,82 C894,77 899,74.6 904,74.4 C906,74.4 907.5,74.6 909,75.2" fill="none" stroke="#c8c8c8" stroke-width="2.2" stroke-dasharray="3,1.6"/><path d="M888,82.8 L893.5,79 L893.5,82.8 Z" fill="#c8c8c8"/>
<circle cx="896.4" cy="77.3" r="1.5" fill="#b8b8b8"/><circle cx="903.6" cy="74.8" r="1.5" fill="#b8b8b8"/>
<circle cx="912" cy="83.7" r="7.4" fill="#fcfcfc" stroke="#c2c2c2" stroke-width="1.2"/><path d="M912,78.6 L914.2,83.7 L912,88.8 L909.8,83.7 Z" fill="#c8c8c8"/><circle cx="912" cy="83.7" r="1" fill="#fcfcfc"/>
<path d="M944,83.7 C946,75.5 951,70.6 957.9,70.6 C964.8,70.6 969.8,75.5 971.8,83.7" fill="none" stroke="#22dd66" stroke-width="3.6" stroke-dasharray="4.6,1.3"/>
<circle cx="948.8" cy="74.7" r="2.1" fill="#ff3030"/>
<circle cx="957.9" cy="70.8" r="2.1" fill="#ff3030"/>
<circle cx="967.2" cy="74.7" r="2.1" fill="#ff3030"/>
<path d="M984.2,65.5 L992.4,65.5 C995.7,65.5 996.2,60.5 1000.0,60.5 C1003.8,60.5 1004.3,65.5 1007.6,65.5 L1015.8,65.5" fill="none" stroke="#ffa500" stroke-width="1.5" stroke-linecap="round"/>
<path d="M984.2,74.0 L992.4,74.0 C995.7,74.0 996.2,69.0 1000.0,69.0 C1003.8,69.0 1004.3,74.0 1007.6,74.0 L1015.8,74.0" fill="none" stroke="#ff3030" stroke-width="1.5" stroke-linecap="round"/>
<path d="M984.2,83.3 L992.4,83.3 C995.7,83.3 996.2,78.3 1000.0,78.3 C1003.8,78.3 1004.3,83.3 1007.6,83.3 L1015.8,83.3" fill="none" stroke="#22dd66" stroke-width="1.5" stroke-linecap="round"/>
<path d="M984.2,91.5 L992.4,91.5 C995.7,91.5 996.2,86.5 1000.0,86.5 C1003.8,86.5 1004.3,91.5 1007.6,91.5 L1015.8,91.5" fill="none" stroke="#1e88e5" stroke-width="1.5" stroke-linecap="round"/>
<path d="M1040.4,73.1 L1051.5,73.1 L1057.7,85.4 L1033.3,85.4 Z" fill="#7fe0f0" stroke="#5ab4c4" stroke-width="0.9"/>
<path d="M1032.2,66.4 L1045,66.4 L1050.9,78.4 L1026.3,78.4 Z" fill="#f28b8b" stroke="#d07070" stroke-width="0.9"/>
<path d="M1026.9,71.4 H1052" stroke="#ff3030" stroke-width="1" stroke-dasharray="3.6,1.6"/><path d="M1036.6,71.4 H1044.6" stroke="#fff" stroke-width="1.4"/>
<path d="M1090.7,72.6 L1095.2,72.6 L1100.7,84.5 L1076.4,84.5 Z" fill="#1e88e5" stroke="#1565c0" stroke-width="0.9"/>
<path d="M1075.5,65.3 L1087.8,65.3 L1093.6,77.2 L1069.4,77.2 Z" fill="#f28b8b" stroke="#d07070" stroke-width="0.9"/>
<path d="M1070.2,69.6 H1095.4 V77.2" fill="none" stroke="#ff3030" stroke-width="1" stroke-dasharray="3.6,1.6"/><path d="M1079.4,69.6 H1084.6" stroke="#fff" stroke-width="1.4"/><path d="M1095.4,78 V87" stroke="#22d3ee" stroke-width="1.1" stroke-dasharray="4,1.5"/>
<path d="M1128.8,75 L1140,66.5 L1144,68.5 L1144,78 L1157,72.5 L1159,75 L1159,82 L1141,91.2 L1128.8,87 Z" fill="#dcdcdc"/><path d="M1128.8,75 L1140,66.5 L1144,68.5 L1144,79 C1138,84 1134,86 1131,86 Z" fill="#e8e8e8"/>
<rect x="1143" y="60.2" width="14.8" height="2.4" fill="#c8c8c8"/><rect x="1146.4" y="62.6" width="0.0" height="0.0" fill="#e2e2e2"/><rect x="1146.4" y="62.6" width="0.0" height="0.0" fill="#d2d2d2"/><rect x="1146.4" y="62.6" width="0.0" height="0.0" fill="none" stroke="#cfcfcf" stroke-width="0.7"/><path d="M1146.4,63.6 L1155,63.6 L1155,75.7 Q1155,77.2 1153.5,77.2 L1147.9,77.2 Q1146.4,77.2 1146.4,75.7 Z" fill="#d8d8d8"/><path d="M1146.4,67.7 L1155,65.1 L1155,66.7 L1146.4,69.3 Z" fill="#c4c4c4" opacity="0.8"/><path d="M1146.4,71.9 L1155,69.3 L1155,70.9 L1146.4,73.5 Z" fill="#c4c4c4" opacity="0.8"/><path d="M1146.4,76.1 L1155,73.5 L1155,75.1 L1146.4,77.7 Z" fill="#c4c4c4" opacity="0.8"/>
<path d="M1152,77 L1160.2,91.4 L1143.8,91.4 Z" fill="#d4d4d4" stroke="#fcfcfc" stroke-width="0.8"/><path d="M1152,81.8 V87 M1152,88.4 V90" stroke="#fcfcfc" stroke-width="1.5"/>
<path d="M1188.4,60.9 L1188.4,91.2 L1209.4,91.2 Z" fill="#6cb4e8" stroke="#4a96d0" stroke-width="0.8"/>
<rect x="1207.2" y="60.6" width="5.8" height="10.7" fill="#d4d4d4"/><rect x="1213.0" y="60.6" width="5.8" height="10.7" fill="#b4b4b4"/><rect x="1207.2" y="60.6" width="11.5" height="10.7" fill="none" stroke="#8a8a8a" stroke-width="0.7"/><path d="M1210.2,72.3 L1215.8,72.3 L1215.8,86.8 Q1215.8,88.3 1214.3,88.3 L1211.7,88.3 Q1210.2,88.3 1210.2,86.8 Z" fill="#a8a8a8"/><path d="M1210.2,76.4 L1215.8,73.8 L1215.8,75.4 L1210.2,78.0 Z" fill="#5a5a5a" opacity="0.8"/><path d="M1210.2,80.6 L1215.8,78.0 L1215.8,79.6 L1210.2,82.2 Z" fill="#5a5a5a" opacity="0.8"/><path d="M1210.2,84.8 L1215.8,82.2 L1215.8,83.8 L1210.2,86.4 Z" fill="#5a5a5a" opacity="0.8"/>
<circle cx="1209.4" cy="88.6" r="2.7" fill="#f0246e"/>
<path d="M1237.5,74 L1244.3,81.1 M1249.1,78 L1241.6,70.6 L1246.7,65.8 L1253.5,72.6 M1250.1,61.4 L1258.2,69.6" fill="none" stroke="#14b4e4" stroke-width="2.3"/>
<path d="M1244.3,81.1 L1249.7,86.9 L1254.2,82.1 L1249.1,78 M1253.5,72.6 L1256.6,76.9 M1258.2,69.6 L1261.3,71.8" fill="none" stroke="#ff3030" stroke-width="2.3"/>
<rect x="1257.6" y="72.6" width="10.6" height="20" fill="#fcfcfc"/>
<rect x="1259.2" y="74.3" width="3.8" height="6.5" fill="#d4d4d4"/><rect x="1263.0" y="74.3" width="3.8" height="6.5" fill="#b4b4b4"/><rect x="1259.2" y="74.3" width="7.5" height="6.5" fill="none" stroke="#8a8a8a" stroke-width="0.7"/><path d="M1261.3,81.8 L1265,81.8 L1265,90.1 Q1265,91.6 1263.5,91.6 L1262.8,91.6 Q1261.3,91.6 1261.3,90.1 Z" fill="#a8a8a8"/><path d="M1261.3,85.9 L1265,83.3 L1265,84.9 L1261.3,87.5 Z" fill="#5a5a5a" opacity="0.8"/><path d="M1261.3,90.1 L1265,87.5 L1265,89.1 L1261.3,91.7 Z" fill="#5a5a5a" opacity="0.8"/>
<rect x="1286" y="60.6" width="21.8" height="7" fill="#2edb70"/><rect x="1296.4" y="70.2" width="21.3" height="7" fill="#ffa500"/><rect x="1286" y="80.4" width="18.8" height="7.1" fill="#2edb70"/>
<circle cx="1311.5" cy="82.4" r="6.6" fill="#fcfcfc"/><path d="M1308,86.2 L1302.6,90.8" stroke="#fcfcfc" stroke-width="4.5" stroke-linecap="round"/><circle cx="1311.5" cy="82.4" r="4.7" fill="#fcfcfc" stroke="#1e88e5" stroke-width="2"/><path d="M1308,86.2 L1303,90.5" stroke="#1e88e5" stroke-width="2.4" stroke-linecap="round"/>
<circle cx="1495" cy="12.5" r="7" fill="none" stroke="#555" stroke-width="1.1"/>
<path d="M1529.5,14.5 h7" stroke="#444" stroke-width="1.2"/><path d="M1566.5,10.5 h5.5 v5 h-5.5 Z M1568.5,10.5 v-2 h5.5 v5 h-2" fill="none" stroke="#444" stroke-width="1"/><path d="M1602.5,7.5 l7.5,7.5 M1610,7.5 l-7.5,7.5" stroke="#444" stroke-width="1.2"/>
<path d="M1610.5,41 l3.5,-3.5 l3.5,3.5" fill="none" stroke="#555" stroke-width="1.3"/>
<path d="M89.5,158.5 l6,6 M95.5,158.5 l-6,6" stroke="#555" stroke-width="1.3"/><path d="M1609,159.5 l6,6 M1615,159.5 l-6,6" stroke="#555" stroke-width="1.3"/>
</svg>
<span class="t" style="left:1345px;top:5.5px;font-size:11.5px;color:#444;">?</span>
<svg class="ic" style="left:0;top:0" width="1623" height="1080" viewBox="0 0 1623 1080">
<defs><radialGradient id="vcsh" cx="0.5" cy="0.5" r="0.5"><stop offset="0" stop-color="#000" stop-opacity="0.22"/><stop offset="1" stop-color="#000" stop-opacity="0"/></radialGradient></defs>
<rect x="1585.5" y="188.6" width="7" height="31" fill="#d6d6d6" stroke="#9a9a9a" stroke-width="0.7"/>
<rect x="1592.5" y="194.2" width="14" height="5.5" fill="#3ab0b8" stroke="#2a8a92" stroke-width="0.6"/><rect x="1592.5" y="213.6" width="19.5" height="5.6" fill="#3ab0b8" stroke="#2a8a92" stroke-width="0.6"/>
<rect x="1605" y="190" width="7.5" height="14" rx="2.5" fill="#d0d0d0" stroke="#9a9a9a" stroke-width="0.7"/><rect x="1607" y="204" width="3.8" height="5.4" fill="#ffa000" stroke="#c97f00" stroke-width="0.5"/>
<path d="M1616,222 l0,-4.5 l-4.5,4.5 Z" fill="#111"/>
<path d="M1583.6,237.3 L1592.0,228.9 L1614.7,228.9 L1606.3,237.3 Z" fill="#5dade9"/><path d="M1583.6,237.3 H1606.3 V260.0 H1583.6 Z M1583.6,237.3 L1592.0,228.9 H1614.7 L1606.3,237.3 M1614.7,228.9 V251.6 L1606.3,260.0 M1592.0,228.9 V251.6 H1614.7 M1592.0,251.6 L1583.6,260.0" fill="none" stroke="#555" stroke-width="1.1" stroke-linejoin="round"/>
<path d="M1616,262 l0,-4.5 l-4.5,4.5 Z" fill="#111"/>
<path d="M1598.6,268.9 L1586.3,276.4 L1586.3,291.4 L1598.6,298.9 L1610.9,291.4 L1610.9,276.4 Z" fill="#fafafa" stroke="#666" stroke-width="1.1" stroke-linejoin="round"/>
<path d="M1586.3,276.4 L1598.6,284.9 L1610.9,276.4 M1598.6,284.9 L1598.6,298.9" fill="none" stroke="#666" stroke-width="1.1"/>
<path d="M1587.8,277.2 L1598.6,284.4 L1609.4,277.2 Z" fill="#5dade9"/>
<path d="M1616,302 l0,-4.5 l-4.5,4.5 Z" fill="#111"/>
<circle cx="1591.9" cy="326" r="7.6" fill="none" stroke="#555" stroke-width="2"/><path d="M1597.4,331.5 L1604.9,339.0" stroke="#555" stroke-width="2.6" stroke-linecap="round"/>
<path d="M1603.5,311.2 A6,6 0 1 1 1604,320.5" fill="none" stroke="#1e88e5" stroke-width="1.8"/><path d="M1599.6,311 L1605.4,308 L1605.2,314.4 Z" fill="#1e88e5"/>
<path d="M1585.5,355.3 H1600.5 L1608.6,363.5 V384.4 H1585.5 Z" fill="#f0f0f0" stroke="#666" stroke-width="1"/><path d="M1600.5,355.3 L1608.6,363.5 H1600.5 Z" fill="#555"/>
<circle cx="1603.6" cy="380.3" r="8.6" fill="#fdfdfd"/><path d="M1597.6,381.8 A6.2,6.2 0 0 1 1608,375.9 M1609.6,378.8 A6.2,6.2 0 0 1 1599.2,384.7" fill="none" stroke="#1e88e5" stroke-width="2"/><path d="M1610.8,373.2 L1610.4,379.2 L1605,377 Z M1596.4,387.4 L1596.8,381.4 L1602.2,383.6 Z" fill="#1e88e5"/>
<circle cx="1591.9" cy="420.6" r="7.2" fill="none" stroke="#555" stroke-width="2"/><path d="M1597.1,425.8 L1604.6,433.3" stroke="#555" stroke-width="2.6" stroke-linecap="round"/>
<rect x="1601" y="402.8" width="13.4" height="13.4" fill="#fdfdfd" stroke="#555" stroke-width="0.9"/><path d="M1603,405 l9.4,9.4 M1612.4,405 l-9.4,9.4" stroke="#555" stroke-width="0.9"/><path d="M1603,408 v-3 h3 M1609.4,405 h3 v3 M1612.4,411.4 v3 h-3 M1606,414.4 h-3 v-3" fill="none" stroke="#555" stroke-width="0.9"/>
<circle cx="1592.4" cy="466" r="7.6" fill="none" stroke="#555" stroke-width="2"/><path d="M1597.9,471.5 L1605.4,479.0" stroke="#555" stroke-width="2.6" stroke-linecap="round"/>
<rect x="1601.6" y="449.2" width="13" height="9.2" fill="#fdfdfd" stroke="#555" stroke-width="1"/>
<path d="M1617.5,483.5 l0,-4.5 l-4.5,4.5 Z" fill="#111"/>
<rect x="1579.9" y="493" width="38.6" height="37.6" fill="#cce4f7" stroke="#99c9ef" stroke-width="1"/>
<clipPath id="sph"><circle cx="1598.6" cy="512" r="15.2"/></clipPath>
<g clip-path="url(#sph)"><rect x="1580" y="495" width="40" height="36" fill="#8ec8f6"/><path d="M1580,495 H1606 C1612,503 1608,510 1603,514 C1598,518 1600,524 1596,528 L1580,510 Z" fill="#2bd66d"/><path d="M1580,508 C1586,503 1594,506 1596,512 C1597,518 1603,520 1602,530 L1580,532 Z" fill="#f08a8a"/><ellipse cx="1594" cy="503" rx="8" ry="5" fill="#fff" opacity="0.35"/></g>
<circle cx="1598.6" cy="512" r="15.2" fill="none" stroke="#6aa9d8" stroke-width="0.8"/>
<path d="M1618,530 l0,-4.5 l-4.5,4.5 Z" fill="#111"/>
<path d="M1583.6,551.6999999999999 H1606.3 V574.4 H1583.6 Z M1583.6,551.6999999999999 L1592.0,543.3 H1614.7 L1606.3,551.6999999999999 M1614.7,543.3 V566.0 L1606.3,574.4 M1592.0,543.3 V566.0 H1614.7 M1592.0,566.0 L1583.6,574.4" fill="none" stroke="#555" stroke-width="1.0" stroke-linejoin="round"/>
<path d="M1583.6,599.0 L1592.0,590.6 L1614.7,590.6 L1614.7,613.3000000000001 L1606.3,621.7 L1583.6,621.7 Z" fill="#90caf9"/><path d="M1583.6,599.0 H1606.3 V621.7 H1583.6 Z M1583.6,599.0 L1592.0,590.6 H1614.7 L1606.3,599.0 M1614.7,590.6 V613.3000000000001 L1606.3,621.7 M1592.0,590.6 V613.3000000000001 H1614.7 M1592.0,613.3000000000001 L1583.6,621.7" fill="none" stroke="#5a9fd8" stroke-width="1.0" stroke-linejoin="round"/>
<rect x="1584.2" y="649.6" width="29" height="16" fill="none" stroke="#555" stroke-width="1.1"/>
<path d="M1593,639.6 L1593.4,658 L1598,654.2 L1601.6,662.4 L1604.6,661 L1601,653 L1607.6,652.4 Z" fill="#1e88e5" stroke="#fdfdfd" stroke-width="0.8"/>
<path d="M1617.5,670 l0,-4.5 l-4.5,4.5 Z" fill="#111"/>
<path d="M1584,678.4 L1584.6,703 L1590.8,698 L1595.4,708.4 L1599.4,706.6 L1594.8,696.4 L1603.4,695.6 Z" fill="#1e88e5"/>
<path d="M1604.5,680.2 A5.6,5.6 0 1 1 1604.8,689.4" fill="none" stroke="#777" stroke-width="1.5"/><path d="M1601,681 L1606,677.6 L1606.4,683.6 Z" fill="#777"/>
<ellipse cx="1509" cy="232" rx="42" ry="22" fill="url(#vcsh)"/>
<path d="M1475.5,190.5 L1507.5,169 L1540,188.5 L1536,222 L1508.5,242.5 L1480,218.5 Z" fill="#ececec"/>
<path d="M1475.5,190.5 L1507.5,169 L1540,188.5 L1508.5,209.5 Z" fill="#efefef"/><path d="M1475.5,190.5 L1508.5,209.5 L1508.5,242.5 L1480,218.5 Z" fill="#e4e4e4"/><path d="M1508.5,209.5 L1540,188.5 L1536,222 L1508.5,242.5 Z" fill="#e9e9e9"/>
<path d="M1475.5,190.5 L1507.5,169 L1540,188.5 L1536,222 L1508.5,242.5 L1480,218.5 Z M1475.5,190.5 L1508.5,209.5 L1540,188.5 M1508.5,209.5 V242.5" fill="none" stroke="#8a8a8a" stroke-width="0.9" stroke-dasharray="4.5,2.2"/>
<text transform="translate(1508,190.5) rotate(-33)" font-family="Liberation Sans,sans-serif" font-size="10" fill="#b4b4b4" text-anchor="middle">TOP</text>
<text transform="matrix(0.86,0.5,0,1,1493.5,222)" font-family="Liberation Sans,sans-serif" font-size="8.5" fill="#b4b4b4" text-anchor="middle">LEFT</text>
<text transform="matrix(0.8,-0.55,0,1,1525,220.5)" font-family="Liberation Sans,sans-serif" font-size="8" fill="#b4b4b4" text-anchor="middle">FRONT</text>
<path d="M148.5,1003.5 L175,985" stroke="#b0b0b0" stroke-width="1"/><path d="M176.5,983.5 L166,988 L170.5,994 Z" fill="none" stroke="#b0b0b0" stroke-width="1"/>
<path d="M148.5,1003.5 L127,991" stroke="#a40000" stroke-width="1.2"/><path d="M119.5,986.5 L131,988 L126.5,995.5 Z" fill="none" stroke="#a40000" stroke-width="1.2"/><path d="M119.5,986.5 L129,992" stroke="#a40000" stroke-width="1"/>
<path d="M148.5,1004 V984" stroke="#ff0000" stroke-width="2.2"/><path d="M149.5,975.5 L145.5,984.5 L153.5,984.5 Z" fill="none" stroke="#ff0000" stroke-width="1.2"/><path d="M149.5,975.5 V985" stroke="#ff0000" stroke-width="1"/>
<text x="127.5" y="980.5" font-family="Liberation Sans,sans-serif" font-size="12.5" font-weight="bold" fill="#a40000" text-anchor="middle">Y</text>
<text x="158" y="969.5" font-family="Liberation Sans,sans-serif" font-size="12.5" font-weight="bold" fill="#ff0000" text-anchor="middle">Z</text>
<text x="185" y="978" font-family="Liberation Sans,sans-serif" font-size="12.5" fill="#b0b0b0" text-anchor="middle">X</text>
<rect x="221" y="1054" width="18" height="17" fill="#f4f4f4" stroke="#d0d0d0" stroke-width="1"/><path d="M228,1058 h9 M228,1062.5 h9 M228,1067 h9" stroke="#dcdcdc" stroke-width="1"/>
<text x="224.5" y="1059.5" font-family="Liberation Sans,sans-serif" font-size="4.5" fill="#c4c4c4" text-anchor="middle">X</text><text x="224.5" y="1064" font-family="Liberation Sans,sans-serif" font-size="4.5" fill="#c4c4c4" text-anchor="middle">Y</text><text x="224.5" y="1068.5" font-family="Liberation Sans,sans-serif" font-size="4.5" fill="#c4c4c4" text-anchor="middle">Z</text>
<path d="M253,1067.5 L261.5,1059" stroke="#c4c4c4" stroke-width="1"/><circle cx="251.5" cy="1068.5" r="2.4" fill="none" stroke="#c4c4c4" stroke-width="0.9"/><path d="M247.5,1068.5 h8 M251.5,1064.5 v8" stroke="#c4c4c4" stroke-width="0.8"/><circle cx="263" cy="1057" r="2.6" fill="#d4d4d4" stroke="#c4c4c4" stroke-width="0.7"/>
<rect x="377.5" y="1053.5" width="13" height="17" fill="#c9c9c9" stroke="#666" stroke-width="1"/><rect x="386" y="1055.5" width="2.6" height="2.6" fill="#e4e4e4" stroke="#555" stroke-width="0.6"/>
<rect x="380" y="1060" width="2" height="2" fill="#8a8a8a"/>
<rect x="380" y="1063.4" width="2" height="2" fill="#8a8a8a"/>
<rect x="380" y="1066.8" width="2" height="2" fill="#8a8a8a"/>
<rect x="383.6" y="1060" width="2" height="2" fill="#8a8a8a"/>
<rect x="383.6" y="1063.4" width="2" height="2" fill="#8a8a8a"/>
<rect x="383.6" y="1066.8" width="2" height="2" fill="#8a8a8a"/>
<rect x="387.2" y="1060" width="2" height="2" fill="#8a8a8a"/>
<rect x="387.2" y="1063.4" width="2" height="2" fill="#8a8a8a"/>
<rect x="387.2" y="1066.8" width="2" height="2" fill="#8a8a8a"/>
<rect x="389.6" y="1063.5" width="8.4" height="9" fill="#f0f0f0"/><rect x="390.3" y="1064.3" width="2.4" height="7.8" fill="#1e88e5"/><rect x="394.6" y="1064.3" width="2.4" height="7.8" fill="#1e88e5"/>
<path d="M413.5,1054.5 V1061.5 M416.3,1057.5 V1061.5 M419.1,1057.5 V1061.5 M421.9,1057.5 V1061.5 M424.5,1054.5 V1061.5 M427.2,1057.5 V1061.5 M430,1057.5 V1061.5 M432.8,1057.5 V1061.5 M434.5,1054.5 V1061.5" stroke="#1e88e5" stroke-width="0.9"/>
<text x="414.8" y="1072.3" font-family="Liberation Sans,sans-serif" font-size="8.5" fill="#1e88e5" text-anchor="middle">0</text>
<text x="424.3" y="1072.3" font-family="Liberation Sans,sans-serif" font-size="8.5" fill="#1e88e5" text-anchor="middle">1</text>
<text x="432.8" y="1072.3" font-family="Liberation Sans,sans-serif" font-size="8.5" fill="#1e88e5" text-anchor="middle">2</text>
<circle cx="510.5" cy="1062" r="7.6" fill="none" stroke="#1e88e5" stroke-width="1.2"/><path d="M500,1062 h21 M510.5,1051.5 v21" stroke="#1e88e5" stroke-width="1.1"/>
<path d="M596.8,1054 H604.4 V1062.5 L602.6,1065.5 H598.6 L596.8,1062.5 Z" fill="#e8f2fb" stroke="#1e88e5" stroke-width="1.1"/><path d="M586,1065.8 h10" stroke="#1e88e5" stroke-width="1.4" stroke-dasharray="1.2,1"/><path d="M597.6,1068 h6 M598,1070.2 h5.2 M598.6,1072.4 h4" stroke="#1e88e5" stroke-width="0.9"/>
<circle cx="682" cy="1062.5" r="6.8" fill="none" stroke="#1e88e5" stroke-width="1.2"/><path d="M675,1071.5 L689.5,1053" stroke="#1e88e5" stroke-width="1.2"/>
<path d="M775.5,1054.5 L761.5,1066.5" stroke="#1e88e5" stroke-width="1.3"/><path d="M760.3,1067.6 L761.2,1062.2 M760.3,1067.6 L765.8,1067" stroke="#1e88e5" stroke-width="1.2"/><path d="M758.5,1062 C759,1067.5 762,1071 767.5,1072.5" fill="none" stroke="#1e88e5" stroke-width="1.1"/>
</svg>
</div>
</body></html>
